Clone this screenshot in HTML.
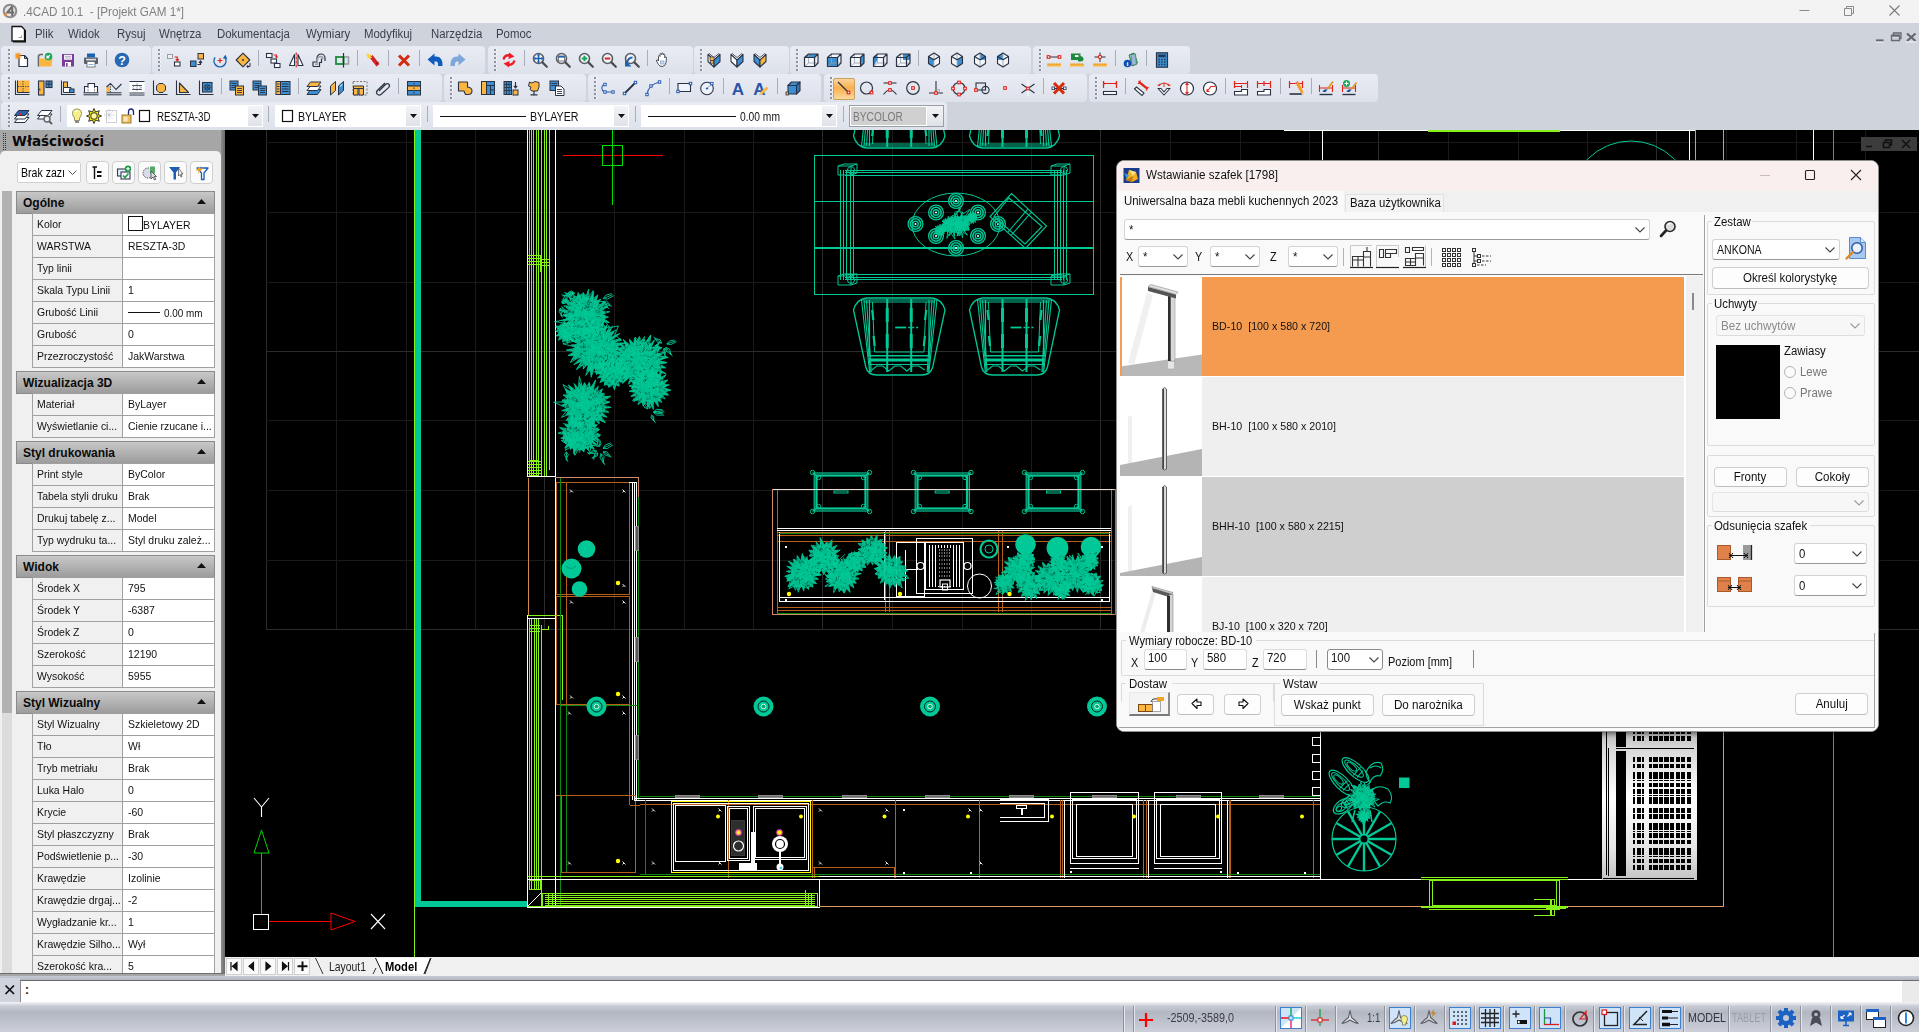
<!DOCTYPE html>
<html lang="pl"><head><meta charset="utf-8"><title>.4CAD 10.1 - [Projekt GAM 1*]</title>
<style>
*{box-sizing:border-box}
html,body{margin:0;padding:0}
body{width:1919px;height:1032px;position:relative;overflow:hidden;background:#cfd3dc;font-family:"Liberation Sans","DejaVu Sans",sans-serif;font-size:12px;color:#000}
.abs{position:absolute}
#title{position:absolute;left:0;top:0;width:1919px;height:23px;background:#f3f3f3}
#title .t{position:absolute;left:23px;top:4px;font-size:13.5px;color:#808080;white-space:pre;transform-origin:0 50%;transform:scaleX(.865)}
#menu{position:absolute;left:0;top:23px;width:1919px;height:23px;background:#cfd3dc}
#menu span{position:absolute;top:4px;font-size:12px;color:#3a3f4a;white-space:pre;transform-origin:0 50%;transform:scaleX(.95)}
.tb{position:absolute;height:28px;background:linear-gradient(#e9ecf3,#dde1ea);border-radius:4px}
.grip{position:absolute;top:3px;width:3px;height:22px;background-image:linear-gradient(90deg,#8d929e 0 2px,#f4f6fa 2px 3px);-webkit-mask-image:repeating-linear-gradient(#000 0 2px,transparent 2px 4px);mask-image:repeating-linear-gradient(#000 0 2px,transparent 2px 4px)}
.sep{position:absolute;top:6px;width:1px;height:16px;background:#a8adb8}
svg{position:absolute;overflow:visible}
.ic{position:absolute;width:24px;height:24px}
</style></head><body>
<div id="title">
<svg style="left:2px;top:3px" width="16" height="16" viewBox="0 0 16 16"><circle cx="8" cy="8" r="6.3" fill="#e4e4e4" stroke="#8c8c8c" stroke-width="2"/><path d="M10.5 3.2 L5.2 9.6 H12.2 M10.2 3.4 V13" fill="none" stroke="#6e6e6e" stroke-width="2"/><circle cx="3.6" cy="11.6" r="1.4" fill="#f08a1c"/></svg>
<div class="t">.4CAD 10.1  - [Projekt GAM 1*]</div>
<svg style="left:1789px;top:0" width="129" height="22" viewBox="0 0 129 22"><path d="M10.5 10.5H20.5" stroke="#8a8a8a" stroke-width="1" fill="none"/><path d="M55.5 8.5h7v7h-7z M57.5 8.5v-2h7v7h-2" stroke="#8a8a8a" stroke-width="1" fill="none"/><path d="M100.5 5.5l10 10M110.5 5.5l-10 10" stroke="#7a7a7a" stroke-width="1.1" fill="none"/></svg>
</div>
<div id="menu">
<svg style="left:11px;top:2px" width="16" height="18" viewBox="0 0 16 18"><path d="M1 1.5H10.5L13.5 4.5V16H1Z" fill="#fff" stroke="#111" stroke-width="1.3"/><path d="M2 16.8H14.3V5" fill="none" stroke="#111" stroke-width="1.4"/><path d="M7.5 12.5H10.5V10.5" fill="none" stroke="#999" stroke-width="1"/></svg>
<span style="left:35px">Plik</span><span style="left:68px">Widok</span><span style="left:117px">Rysuj</span><span style="left:159px">Wnętrza</span><span style="left:217px">Dokumentacja</span><span style="left:306px">Wymiary</span><span style="left:364px">Modyfikuj</span><span style="left:431px">Narzędzia</span><span style="left:496px">Pomoc</span>
<svg style="left:1870px;top:7px" width="49" height="14" viewBox="0 0 49 14"><path d="M6 10.500h7.500" stroke="#63666d" stroke-width="2.200"/><path d="M6 12h7.500" stroke="#f4f5f8" stroke-width="1"/><path d="M21.500 5.500h8v5h-8z M23.500 5v-2h7.500v5.500h-1.500" stroke="#666a72" stroke-width="1.300" fill="none"/><path d="M21.500 5.500h8" stroke="#63666d" stroke-width="2"/><path d="M37 3.500l8.500 7.500M45.500 3.500l-8.500 7.500" stroke="#63666d" stroke-width="2.200" fill="none"/><path d="M36 12h10.500" stroke="#f4f5f8" stroke-width="1"/></svg>
</div>
<div class="tb" style="left:1px;top:46px;width:150px"><i class="grip" style="left:7px"></i></div>
<div class="tb" style="left:152px;top:46px;width:333px"><i class="grip" style="left:6px"></i></div>
<div class="tb" style="left:488px;top:46px;width:205px"><i class="grip" style="left:6px"></i></div>
<div class="tb" style="left:694px;top:46px;width:95px"><i class="grip" style="left:6px"></i></div>
<div class="tb" style="left:790px;top:46px;width:241px"><i class="grip" style="left:6px"></i></div>
<div class="tb" style="left:1033px;top:46px;width:157px"><i class="grip" style="left:6px"></i></div>
<div class="tb" style="left:1px;top:74px;width:441px"><i class="grip" style="left:7px"></i></div>
<div class="tb" style="left:444px;top:74px;width:142px"><i class="grip" style="left:6px"></i></div>
<div class="tb" style="left:588px;top:74px;width:233px"><i class="grip" style="left:6px"></i></div>
<div class="tb" style="left:824px;top:74px;width:263px"><i class="grip" style="left:6px"></i></div>
<div class="tb" style="left:1089px;top:74px;width:289px"><i class="grip" style="left:6px"></i></div>
<div class="tb" style="left:1px;top:102px;width:946px"><i class="grip" style="left:7px"></i></div>
<div class="abs" style="left:833px;top:78px;width:22px;height:22px;background:linear-gradient(#fbd49a,#f9b04e 45%,#fcd9a0);border:1px solid #c8a060;border-radius:2px"></div>
<svg style="left:14px;top:52px" width="16" height="16" viewBox="0 0 16 16"><path d="M5 3.5H10.5L13.5 6.5V14.5H5Z" fill="#fff" stroke="#2a3345" stroke-width="1.2" stroke-linejoin="round"/><path d="M10.5 3.5V6.5H13.5" fill="none" stroke="#2a3345" stroke-width="1"/><path d="M4 0.5V7.5M0.5 4H7.5M1.5 1.5L6.5 6.5M6.5 1.5L1.5 6.5" stroke="#f7941d" stroke-width="1.2"/></svg>
<svg style="left:37px;top:52px" width="16" height="16" viewBox="0 0 16 16"><path d="M1.5 14.5V4.5Q1.5 2.5 4 2.5H6" fill="none" stroke="#666" stroke-width="1.6"/><path d="M2 14.5L3 6.5H15.5L14.5 14.5Z" fill="#fbb642"/><circle cx="11.5" cy="4.5" r="3.8" fill="#17a65a"/><path d="M13 3L10.3 5.7M10 3.6V6H12.4" stroke="#fff" stroke-width="1.2" fill="none"/></svg>
<svg style="left:60px;top:52px" width="16" height="16" viewBox="0 0 16 16"><path d="M2 2H14V14.5H2Z" fill="#7a3e98"/><rect x="4" y="2.8" width="8" height="5" fill="#f3eef6"/><path d="M5 4.5H11M5 6H11" stroke="#b9a3c6" stroke-width=".8"/><rect x="5" y="10" width="6" height="4.5" fill="#fff"/><rect x="6" y="11" width="1.6" height="3.5" fill="#7a3e98"/></svg>
<svg style="left:83px;top:52px" width="16" height="16" viewBox="0 0 16 16"><rect x="4" y="1.5" width="8" height="4" fill="#1c62b4"/><rect x="1" y="5.5" width="14" height="6.5" rx="1" fill="#5b6068"/><rect x="4" y="9.5" width="8" height="5.5" fill="#fff" stroke="#5b6068" stroke-width=".8"/><path d="M5.5 12.5H10.5" stroke="#7db2e6" stroke-width="1"/><rect x="3" y="6.8" width="10" height="1.6" fill="#dfe3ea"/></svg>
<i class="sep" style="left:106px;top:50px"></i>
<svg style="left:114px;top:52px" width="16" height="16" viewBox="0 0 16 16"><circle cx="8" cy="8" r="7.3" fill="#2869b3"/><text x="8" y="12.6" font-size="12.5" font-weight="bold" text-anchor="middle" fill="#fff" font-family="Liberation Sans,sans-serif">?</text></svg>
<svg style="left:166px;top:52px" width="16" height="16" viewBox="0 0 16 16"><rect x="1.5" y="2.5" width="5" height="4" fill="#eef0f3" stroke="#9a9ea6" stroke-width="1"/><rect x="8.5" y="10" width="5.5" height="4" fill="#fff" stroke="#2a3345" stroke-width="1.1"/><path d="M8.5 5H11.3V8.5M9.8 7.2L11.3 8.8L12.8 7.2" fill="none" stroke="#e3211b" stroke-width="1.2"/></svg>
<svg style="left:189px;top:52px" width="16" height="16" viewBox="0 0 16 16"><rect x="1.5" y="9" width="5.5" height="5.5" fill="#3b8fd2" stroke="#2a3345" stroke-width="1"/><rect x="9" y="1.5" width="5.5" height="5.5" fill="#fbb642" stroke="#2a3345" stroke-width="1"/><path d="M8.5 12.5H11.5V9.5M10 10.8L11.5 9L13 10.8" fill="none" stroke="#2a3345" stroke-width="1.2"/></svg>
<svg style="left:212px;top:52px" width="16" height="16" viewBox="0 0 16 16"><path d="M3 5.5A6 6 0 1 0 13 5.5" fill="none" stroke="#1c62b4" stroke-width="1.5"/><path d="M10.8 6.5L13.3 2.8L15.3 6.8Z" fill="#1c62b4"/><path d="M8 6V11M5.5 8.5H10.5" stroke="#e3211b" stroke-width="1.2"/></svg>
<svg style="left:235px;top:52px" width="16" height="16" viewBox="0 0 16 16"><path d="M8 1.2L14.8 8L8 14.8L1.2 8Z" fill="#fbb642" stroke="#2a3345" stroke-width="1.1" stroke-linejoin="round"/><circle cx="8" cy="8" r="1" fill="#2a3345"/><path d="M15 11V14.5H12M13.3 13L11.8 14.5L13.3 16" fill="none" stroke="#2a3345" stroke-width="1"/></svg>
<i class="sep" style="left:258px;top:50px"></i>
<svg style="left:265px;top:52px" width="16" height="16" viewBox="0 0 16 16"><rect x="1.5" y="1.5" width="5.5" height="4" fill="#fff" stroke="#2a3345" stroke-width="1.1"/><rect x="6" y="7" width="5.5" height="4" fill="#fff" stroke="#2a3345" stroke-width="1.1"/><rect x="9.5" y="11.5" width="5.5" height="4" fill="#fff" stroke="#2a3345" stroke-width="1.1"/><path d="M8.5 3H11.5V5.5M10.3 4.5L11.5 5.8L12.7 4.5" fill="none" stroke="#e3211b" stroke-width="1.1"/></svg>
<svg style="left:288px;top:52px" width="16" height="16" viewBox="0 0 16 16"><path d="M6.5 2.5V13.5H1.5Z" fill="#fff" stroke="#2a3345" stroke-width="1.1" stroke-linejoin="round"/><path d="M10 2.5V13.5H15Z" fill="#fff" stroke="#2a3345" stroke-width="1.1" stroke-linejoin="round"/><path d="M8.2 0.5V15.5" stroke="#e3211b" stroke-width="1.1" stroke-dasharray="3 1"/></svg>
<svg style="left:311px;top:52px" width="16" height="16" viewBox="0 0 16 16"><path d="M2 14.5V10H6V6A4 4 0 0 1 14 6V9" fill="none" stroke="#2a3345" stroke-width="1.2"/><path d="M2 14.5H8.5V10.5H10.5V6.5" fill="none" stroke="#2a3345" stroke-width="1.2"/><path d="M4 12.3H6.3V8.3Q6.3 4.5 10 4.5Q12 4.5 12 7" fill="none" stroke="#9aa0aa" stroke-width="1.4"/></svg>
<svg style="left:334px;top:52px" width="16" height="16" viewBox="0 0 16 16"><rect x="9.5" y="5" width="5" height="7" fill="none" stroke="#9a9ea6" stroke-width="1.6"/><rect x="2" y="5" width="7.5" height="7" fill="none" stroke="#1e8a3c" stroke-width="1.8"/><path d="M9.5 1V15.5" stroke="#2a3345" stroke-width="1.2"/></svg>
<i class="sep" style="left:357px;top:50px"></i>
<svg style="left:365px;top:52px" width="16" height="16" viewBox="0 0 16 16"><path d="M4.5 5.5L7.5 3L14.5 12L11.5 14.5Z" fill="#d42027"/><path d="M11 12L13.5 10" stroke="#7a0d12" stroke-width="1"/><path d="M3 1L4.2 3L6.5 2.2L5.8 4.5L7.5 5.5L4.5 6.5L2 6L2.8 4L1 3Z" fill="#fbd23a"/></svg>
<i class="sep" style="left:388px;top:50px"></i>
<svg style="left:396px;top:52px" width="16" height="16" viewBox="0 0 16 16"><path d="M3 3.5L13 13.5M13 3.5L3 13.5" stroke="#d52b0d" stroke-width="3"/></svg>
<i class="sep" style="left:419px;top:50px"></i>
<svg style="left:427px;top:52px" width="16" height="16" viewBox="0 0 16 16"><path d="M15.500 14Q16 4.500 9 4.500H7.500V1.500L0.500 7.500L7.500 13.500V9.500H9Q11.500 9.500 11 14Z" fill="#0f5cbd"/></svg>
<svg style="left:450px;top:52px" width="16" height="16" viewBox="0 0 16 16"><path d="M0.500 14Q0 4.500 7 4.500H8.500V1.500L15.500 7.500L8.500 13.500V9.500H7Q4.500 9.500 5 14Z" fill="#7ea8dc"/></svg>
<svg style="left:501px;top:52px" width="16" height="16" viewBox="0 0 16 16"><path d="M2.5 7.5Q4 2.5 9 3.5" fill="none" stroke="#ee1c25" stroke-width="2.4"/><path d="M8 0.5L13.5 4.5L7.5 7Z" fill="#ee1c25"/><path d="M13.5 8.5Q12 13.5 7 12.5" fill="none" stroke="#ee1c25" stroke-width="2.4"/><path d="M8 15.5L2.5 11.5L8.5 9Z" fill="#ee1c25"/></svg>
<i class="sep" style="left:524px;top:50px"></i>
<svg style="left:532px;top:52px" width="16" height="16" viewBox="0 0 16 16"><circle cx="6.5" cy="6.5" r="5" fill="#f2f3f5" stroke="#5a5d63" stroke-width="1.6"/><path d="M10.4 10.4L14.8 14.8" stroke="#4a4d53" stroke-width="2.2" stroke-linecap="round"/><path d="M6.5 2.5V10.5M2.5 6.5H10.5" stroke="#1c62b4" stroke-width="1.6"/><path d="M6.5 1.5L8 3.5H5ZM6.5 11.5L8 9.5H5ZM1.5 6.5L3.5 5V8ZM11.5 6.5L9.5 5V8Z" fill="#1c62b4"/></svg>
<svg style="left:555px;top:52px" width="16" height="16" viewBox="0 0 16 16"><circle cx="6.5" cy="6.5" r="5" fill="#f2f3f5" stroke="#5a5d63" stroke-width="1.6"/><path d="M10.4 10.4L14.8 14.8" stroke="#4a4d53" stroke-width="2.2" stroke-linecap="round"/><rect x="3.5" y="4" width="6" height="5" fill="#fff" stroke="#5a5d63" stroke-width=".8"/><rect x="3.5" y="4" width="6" height="1.6" fill="#1c62b4"/></svg>
<svg style="left:578px;top:52px" width="16" height="16" viewBox="0 0 16 16"><circle cx="6.5" cy="6.5" r="5" fill="#f2f3f5" stroke="#5a5d63" stroke-width="1.6"/><path d="M10.4 10.4L14.8 14.8" stroke="#4a4d53" stroke-width="2.2" stroke-linecap="round"/><path d="M6.5 3.8V9.2M3.8 6.5H9.2" stroke="#17a65a" stroke-width="2"/></svg>
<svg style="left:601px;top:52px" width="16" height="16" viewBox="0 0 16 16"><circle cx="6.5" cy="6.5" r="5" fill="#f2f3f5" stroke="#5a5d63" stroke-width="1.6"/><path d="M10.4 10.4L14.8 14.8" stroke="#4a4d53" stroke-width="2.2" stroke-linecap="round"/><path d="M3.8 6.5H9.2" stroke="#e3211b" stroke-width="2"/></svg>
<svg style="left:624px;top:52px" width="16" height="16" viewBox="0 0 16 16"><circle cx="6.5" cy="6.5" r="5" fill="#f2f3f5" stroke="#5a5d63" stroke-width="1.6"/><path d="M10.4 10.4L14.8 14.8" stroke="#4a4d53" stroke-width="2.2" stroke-linecap="round"/><path d="M1 14.5V8L7.5 14.5Z" fill="#1c62b4"/><path d="M3 11Q4 5.5 8.5 5.5" fill="none" stroke="#1c62b4" stroke-width="1.8"/></svg>
<i class="sep" style="left:647px;top:50px"></i>
<svg style="left:654px;top:52px" width="16" height="16" viewBox="0 0 16 16"><path d="M4.5 9V4.5Q4.5 3.5 5.3 3.5Q6 3.5 6 4.5V2.5Q6 1.5 6.8 1.5Q7.6 1.5 7.6 2.5V2Q7.6 1 8.4 1Q9.2 1 9.2 2V3Q9.2 2 10 2Q10.8 2 10.8 3V6Q11 5 11.8 5Q12.6 5 12.5 6.2L12 10.5Q11.5 14.5 8 14.5Q5.5 14.5 4.5 12.5L2.5 9Q2.2 8 3 7.8Q3.8 7.8 4.5 9Z" fill="#fff" stroke="#3a3f4a" stroke-width=".9"/><rect x="6.5" y="9" width="3.5" height="3" fill="#cfe0f5" stroke="#6a8fc0" stroke-width=".6"/></svg>
<svg style="left:706px;top:52px" width="16" height="16" viewBox="0 0 16 16"><path d="M2 2.5L8 8L14 2.5L13 1.5L8 5.5L3 1.5Z" fill="#fff" stroke="#2a3345" stroke-width=".8"/><path d="M2 2.5L8 8V15L2 9.5Z" fill="#fff" stroke="#2a3345" stroke-width="1.1" stroke-linejoin="round"/><path d="M14 2.5L8 8V15L14 9.5Z" fill="#3b8fd2" stroke="#2a3345" stroke-width="1.1" stroke-linejoin="round"/><rect x="4" y="5" width="4" height="3.5" fill="#fbb642" stroke="#2a3345" stroke-width=".7"/><rect x="4.5" y="8.7" width="3.2" height="2.5" fill="#fbb642" stroke="#2a3345" stroke-width=".7"/></svg>
<svg style="left:729px;top:52px" width="16" height="16" viewBox="0 0 16 16"><path d="M2 2.5L8 8L14 2.5L13 1.5L8 5.5L3 1.5Z" fill="#fff" stroke="#2a3345" stroke-width=".8"/><path d="M2 2.5L8 8V15L2 9.5Z" fill="#fff" stroke="#2a3345" stroke-width="1.1" stroke-linejoin="round"/><path d="M14 2.5L8 8V15L14 9.5Z" fill="#3b8fd2" stroke="#2a3345" stroke-width="1.1" stroke-linejoin="round"/></svg>
<svg style="left:752px;top:52px" width="16" height="16" viewBox="0 0 16 16"><path d="M2 2.5L8 8L14 2.5L13 1.5L8 5.5L3 1.5Z" fill="#fff" stroke="#2a3345" stroke-width=".8"/><path d="M2 2.5L8 8V15L2 9.5Z" fill="#3b8fd2" stroke="#2a3345" stroke-width="1.1" stroke-linejoin="round"/><path d="M14 2.5L8 8V15L14 9.5Z" fill="#fbb642" stroke="#2a3345" stroke-width="1.1" stroke-linejoin="round"/></svg>
<svg style="left:803px;top:52px" width="16" height="16" viewBox="0 0 16 16"><path d="M1.5 5.5H11.5V14.5H1.5Z M1.5 5.5L5.5 2H15L11.5 5.5 M15 2V11L11.5 14.5" fill="#f4f6fa" stroke="none"/><path d="M1.5 5.5L5.5 2H15L11.5 5.5Z" fill="#3b8fd2"/><path d="M5.5 2V11H15M5.5 11L1.5 14.5" fill="none" stroke="#9aa0aa" stroke-width=".8"/><path d="M1.5 5.5H11.5V14.5H1.5Z M1.5 5.5L5.5 2H15L11.5 5.5 M15 2V11L11.5 14.5" fill="none" stroke="#2a3345" stroke-width="1.2" stroke-linejoin="round"/></svg>
<svg style="left:826px;top:52px" width="16" height="16" viewBox="0 0 16 16"><path d="M1.5 5.5H11.5V14.5H1.5Z M1.5 5.5L5.5 2H15L11.5 5.5 M15 2V11L11.5 14.5" fill="#f4f6fa" stroke="none"/><path d="M1.5 5.5H11.5V14.5H1.5Z" fill="#3b8fd2"/><path d="M5.5 2V11H15M5.5 11L1.5 14.5" fill="none" stroke="#9aa0aa" stroke-width=".8"/><path d="M1.5 5.5H11.5V14.5H1.5Z M1.5 5.5L5.5 2H15L11.5 5.5 M15 2V11L11.5 14.5" fill="none" stroke="#2a3345" stroke-width="1.2" stroke-linejoin="round"/></svg>
<svg style="left:849px;top:52px" width="16" height="16" viewBox="0 0 16 16"><path d="M1.5 5.5H11.5V14.5H1.5Z M1.5 5.5L5.5 2H15L11.5 5.5 M15 2V11L11.5 14.5" fill="#f4f6fa" stroke="none"/><path d="M11.5 5.5L15 2V11L11.5 14.5Z" fill="#3b8fd2"/><path d="M5.5 2V11H15M5.5 11L1.5 14.5" fill="none" stroke="#9aa0aa" stroke-width=".8"/><path d="M1.5 5.5H11.5V14.5H1.5Z M1.5 5.5L5.5 2H15L11.5 5.5 M15 2V11L11.5 14.5" fill="none" stroke="#2a3345" stroke-width="1.2" stroke-linejoin="round"/></svg>
<svg style="left:872px;top:52px" width="16" height="16" viewBox="0 0 16 16"><path d="M1.5 5.5H11.5V14.5H1.5Z M1.5 5.5L5.5 2H15L11.5 5.5 M15 2V11L11.5 14.5" fill="#f4f6fa" stroke="none"/><path d="M1.5 5.5L5.5 2V8 L1.5 14.5Z" fill="#3b8fd2"/><path d="M5.5 2V11H15M5.5 11L1.5 14.5" fill="none" stroke="#9aa0aa" stroke-width=".8"/><path d="M1.5 5.5H11.5V14.5H1.5Z M1.5 5.5L5.5 2H15L11.5 5.5 M15 2V11L11.5 14.5" fill="none" stroke="#2a3345" stroke-width="1.2" stroke-linejoin="round"/></svg>
<svg style="left:895px;top:52px" width="16" height="16" viewBox="0 0 16 16"><path d="M1.5 5.5H11.5V14.5H1.5Z M1.5 5.5L5.5 2H15L11.5 5.5 M15 2V11L11.5 14.5" fill="#f4f6fa" stroke="none"/><path d="M8 2H15V8H8Z" fill="#3b8fd2"/><path d="M5.5 2V11H15M5.5 11L1.5 14.5" fill="none" stroke="#9aa0aa" stroke-width=".8"/><path d="M1.5 5.5H11.5V14.5H1.5Z M1.5 5.5L5.5 2H15L11.5 5.5 M15 2V11L11.5 14.5" fill="none" stroke="#2a3345" stroke-width="1.2" stroke-linejoin="round"/></svg>
<i class="sep" style="left:918px;top:50px"></i>
<svg style="left:926px;top:52px" width="16" height="16" viewBox="0 0 16 16"><path d="M8 1L13.5 4.5V11.5L8 15L2.5 11.5V4.5Z" fill="#f4f6fa"/><path d="M2.5 4.5L8 7.8V15L2.5 11.5Z" fill="#3b8fd2"/><path d="M8 1V15" stroke="#aab0ba" stroke-width="1"/><path d="M8 1L13.5 4.5V11.5L8 15L2.5 11.5V4.5Z M2.5 4.5L8 7.8L13.5 4.5" fill="none" stroke="#2a3345" stroke-width="1.1" stroke-linejoin="round"/></svg>
<svg style="left:949px;top:52px" width="16" height="16" viewBox="0 0 16 16"><path d="M8 1L13.5 4.5V11.5L8 15L2.5 11.5V4.5Z" fill="#f4f6fa"/><path d="M13.5 4.5L8 7.8V15L13.5 11.5Z" fill="#3b8fd2"/><path d="M8 1V15" stroke="#aab0ba" stroke-width="1"/><path d="M8 1L13.5 4.5V11.5L8 15L2.5 11.5V4.5Z M2.5 4.5L8 7.8L13.5 4.5" fill="none" stroke="#2a3345" stroke-width="1.1" stroke-linejoin="round"/></svg>
<svg style="left:972px;top:52px" width="16" height="16" viewBox="0 0 16 16"><path d="M8 1L13.5 4.5V11.5L8 15L2.5 11.5V4.5Z" fill="#f4f6fa"/><path d="M8 1L13.5 4.5V8L8 7.8Z" fill="#3b8fd2"/><path d="M8 1V15" stroke="#aab0ba" stroke-width="1"/><path d="M8 1L13.5 4.5V11.5L8 15L2.5 11.5V4.5Z M2.5 4.5L8 7.8L13.5 4.5" fill="none" stroke="#2a3345" stroke-width="1.1" stroke-linejoin="round"/></svg>
<svg style="left:995px;top:52px" width="16" height="16" viewBox="0 0 16 16"><path d="M8 1L13.5 4.5V11.5L8 15L2.5 11.5V4.5Z" fill="#f4f6fa"/><path d="M8 1L2.5 4.5V8L8 7.8Z" fill="#3b8fd2"/><path d="M8 1V15" stroke="#aab0ba" stroke-width="1"/><path d="M8 1L13.5 4.5V11.5L8 15L2.5 11.5V4.5Z M2.5 4.5L8 7.8L13.5 4.5" fill="none" stroke="#2a3345" stroke-width="1.1" stroke-linejoin="round"/></svg>
<svg style="left:1046px;top:52px" width="16" height="16" viewBox="0 0 16 16"><path d="M2 5H14" stroke="#2a3345" stroke-width="1"/><rect x="1.2" y="3.7" width="2.6" height="2.6" fill="#fff" stroke="#e3211b" stroke-width="1.1"/><rect x="12.2" y="3.7" width="2.6" height="2.6" fill="#fff" stroke="#e3211b" stroke-width="1.1"/><rect x="1" y="11.5" width="14" height="3" fill="#fbb642"/><path d="M3 11.5v1.5M5.5 11.5v1.5M8 11.5v1.5M10.5 11.5v1.5M13 11.5v1.5" stroke="#c98a1a" stroke-width=".7"/></svg>
<svg style="left:1069px;top:52px" width="16" height="16" viewBox="0 0 16 16"><path d="M2 1.5H11.5V4Q14.5 4.5 14.5 7Q14.5 9.5 11.5 9.5H9V8H2Z" fill="#1e8a3c"/><rect x="6" y="3" width="3.5" height="2" fill="#fff"/><rect x="1" y="11.5" width="14" height="3" fill="#fbb642"/><path d="M3 11.5v1.5M5.5 11.5v1.5M8 11.5v1.5M10.5 11.5v1.5M13 11.5v1.5" stroke="#c98a1a" stroke-width=".7"/></svg>
<svg style="left:1092px;top:52px" width="16" height="16" viewBox="0 0 16 16"><path d="M8 0.5V10M2.5 5H13.5" stroke="#2a3345" stroke-width="1"/><circle cx="8" cy="5" r="1.6" fill="#fff" stroke="#e3211b" stroke-width="1.1"/><rect x="1" y="11.5" width="14" height="3" fill="#fbb642"/><path d="M3 11.5v1.5M5.5 11.5v1.5M8 11.5v1.5M10.5 11.5v1.5M13 11.5v1.5" stroke="#c98a1a" stroke-width=".7"/></svg>
<i class="sep" style="left:1115px;top:50px"></i>
<svg style="left:1123px;top:52px" width="16" height="16" viewBox="0 0 16 16"><path d="M6 3L11 1L14.5 11L9.5 14Z" fill="#bfe3d0" stroke="#1e8a3c" stroke-width="1"/><path d="M8 2.5L12.5 2L13.5 12.5L8.5 13.5Z" fill="#9ab8d8" stroke="#3a7a5a" stroke-width=".8"/><circle cx="4.5" cy="11.5" r="3.8" fill="#0f4fb0"/><text x="4.5" y="14" font-size="7" font-weight="bold" text-anchor="middle" fill="#fff" font-family="Liberation Serif,serif">i</text></svg>
<i class="sep" style="left:1146px;top:50px"></i>
<svg style="left:1154px;top:52px" width="16" height="16" viewBox="0 0 16 16"><rect x="2.5" y="0.8" width="11" height="14.4" fill="#3b8fd2" stroke="#2a3345" stroke-width="1.2"/><rect x="4.3" y="2.6" width="7.4" height="2.6" fill="#2a3345"/><path d="M4.5 7.5h1.4M7.3 7.5h1.4M10.1 7.5h1.4M4.5 10h1.4M7.3 10h1.4M10.1 10h1.4M4.5 12.5h1.4M7.3 12.5h1.4M10.1 12.5h1.4" stroke="#2a3345" stroke-width="1.4"/></svg>
<svg style="left:14px;top:80px" width="16" height="16" viewBox="0 0 16 16"><rect x="3" y="0.5" width="12.5" height="12" fill="#fbb642"/><path d="M1.5 0.5V14.5H15.5" fill="none" stroke="#2a3345" stroke-width="1.1"/><path d="M3.5 0.5V12.5H15.5" fill="none" stroke="#2a3345" stroke-width="1"/><path d="M9 1V12M4 6.5H15" stroke="#2a3345" stroke-width=".9" stroke-dasharray="1.2 1.2"/></svg>
<svg style="left:37px;top:80px" width="16" height="16" viewBox="0 0 16 16"><rect x="1.5" y="1" width="5.5" height="14" fill="#fbb642" stroke="#2a3345" stroke-width="1.1"/><path d="M2.8 8.5v2" stroke="#2a3345" stroke-width="1"/><rect x="9" y="1" width="6" height="6.5" fill="#3b8fd2" stroke="#2a3345" stroke-width="1.1"/><path d="M12 1V7.5M9 4.2H15" stroke="#2a3345" stroke-width="1"/></svg>
<svg style="left:60px;top:80px" width="16" height="16" viewBox="0 0 16 16"><path d="M1.5 0.5V14.5H15.5" fill="none" stroke="#2a3345" stroke-width="1.1"/><rect x="3.5" y="2" width="4" height="5.5" fill="#fbb642" stroke="#2a3345" stroke-width="1"/><path d="M3.5 7.5H11V12.5H3.5Z" fill="#fff" stroke="#2a3345" stroke-width="1"/><rect x="9.5" y="9" width="4.5" height="3.5" fill="#3b8fd2" stroke="#2a3345" stroke-width="1"/></svg>
<svg style="left:83px;top:80px" width="16" height="16" viewBox="0 0 16 16"><path d="M1.5 12.5V6.5H5V3.5H11.5V6.5H14.5V12.5" fill="#fff" stroke="#2a3345" stroke-width="1.1"/><path d="M5 7V12.5M11.5 7V12.5" stroke="#2a3345" stroke-width=".9" stroke-dasharray="1.2 1.2"/><path d="M0.5 12.8H15.5M0.5 14.8H15.5" stroke="#2a3345" stroke-width="1"/></svg>
<svg style="left:106px;top:80px" width="16" height="16" viewBox="0 0 16 16"><rect x="0.5" y="6.5" width="3.5" height="6" fill="#fbb642"/><path d="M0.5 7L4.5 3.5L10 9.5L15.5 4" fill="none" stroke="#2a3345" stroke-width="1.1"/><path d="M4.5 4V12.5" stroke="#2a3345" stroke-width=".9" stroke-dasharray="1.2 1.2"/><path d="M0.5 12.8H15.5M0.5 14.8H15.5" stroke="#2a3345" stroke-width="1"/></svg>
<svg style="left:129px;top:80px" width="16" height="16" viewBox="0 0 16 16"><rect x="0.5" y="1" width="15" height="14" fill="#fff"/><path d="M0.5 1.5H15.5M0.5 13H15.5M0.5 15H15.5" stroke="#2a3345" stroke-width="1"/><ellipse cx="8" cy="7.5" rx="4" ry="2" fill="none" stroke="#2a3345" stroke-width=".8" stroke-dasharray="1 1"/><path d="M3 5.5H13M3 9.5H13" stroke="#2a3345" stroke-width=".8"/><path d="M8 3.5V11.5" stroke="#2a3345" stroke-width=".8" stroke-dasharray="1 1"/></svg>
<svg style="left:152px;top:80px" width="16" height="16" viewBox="0 0 16 16"><path d="M1.5 0.5V14.5H15.5" fill="none" stroke="#2a3345" stroke-width="1.1"/><path d="M7 3.5H11L13.5 6V10L11 12.5H7L4.5 10V6Z" fill="#fbb642" stroke="#2a3345" stroke-width="1"/></svg>
<svg style="left:175px;top:80px" width="16" height="16" viewBox="0 0 16 16"><path d="M1.5 0.5V14.5H15.5" fill="none" stroke="#2a3345" stroke-width="1.1"/><path d="M4.5 3V12.5H13.5Z" fill="#fbb642" stroke="#2a3345" stroke-width="1.1" stroke-linejoin="round"/></svg>
<svg style="left:198px;top:80px" width="16" height="16" viewBox="0 0 16 16"><path d="M1.5 0.5V14.5H15.5" fill="none" stroke="#2a3345" stroke-width="1.1"/><rect x="4.5" y="2.5" width="9.5" height="9.5" fill="#3b8fd2" stroke="#2a3345" stroke-width="1.1"/><path d="M7.5 5.5h.1M11 5.5h.1M7.5 9h.1M11 9h.1" stroke="#2a3345" stroke-width="2" stroke-linecap="round"/><path d="M9.25 3.5V11M5.5 7.25H13" stroke="#2a3345" stroke-width=".8"/></svg>
<i class="sep" style="left:221px;top:78px"></i>
<svg style="left:229px;top:80px" width="16" height="16" viewBox="0 0 16 16"><rect x="1" y="1" width="8" height="9" fill="#3b8fd2" stroke="#2a3345" stroke-width="1"/><path d="M2.5 3.5h5M2.5 5.5h5M2.5 7.5h5" stroke="#2a3345" stroke-width=".9"/><rect x="6.5" y="6" width="8" height="9" fill="#fbb642" stroke="#2a3345" stroke-width="1"/><path d="M8.0 8.5h5M8.0 10.5h5M8.0 12.5h5" stroke="#2a3345" stroke-width=".9"/></svg>
<svg style="left:252px;top:80px" width="16" height="16" viewBox="0 0 16 16"><rect x="1" y="1" width="8" height="9" fill="#3b8fd2" stroke="#2a3345" stroke-width="1"/><path d="M2.5 3.5h5M2.5 5.5h5M2.5 7.5h5" stroke="#2a3345" stroke-width=".9"/><rect x="6.5" y="6" width="8" height="9" fill="#3b8fd2" stroke="#2a3345" stroke-width="1"/><path d="M8.0 8.5h5M8.0 10.5h5M8.0 12.5h5" stroke="#2a3345" stroke-width=".9"/></svg>
<svg style="left:275px;top:80px" width="16" height="16" viewBox="0 0 16 16"><rect x="1" y="1.5" width="4.5" height="13" fill="#fbb642" stroke="#2a3345" stroke-width="1"/><rect x="5.5" y="1.5" width="9.5" height="13" fill="#3b8fd2" stroke="#2a3345" stroke-width="1"/><path d="M2 4h2.5M2 6.5h2.5M2 9h2.5M2 11.5h2.5M7 4h6.5M7 6.5h6.5M7 9h6.5M7 11.5h6.5" stroke="#2a3345" stroke-width="1"/></svg>
<i class="sep" style="left:298px;top:78px"></i>
<svg style="left:306px;top:80px" width="16" height="16" viewBox="0 0 16 16"><path d="M4.5 9.5H15L11.5 14.5H1Z" fill="#3b8fd2" stroke="#2a3345" stroke-width="1" stroke-linejoin="round"/><path d="M4.5 6H15L11.5 10.5H1Z" fill="#fff" stroke="#2a3345" stroke-width="1" stroke-linejoin="round"/><path d="M4.5 2H15L11.5 6.5H1Z" fill="#fbb642" stroke="#2a3345" stroke-width="1" stroke-linejoin="round"/></svg>
<svg style="left:329px;top:80px" width="16" height="16" viewBox="0 0 16 16"><path d="M1.5 6L6.5 1.5V10.5L1.5 15Z" fill="#fbb642" stroke="#2a3345" stroke-width="1" stroke-linejoin="round"/><path d="M9.5 6L14.5 1.5V10.5L9.5 15Z" fill="#3b8fd2" stroke="#2a3345" stroke-width="1" stroke-linejoin="round"/><path d="M11 6.5L13.5 4.2" stroke="#fff" stroke-width="1"/></svg>
<svg style="left:352px;top:80px" width="16" height="16" viewBox="0 0 16 16"><rect x="1" y="1.5" width="14" height="13.5" fill="none" stroke="#777" stroke-width="1" stroke-dasharray="2 1.5"/><path d="M1.5 6H11.5V8.5H1.5ZM1.5 8.5H6V15H1.5ZM7 8.5H11.5V15H7Z" fill="#fbb642" stroke="#2a3345" stroke-width="1"/></svg>
<svg style="left:375px;top:80px" width="16" height="16" viewBox="0 0 16 16"><path d="M4 11L10.5 4.5Q12.5 2.8 14 4.3Q15.3 5.8 13.5 7.6L6.5 14Q4 16 2.2 14.2Q0.5 12.2 2.8 10L10 3" fill="none" stroke="#2a3345" stroke-width="1.2"/></svg>
<i class="sep" style="left:398px;top:78px"></i>
<svg style="left:406px;top:80px" width="16" height="16" viewBox="0 0 16 16"><rect x="1.5" y="1.5" width="13" height="4.5" fill="#3b8fd2" stroke="#2a3345" stroke-width="1"/><rect x="1.5" y="6" width="13" height="4.5" fill="#fbb642" stroke="#2a3345" stroke-width="1"/><rect x="1.5" y="10.5" width="13" height="4.5" fill="#3b8fd2" stroke="#2a3345" stroke-width="1"/><path d="M7.5 3.8h1M7.5 8.3h1M7.5 12.8h1" stroke="#2a3345" stroke-width="1.4"/></svg>
<svg style="left:457px;top:80px" width="16" height="16" viewBox="0 0 16 16"><path d="M1.5 2H10.5V7Q15 7.5 15 11Q15 14.5 11 14.5H8.5L7 11H1.5Z" fill="#fbb642" stroke="#2a3345" stroke-width="1.1" stroke-linejoin="round"/></svg>
<svg style="left:480px;top:80px" width="16" height="16" viewBox="0 0 16 16"><rect x="1.5" y="1.5" width="5" height="13" fill="#fbb642" stroke="#2a3345" stroke-width="1"/><rect x="6.5" y="1.5" width="8" height="13" fill="#3b8fd2" stroke="#2a3345" stroke-width="1"/><path d="M6.5 5.5H14.5M10.5 5.5V14.5M10.5 10H14.5" stroke="#2a3345" stroke-width="1"/></svg>
<svg style="left:503px;top:80px" width="16" height="16" viewBox="0 0 16 16"><rect x="1" y="1.5" width="7.5" height="13" fill="#3b8fd2" stroke="#2a3345" stroke-width="1"/><path d="M3.5 1.5V14.5M6 1.5V14.5M1 4.5H8.5M1 7.5H8.5M1 10.5H8.5" stroke="#2a3345" stroke-width=".9"/><rect x="10" y="10" width="5" height="5" fill="#fbb642" stroke="#2a3345" stroke-width="1"/><path d="M12.5 2V7.5M10.8 5.8L12.5 7.8L14.2 5.8" fill="none" stroke="#2a3345" stroke-width="1.1"/></svg>
<svg style="left:526px;top:80px" width="16" height="16" viewBox="0 0 16 16"><path d="M3.5 2L6 3L9 1.5L13 2.5V7L11.5 11H6L4 9.5L5 7L2.5 6Z" fill="#fbb642" stroke="#2a3345" stroke-width="1" stroke-linejoin="round"/><path d="M8 11V14.5M4.5 14.8H11.5" stroke="#2a3345" stroke-width="1.2"/></svg>
<svg style="left:549px;top:80px" width="16" height="16" viewBox="0 0 16 16"><rect x="1" y="1" width="8.5" height="9.5" fill="#3b8fd2" stroke="#2a3345" stroke-width="1"/><path d="M2.5 3.5h5.5M2.5 5.5h5.5" stroke="#2a3345" stroke-width=".9"/><path d="M6.5 6H12L15 9V15.5H6.5Z" fill="#fff" stroke="#2a3345" stroke-width="1"/><path d="M8 9.5h5M8 11.5h5M8 13.5h5" stroke="#2a3345" stroke-width=".9"/></svg>
<svg style="left:599px;top:80px" width="16" height="16" viewBox="0 0 16 16"><path d="M6 4.5Q1.5 5.5 3.5 10.5L6 12H14" fill="none" stroke="#2a5db0" stroke-width="1.1"/><rect x="4.8" y="3.3" width="2.4" height="2.4" fill="#fff" stroke="#2a5db0" stroke-width="1"/><rect x="4.8" y="10.8" width="2.4" height="2.4" fill="#fff" stroke="#2a5db0" stroke-width="1"/><rect x="12.8" y="10.8" width="2.4" height="2.4" fill="#fff" stroke="#2a5db0" stroke-width="1"/></svg>
<svg style="left:622px;top:80px" width="16" height="16" viewBox="0 0 16 16"><path d="M2.5 13.5L13.5 2.5" stroke="#2a3345" stroke-width="1.8"/><rect x="1.3" y="12.3" width="2.4" height="2.4" fill="#fff" stroke="#2a5db0" stroke-width="1"/><rect x="12.3" y="1.3" width="2.4" height="2.4" fill="#fff" stroke="#2a5db0" stroke-width="1"/></svg>
<svg style="left:645px;top:80px" width="16" height="16" viewBox="0 0 16 16"><path d="M2 14.5Q3 5 14.5 2" fill="none" stroke="#2a5db0" stroke-width="1.1"/><rect x="0.8" y="13.3" width="2.4" height="2.4" fill="#fff" stroke="#2a5db0" stroke-width="1"/><rect x="4.8" y="4.8" width="2.4" height="2.4" fill="#fff" stroke="#2a5db0" stroke-width="1"/><rect x="13.3" y="0.8" width="2.4" height="2.4" fill="#fff" stroke="#2a5db0" stroke-width="1"/></svg>
<i class="sep" style="left:669px;top:78px"></i>
<svg style="left:676px;top:80px" width="16" height="16" viewBox="0 0 16 16"><path d="M2 3.5H14.5V11.5H2Z" fill="#eef2fa" stroke="#2a3345" stroke-width="1.1"/><rect x="13.3" y="2.3" width="2.4" height="2.4" fill="#fff" stroke="#2a5db0" stroke-width="1"/><rect x="0.8" y="10.3" width="2.4" height="2.4" fill="#fff" stroke="#2a5db0" stroke-width="1"/></svg>
<svg style="left:699px;top:80px" width="16" height="16" viewBox="0 0 16 16"><circle cx="8" cy="8.5" r="6.3" fill="#eef2fa" stroke="#2a3345" stroke-width="1.1"/><path d="M8 8.5L12.5 4" stroke="#2a5db0" stroke-width=".9" stroke-dasharray="1.5 1"/><path d="M8 7.3V9.7M6.8 8.5H9.2" stroke="#2a5db0" stroke-width="1"/><rect x="11.600000000000001" y="2.4000000000000004" width="2.4" height="2.4" fill="#fff" stroke="#2a5db0" stroke-width="1"/></svg>
<i class="sep" style="left:723px;top:78px"></i>
<svg style="left:730px;top:80px" width="16" height="16" viewBox="0 0 16 16"><text x="8" y="14.5" font-size="17" font-weight="bold" text-anchor="middle" fill="#2b55a8" font-family="Liberation Sans,sans-serif">A</text></svg>
<svg style="left:753px;top:80px" width="16" height="16" viewBox="0 0 16 16"><text x="6.5" y="14.5" font-size="17" font-weight="bold" text-anchor="middle" fill="#2b55a8" font-family="Liberation Sans,sans-serif">A</text><path d="M6 15.5L7 12.5L13.5 6.5L15.5 8.5L9 14.5Z" fill="#fbb642"/><path d="M6 15.5L7 12.5L9 14.5Z" fill="#e8c9a0"/></svg>
<i class="sep" style="left:777px;top:78px"></i>
<svg style="left:785px;top:80px" width="16" height="16" viewBox="0 0 16 16"><path d="M3 5.5H11.5V14H3Z" fill="#3b8fd2" stroke="#2a3345" stroke-width="1.1"/><path d="M3 5.5L6.5 2H15L11.5 5.5Z" fill="#3b8fd2" stroke="#2a3345" stroke-width="1.1" stroke-linejoin="round"/><path d="M11.5 5.5L15 2V10.5L11.5 14Z" fill="#2f79b8" stroke="#2a3345" stroke-width="1.1" stroke-linejoin="round"/><rect x="1" y="12" width="2.5" height="3" fill="#fbb642" stroke="#2a3345" stroke-width=".8"/></svg>
<svg style="left:836px;top:80px" width="16" height="16" viewBox="0 0 16 16"><path d="M2 2L12.5 12.5" stroke="#2a3345" stroke-width="1.3"/><rect x="11.2" y="11.2" width="2.6" height="2.6" fill="#fff" stroke="#e3211b" stroke-width="1.1"/></svg>
<svg style="left:859px;top:80px" width="16" height="16" viewBox="0 0 16 16"><circle cx="7.5" cy="8" r="6" fill="none" stroke="#2a3345" stroke-width="1.2"/><rect x="11.2" y="11.2" width="2.6" height="2.6" fill="#fff" stroke="#e3211b" stroke-width="1.1"/></svg>
<svg style="left:882px;top:80px" width="16" height="16" viewBox="0 0 16 16"><path d="M1.5 3H14.5" stroke="#2a3345" stroke-width="1.1"/><path d="M1.5 14.5Q8 5.5 14.5 14.5" fill="none" stroke="#2a3345" stroke-width="1.1"/><rect x="6.7" y="1.7" width="2.6" height="2.6" fill="#fff" stroke="#e3211b" stroke-width="1.1"/><rect x="6.7" y="8.7" width="2.6" height="2.6" fill="#fff" stroke="#e3211b" stroke-width="1.1"/></svg>
<svg style="left:905px;top:80px" width="16" height="16" viewBox="0 0 16 16"><circle cx="8" cy="8" r="6.3" fill="none" stroke="#2a3345" stroke-width="1.2"/><rect x="6.7" y="6.7" width="2.6" height="2.6" fill="#fff" stroke="#e3211b" stroke-width="1.1"/></svg>
<svg style="left:928px;top:80px" width="16" height="16" viewBox="0 0 16 16"><path d="M8 1V13M1 13H15" stroke="#2a3345" stroke-width="1.1"/><path d="M8 9.5H11.5V13" fill="none" stroke="#999" stroke-width=".8"/><rect x="6.7" y="11.7" width="2.6" height="2.6" fill="#fff" stroke="#e3211b" stroke-width="1.1"/></svg>
<svg style="left:951px;top:80px" width="16" height="16" viewBox="0 0 16 16"><circle cx="8" cy="8.5" r="6" fill="none" stroke="#2a3345" stroke-width="1.2"/><rect x="6.7" y="1.2" width="2.6" height="2.6" fill="#fff" stroke="#e3211b" stroke-width="1.1"/><rect x="6.7" y="13.2" width="2.6" height="2.6" fill="#fff" stroke="#e3211b" stroke-width="1.1"/><rect x="0.7" y="7.2" width="2.6" height="2.6" fill="#fff" stroke="#e3211b" stroke-width="1.1"/><rect x="12.7" y="7.2" width="2.6" height="2.6" fill="#fff" stroke="#e3211b" stroke-width="1.1"/></svg>
<svg style="left:974px;top:80px" width="16" height="16" viewBox="0 0 16 16"><rect x="2" y="3" width="9.5" height="7" fill="none" stroke="#2a3345" stroke-width="1.1"/><circle cx="11.5" cy="10" r="3.6" fill="none" stroke="#2a3345" stroke-width="1.1"/><rect x="0.7" y="8.7" width="2.6" height="2.6" fill="#fff" stroke="#e3211b" stroke-width="1.1"/></svg>
<svg style="left:997px;top:80px" width="16" height="16" viewBox="0 0 16 16"><rect x="6.7" y="6.7" width="2.6" height="2.6" fill="#fff" stroke="#e3211b" stroke-width="1.1"/></svg>
<svg style="left:1020px;top:80px" width="16" height="16" viewBox="0 0 16 16"><path d="M1.5 4L14.5 13M1.5 13L14.5 4" stroke="#2a3345" stroke-width="1.1"/><path d="M8 0.5V16" stroke="#fff" stroke-width="1"/><rect x="6.7" y="7.2" width="2.6" height="2.6" fill="#fff" stroke="#e3211b" stroke-width="1.1"/></svg>
<i class="sep" style="left:1043px;top:78px"></i>
<svg style="left:1051px;top:80px" width="16" height="16" viewBox="0 0 16 16"><path d="M1 8.5H15" stroke="#2a3345" stroke-width="1"/><rect x="1" y="7" width="2.6" height="2.6" fill="#fff" stroke="#2a3345" stroke-width=".8"/><rect x="12.5" y="7" width="2.6" height="2.6" fill="#fff" stroke="#2a3345" stroke-width=".8"/><path d="M3 3L13 13.5M13 3L3 13.5" stroke="#d52b0d" stroke-width="3"/></svg>
<svg style="left:1102px;top:80px" width="16" height="16" viewBox="0 0 16 16"><path d="M1.5 1V8M14.5 1V8M1.5 3.5H14.5" stroke="#e3211b" stroke-width="1.2" fill="none"/><path d="M2.5 2.6L1.5 3.5L2.5 4.4M13.5 2.6L14.5 3.5L13.5 4.4" stroke="#e3211b" fill="none" stroke-width=".8"/><rect x="1.5" y="11.5" width="13" height="3" fill="#fff" stroke="#2a3345" stroke-width="1.1"/></svg>
<i class="sep" style="left:1125px;top:78px"></i>
<svg style="left:1133px;top:80px" width="16" height="16" viewBox="0 0 16 16"><path d="M5.5 1L14.5 8M7.5 0.5L5 4M15.5 7L13 10.5M6 2.8L14 9" stroke="#e3211b" stroke-width="1.1" fill="none"/><path d="M1.5 9L3.5 7L11 13L9 15.5Z" fill="#fff" stroke="#2a3345" stroke-width="1.1"/></svg>
<svg style="left:1156px;top:80px" width="16" height="16" viewBox="0 0 16 16"><path d="M3 5.5Q8 0.5 13 5.5" fill="none" stroke="#e3211b" stroke-width="1.1"/><path d="M1.5 5L3 5.8L3.5 3.8M14.5 5L13 5.8L12.5 3.8" fill="none" stroke="#e3211b" stroke-width="1"/><path d="M8 3V7" stroke="#e3211b" stroke-width=".9"/><path d="M2 8.5L8 15L14 8.5H11L8 12L5 8.5Z" fill="#fff" stroke="#2a3345" stroke-width="1.1" stroke-linejoin="round"/></svg>
<svg style="left:1179px;top:80px" width="16" height="16" viewBox="0 0 16 16"><circle cx="8" cy="8.5" r="6.5" fill="#fff" stroke="#2a3345" stroke-width="1.2"/><path d="M8 3V14M6.5 4.8L8 3L9.5 4.8M6.5 12.2L8 14L9.5 12.2" fill="none" stroke="#e3211b" stroke-width="1.1"/></svg>
<svg style="left:1202px;top:80px" width="16" height="16" viewBox="0 0 16 16"><circle cx="8" cy="8.5" r="6.5" fill="#fff" stroke="#2a3345" stroke-width="1.2"/><path d="M13 6.5H9L5 11.5M5 9V11.5H7.5" fill="none" stroke="#e3211b" stroke-width="1.1"/></svg>
<i class="sep" style="left:1225px;top:78px"></i>
<svg style="left:1233px;top:80px" width="16" height="16" viewBox="0 0 16 16"><path d="M1.5 1V8M14.5 1V8M1.5 3.5H14.5" stroke="#e3211b" stroke-width="1.2" fill="none"/><path d="M1.5 6.5H8.5M8.5 5V8" stroke="#e3211b" stroke-width="1.1"/><path d="M1.5 15V11.5H8.5V9.5H14.5V15Z" fill="#fff" stroke="#2a3345" stroke-width="1.1"/></svg>
<svg style="left:1256px;top:80px" width="16" height="16" viewBox="0 0 16 16"><path d="M1.5 1V8M14.5 1V8M1.5 3.5H14.5M8 1V6" stroke="#e3211b" stroke-width="1.2" fill="none"/><path d="M1.5 15V11.5H8V9.5H14.5V15Z" fill="#fff" stroke="#2a3345" stroke-width="1.1"/></svg>
<i class="sep" style="left:1280px;top:78px"></i>
<svg style="left:1288px;top:80px" width="16" height="16" viewBox="0 0 16 16"><path d="M1.5 1V8M14.5 1V8M1.5 3.5H14.5" stroke="#e3211b" stroke-width="1.2" fill="none"/><path d="M1.5 14H14" stroke="#2a3345" stroke-width="1.6"/><path d="M8 4L10.5 2L15.5 12L13.5 14Z" fill="#f59a23"/><path d="M13.5 14L15.5 12L15.8 15.5Z" fill="#e8c9a0"/><path d="M8 4L10.5 2L9.5 1L7 3Z" fill="#e8747a"/></svg>
<i class="sep" style="left:1311px;top:78px"></i>
<svg style="left:1318px;top:80px" width="16" height="16" viewBox="0 0 16 16"><path d="M1.5 5V12M14.5 5V12M1.5 8H14.5" stroke="#e3211b" stroke-width="1.1" fill="none"/><path d="M1.5 14.5H14.5" stroke="#2a3345" stroke-width="1.4"/><path d="M4.5 12Q5.5 8.5 9 9.5Q9 12.5 4.5 12Z" fill="#1c4fa8"/><path d="M9 9.5L15 1.5" stroke="#d99a1c" stroke-width="1.6"/></svg>
<svg style="left:1341px;top:80px" width="16" height="16" viewBox="0 0 16 16"><path d="M1.5 5V12M14.5 5V12M1.5 8H14.5" stroke="#e3211b" stroke-width="1.1" fill="none"/><path d="M1.5 14.5H14.5" stroke="#2a3345" stroke-width="1.4"/><path d="M5.5 12Q6.5 8.5 10 9.5Q10 12.5 5.5 12Z" fill="#1c4fa8"/><path d="M10 9.5L15.5 2.5" stroke="#d99a1c" stroke-width="1.6"/><circle cx="5.5" cy="3.5" r="3.5" fill="#17a65a"/><path d="M5.5 1.5V5.5M3.5 3.5H7.5" stroke="#fff" stroke-width="1.2"/></svg>
<svg style="left:14px;top:108px" width="16" height="16" viewBox="0 0 16 16"><path d="M4.5 9.5H15L11 14.5H0.5Z" fill="#fff" stroke="#2a3345" stroke-width="1" stroke-linejoin="round"/><path d="M4.5 6H15L11 11H0.5Z" fill="#fff" stroke="#2a3345" stroke-width="1" stroke-linejoin="round"/><path d="M4.5 2.5H15L11 7.5H0.5Z" fill="#2b62b0" stroke="#2a3345" stroke-width="1" stroke-linejoin="round"/><rect x="5" y="5" width="2.5" height="2.2" fill="#e3211b"/></svg>
<svg style="left:37px;top:108px" width="16" height="16" viewBox="0 0 16 16"><path d="M4.5 6H15L11 11H0.5Z" fill="#fff" stroke="#2a3345" stroke-width="1" stroke-linejoin="round"/><path d="M4.5 2.5H15L11 7.5H0.5Z" fill="#fff" stroke="#2a3345" stroke-width="1" stroke-linejoin="round"/><circle cx="10" cy="11" r="3" fill="#eee" stroke="#666" stroke-width="1.4"/><path d="M12.3 13.3L15 16" stroke="#555" stroke-width="1.8"/></svg>
<i class="sep" style="left:60px;top:106px"></i>
<div class="abs" style="left:67px;top:105px;width:196px;height:22px;background:#fff"><svg style="left:0;top:3px" width="90" height="16" viewBox="0 0 90 16"><g transform="translate(2,0)"><path d="M8 1Q12.5 1 12.5 5.5Q12.5 8 10.5 10V12.5H5.5V10Q3.5 8 3.5 5.5Q3.5 1 8 1Z" fill="#f5ee8a" stroke="#8a8a5a" stroke-width=".9"/><path d="M6 4Q7 2.5 9 3" stroke="#fff" stroke-width="1.2" fill="none"/><rect x="6" y="12.5" width="4" height="2.5" fill="#8a8a8a"/></g><g transform="translate(19,0)"><path d="M8 0.5L9.5 4L13.3 2.7L12 6.5L15.5 8L12 9.5L13.3 13.3L9.5 12L8 15.5L6.5 12L2.7 13.3L4 9.5L0.5 8L4 6.5L2.7 2.7L6.5 4Z" fill="#fff200" stroke="#222" stroke-width=".9" stroke-linejoin="round"/><circle cx="8" cy="8" r="3.3" fill="#fff79a" stroke="#222" stroke-width=".9"/></g><g transform="translate(36,0)"><rect x="3.5" y="2.5" width="10" height="12" fill="none" stroke="#c9ccd2" stroke-width=".9"/><path d="M6 1.5V12.5M1 7H11M2.5 3.5L9.5 10.5M9.5 3.5L2.5 10.5" stroke="#b4b8c0" stroke-width=".9" stroke-dasharray="1 .8"/></g><g transform="translate(53,0)"><path d="M8.5 7V4Q8.5 1 11 1Q13.5 1 13.5 4V7" fill="none" stroke="#1a237e" stroke-width="1.3"/><rect x="2" y="7" width="9" height="8" fill="#e8c06a" stroke="#a17a22" stroke-width="1"/><rect x="3.5" y="8.5" width="4" height="5" fill="#f8e7b8"/></g><rect x="72.5" y="2.5" width="10" height="11" fill="#fff" stroke="#111" stroke-width="1.2"/></svg><span class="abs" style="left:90px;top:5px;font-size:12px;color:#111;white-space:pre;transform-origin:left center;transform:scaleX(.815)">RESZTA-3D</span><div class="abs" style="right:1px;top:1px;width:14px;height:20px;background:linear-gradient(#f2f3f6,#dfe2e8)"></div><svg style="right:4px;top:9px" width="7" height="4" viewBox="0 0 7 4"><path d="M0 0H7L3.5 4Z" fill="#111"/></svg></div>
<i class="sep" style="left:268px;top:106px"></i>
<div class="abs" style="left:275px;top:105px;width:146px;height:22px;background:#fff"><svg style="left:6px;top:4px" width="14" height="14" viewBox="0 0 14 14"><rect x="1.5" y="1.5" width="10" height="11" fill="#fff" stroke="#111" stroke-width="1.2"/></svg><span class="abs" style="left:23px;top:5px;font-size:12px;color:#111;white-space:pre;transform-origin:left center;transform:scaleX(.89)">BYLAYER</span><div class="abs" style="right:1px;top:1px;width:14px;height:20px;background:linear-gradient(#f2f3f6,#dfe2e8)"></div><svg style="right:4px;top:9px" width="7" height="4" viewBox="0 0 7 4"><path d="M0 0H7L3.5 4Z" fill="#111"/></svg></div>
<i class="sep" style="left:427px;top:106px"></i>
<div class="abs" style="left:433px;top:105px;width:196px;height:22px;background:#fff"><i class="abs" style="left:7px;top:11px;width:86px;height:1px;background:#111"></i><span class="abs" style="left:97px;top:5px;font-size:12px;color:#111;white-space:pre;transform-origin:left center;transform:scaleX(.89)">BYLAYER</span><div class="abs" style="right:1px;top:1px;width:14px;height:20px;background:linear-gradient(#f2f3f6,#dfe2e8)"></div><svg style="right:4px;top:9px" width="7" height="4" viewBox="0 0 7 4"><path d="M0 0H7L3.5 4Z" fill="#111"/></svg></div>
<i class="sep" style="left:635px;top:106px"></i>
<div class="abs" style="left:641px;top:105px;width:196px;height:22px;background:#fff"><i class="abs" style="left:7px;top:11px;width:88px;height:1px;background:#111"></i><span class="abs" style="left:99px;top:5px;font-size:12px;color:#111;white-space:pre;transform-origin:left center;transform:scaleX(.857)">0.00 mm</span><div class="abs" style="right:1px;top:1px;width:14px;height:20px;background:linear-gradient(#f2f3f6,#dfe2e8)"></div><svg style="right:4px;top:9px" width="7" height="4" viewBox="0 0 7 4"><path d="M0 0H7L3.5 4Z" fill="#111"/></svg></div>
<i class="sep" style="left:843px;top:106px"></i>
<div class="abs" style="left:849px;top:105px;width:95px;height:22px;background:#fff;border:1px solid #9a9ea8"><div class="abs" style="left:1px;top:1px;width:75px;height:18px;background:#d0d0d0"></div><span class="abs" style="left:3px;top:4px;font-size:12px;color:#111;white-space:pre;transform-origin:left center;color:#7a7a7a;transform:scaleX(.85)">BYCOLOR</span><div class="abs" style="right:0;top:0;width:16px;height:20px;background:linear-gradient(#f2f3f6,#dfe2e8)"></div><svg style="right:4px;top:8px" width="7" height="4" viewBox="0 0 7 4"><path d="M0 0H7L3.5 4Z" fill="#111"/></svg></div>
<div class="abs" style="left:0;top:130px;width:225px;height:848px;background:#a6a6a6"></div>
<div class="abs" style="left:221px;top:130px;width:4px;height:846px;background:linear-gradient(90deg,#8e8e8e,#6a6a6a)"></div>
<svg style="left:3px;top:133px" width="4" height="17" viewBox="0 0 4 17"><path d="M0.5 0V17M2.5 0V17" stroke="#333" stroke-width="1" stroke-dasharray="1 1"/></svg>
<div class="abs" style="left:12px;top:133px;font:bold 13.500px 'DejaVu Sans','Liberation Sans',sans-serif;color:#0a0a0a;letter-spacing:0">Właściwości</div>
<div class="abs" style="left:0;top:151px;width:221px;height:823px;background:#f0f0f0;border-radius:5px 5px 0 0"></div>
<div class="abs" style="left:17px;top:162px;width:64px;height:21px;background:#fff;border:1px solid #d0d0d0;border-radius:2px"><span class="abs" style="left:3px;top:3px;font-size:12px;white-space:pre;transform-origin:0 50%;transform:scaleX(.88)">Brak zazı</span><svg style="left:50px;top:7px" width="9" height="6" viewBox="0 0 9 6"><path d="M0.5 0.5L4.5 4.5L8.5 0.5" fill="none" stroke="#555" stroke-width="1"/></svg></div>
<div class="abs" style="left:86px;top:161px;width:23px;height:23px;background:#fbfbfb;border:1px solid #cfcfcf;border-radius:4px"><svg style="left:3px;top:3px" width="16" height="16" viewBox="0 0 16 16"><path d="M4.5 2V14M2.5 2H7M7 7H11M7 11H11" stroke="#111" stroke-width="1.4" fill="none"/><path d="M7 7H11.5M7 11H11.5" stroke="#111" stroke-width="1.8"/></svg></div>
<div class="abs" style="left:112px;top:161px;width:23px;height:23px;background:#fbfbfb;border:1px solid #cfcfcf;border-radius:4px"><svg style="left:3px;top:3px" width="16" height="16" viewBox="0 0 16 16"><rect x="1.5" y="4" width="9" height="7" fill="#e8ecf5" stroke="#333c55" stroke-width="1.1"/><rect x="5" y="7" width="9" height="7" fill="#f4f6fb" stroke="#333c55" stroke-width="1.1"/><circle cx="12" cy="3.8" r="3.2" fill="#1e9a4a"/><path d="M12 2V5.6M10.2 3.8H13.8" stroke="#fff" stroke-width="1.1"/><path d="M7 10.5L9 12.5L12.5 8.5" fill="none" stroke="#1e9a4a" stroke-width="1.6"/></svg></div>
<div class="abs" style="left:138px;top:161px;width:23px;height:23px;background:#fbfbfb;border:1px solid #cfcfcf;border-radius:4px"><svg style="left:3px;top:3px" width="16" height="16" viewBox="0 0 16 16"><circle cx="6" cy="8" r="5" fill="#d8dce6" stroke="#555" stroke-width="1" stroke-dasharray="1.5 1"/><rect x="8" y="1.5" width="5" height="7" fill="#5aa86a"/><path d="M9 6V14L11 12L12.5 15L13.8 14.3L12.3 11.5H14.5Z" fill="#d8dce6" stroke="#444" stroke-width=".8"/></svg></div>
<div class="abs" style="left:164px;top:161px;width:23px;height:23px;background:#fbfbfb;border:1px solid #cfcfcf;border-radius:4px"><svg style="left:3px;top:3px" width="16" height="16" viewBox="0 0 16 16"><path d="M1 2H12L8 7.5V14.5H5.5V7.5Z" fill="#1c5cb8"/><path d="M10.5 3V11L12 9.5L13 12L14 11.5L13 9H15Z" fill="#eee" stroke="#444" stroke-width=".7"/></svg></div>
<div class="abs" style="left:190px;top:161px;width:23px;height:23px;background:#fbfbfb;border:1px solid #cfcfcf;border-radius:4px"><svg style="left:3px;top:3px" width="16" height="16" viewBox="0 0 16 16"><path d="M3 3H14L10 8V14.5H7.5V8Z" fill="#fff" stroke="#1c5cb8" stroke-width="1.3" stroke-linejoin="round"/><path d="M7 0.5L1.5 5.5H5L3.5 9L9 3.5H5.5Z" fill="#f5a21c"/></svg></div>
<div class="abs" style="left:2px;top:191px;width:10px;height:782px;background:#dcdcdc"></div>
<div class="abs" style="left:2px;top:191px;width:10px;height:522px;background:#b2b2b2"></div>
<div class="abs" style="left:0;top:151px;width:221px;height:822px;overflow:hidden">
<div class="abs" style="left:16px;top:40px;width:199px;height:23px;background:linear-gradient(#c8c8c8,#b4b4b4 45%,#9c9c9c);border:1px solid #8a8a8a"><span class="abs" style="left:6px;top:4px;font:bold 12px 'Liberation Sans',sans-serif;color:#0a0a0a;white-space:pre">Ogólne</span><svg style="left:180px;top:7px" width="9" height="5" viewBox="0 0 9 5"><path d="M0 5H9L4.5 0Z" fill="#111"/></svg></div>
<div class="abs" style="left:32px;top:62px;width:183px;height:23px;border:1px solid #a0a0a0;background:#fff">
<div class="abs" style="left:0;top:0;width:90px;height:21px;background:#f0f0f0;border-right:1px solid #a0a0a0;overflow:hidden"><span style="position:absolute;left:4px;top:4px;font-size:11.5px;white-space:pre;display:inline-block;transform-origin:0 50%;transform:scaleX(.91);color:#111">Kolor</span></div>
<i class="abs" style="left:95px;top:2px;width:15px;height:15px;border:1px solid #111;background:#fff"></i><span style="position:absolute;left:110px;top:5px;font-size:11.5px;white-space:pre;display:inline-block;transform-origin:0 50%;transform:scaleX(.91);color:#111">BYLAYER</span>
</div>
<div class="abs" style="left:32px;top:84px;width:183px;height:23px;border:1px solid #a0a0a0;background:#fff">
<div class="abs" style="left:0;top:0;width:90px;height:21px;background:#f0f0f0;border-right:1px solid #a0a0a0;overflow:hidden"><span style="position:absolute;left:4px;top:4px;font-size:11.5px;white-space:pre;display:inline-block;transform-origin:0 50%;transform:scaleX(.91);color:#111">WARSTWA</span></div>
<span style="position:absolute;left:95px;top:4px;font-size:11.5px;white-space:pre;display:inline-block;transform-origin:0 50%;transform:scaleX(.91);color:#111">RESZTA-3D</span>
</div>
<div class="abs" style="left:32px;top:106px;width:183px;height:23px;border:1px solid #a0a0a0;background:#fff">
<div class="abs" style="left:0;top:0;width:90px;height:21px;background:#f0f0f0;border-right:1px solid #a0a0a0;overflow:hidden"><span style="position:absolute;left:4px;top:4px;font-size:11.5px;white-space:pre;display:inline-block;transform-origin:0 50%;transform:scaleX(.91);color:#111">Typ linii</span></div>
</div>
<div class="abs" style="left:32px;top:128px;width:183px;height:23px;border:1px solid #a0a0a0;background:#fff">
<div class="abs" style="left:0;top:0;width:90px;height:21px;background:#f0f0f0;border-right:1px solid #a0a0a0;overflow:hidden"><span style="position:absolute;left:4px;top:4px;font-size:11.5px;white-space:pre;display:inline-block;transform-origin:0 50%;transform:scaleX(.91);color:#111">Skala Typu Linii</span></div>
<span style="position:absolute;left:95px;top:4px;font-size:11.5px;white-space:pre;display:inline-block;transform-origin:0 50%;transform:scaleX(.91);color:#111">1</span>
</div>
<div class="abs" style="left:32px;top:150px;width:183px;height:23px;border:1px solid #a0a0a0;background:#fff">
<div class="abs" style="left:0;top:0;width:90px;height:21px;background:#f0f0f0;border-right:1px solid #a0a0a0;overflow:hidden"><span style="position:absolute;left:4px;top:4px;font-size:11.5px;white-space:pre;display:inline-block;transform-origin:0 50%;transform:scaleX(.91);color:#111">Grubość Linii</span></div>
<i class="abs" style="left:95px;top:10px;width:32px;height:1px;background:#111"></i><span style="position:absolute;left:131px;top:5px;font-size:11.5px;white-space:pre;display:inline-block;transform-origin:0 50%;transform:scaleX(.91);color:#111;transform:scaleX(.86)">0.00 mm</span>
</div>
<div class="abs" style="left:32px;top:172px;width:183px;height:23px;border:1px solid #a0a0a0;background:#fff">
<div class="abs" style="left:0;top:0;width:90px;height:21px;background:#f0f0f0;border-right:1px solid #a0a0a0;overflow:hidden"><span style="position:absolute;left:4px;top:4px;font-size:11.5px;white-space:pre;display:inline-block;transform-origin:0 50%;transform:scaleX(.91);color:#111">Grubość</span></div>
<span style="position:absolute;left:95px;top:4px;font-size:11.5px;white-space:pre;display:inline-block;transform-origin:0 50%;transform:scaleX(.91);color:#111">0</span>
</div>
<div class="abs" style="left:32px;top:194px;width:183px;height:23px;border:1px solid #a0a0a0;background:#fff">
<div class="abs" style="left:0;top:0;width:90px;height:21px;background:#f0f0f0;border-right:1px solid #a0a0a0;overflow:hidden"><span style="position:absolute;left:4px;top:4px;font-size:11.5px;white-space:pre;display:inline-block;transform-origin:0 50%;transform:scaleX(.91);color:#111">Przezroczystość</span></div>
<span style="position:absolute;left:95px;top:4px;font-size:11.5px;white-space:pre;display:inline-block;transform-origin:0 50%;transform:scaleX(.91);color:#111">JakWarstwa</span>
</div>
<div class="abs" style="left:16px;top:220px;width:199px;height:23px;background:linear-gradient(#c8c8c8,#b4b4b4 45%,#9c9c9c);border:1px solid #8a8a8a"><span class="abs" style="left:6px;top:4px;font:bold 12px 'Liberation Sans',sans-serif;color:#0a0a0a;white-space:pre">Wizualizacja 3D</span><svg style="left:180px;top:7px" width="9" height="5" viewBox="0 0 9 5"><path d="M0 5H9L4.5 0Z" fill="#111"/></svg></div>
<div class="abs" style="left:32px;top:242px;width:183px;height:23px;border:1px solid #a0a0a0;background:#fff">
<div class="abs" style="left:0;top:0;width:90px;height:21px;background:#f0f0f0;border-right:1px solid #a0a0a0;overflow:hidden"><span style="position:absolute;left:4px;top:4px;font-size:11.5px;white-space:pre;display:inline-block;transform-origin:0 50%;transform:scaleX(.91);color:#111">Materiał</span></div>
<span style="position:absolute;left:95px;top:4px;font-size:11.5px;white-space:pre;display:inline-block;transform-origin:0 50%;transform:scaleX(.91);color:#111">ByLayer</span>
</div>
<div class="abs" style="left:32px;top:264px;width:183px;height:23px;border:1px solid #a0a0a0;background:#fff">
<div class="abs" style="left:0;top:0;width:90px;height:21px;background:#f0f0f0;border-right:1px solid #a0a0a0;overflow:hidden"><span style="position:absolute;left:4px;top:4px;font-size:11.5px;white-space:pre;display:inline-block;transform-origin:0 50%;transform:scaleX(.91);color:#111">Wyświetlanie ci...</span></div>
<span style="position:absolute;left:95px;top:4px;font-size:11.5px;white-space:pre;display:inline-block;transform-origin:0 50%;transform:scaleX(.91);color:#111">Cienie rzucane i...</span>
</div>
<div class="abs" style="left:16px;top:290px;width:199px;height:23px;background:linear-gradient(#c8c8c8,#b4b4b4 45%,#9c9c9c);border:1px solid #8a8a8a"><span class="abs" style="left:6px;top:4px;font:bold 12px 'Liberation Sans',sans-serif;color:#0a0a0a;white-space:pre">Styl drukowania</span><svg style="left:180px;top:7px" width="9" height="5" viewBox="0 0 9 5"><path d="M0 5H9L4.5 0Z" fill="#111"/></svg></div>
<div class="abs" style="left:32px;top:312px;width:183px;height:23px;border:1px solid #a0a0a0;background:#fff">
<div class="abs" style="left:0;top:0;width:90px;height:21px;background:#f0f0f0;border-right:1px solid #a0a0a0;overflow:hidden"><span style="position:absolute;left:4px;top:4px;font-size:11.5px;white-space:pre;display:inline-block;transform-origin:0 50%;transform:scaleX(.91);color:#111">Print style</span></div>
<span style="position:absolute;left:95px;top:4px;font-size:11.5px;white-space:pre;display:inline-block;transform-origin:0 50%;transform:scaleX(.91);color:#111">ByColor</span>
</div>
<div class="abs" style="left:32px;top:334px;width:183px;height:23px;border:1px solid #a0a0a0;background:#fff">
<div class="abs" style="left:0;top:0;width:90px;height:21px;background:#f0f0f0;border-right:1px solid #a0a0a0;overflow:hidden"><span style="position:absolute;left:4px;top:4px;font-size:11.5px;white-space:pre;display:inline-block;transform-origin:0 50%;transform:scaleX(.91);color:#111">Tabela styli druku</span></div>
<span style="position:absolute;left:95px;top:4px;font-size:11.5px;white-space:pre;display:inline-block;transform-origin:0 50%;transform:scaleX(.91);color:#111">Brak</span>
</div>
<div class="abs" style="left:32px;top:356px;width:183px;height:23px;border:1px solid #a0a0a0;background:#fff">
<div class="abs" style="left:0;top:0;width:90px;height:21px;background:#f0f0f0;border-right:1px solid #a0a0a0;overflow:hidden"><span style="position:absolute;left:4px;top:4px;font-size:11.5px;white-space:pre;display:inline-block;transform-origin:0 50%;transform:scaleX(.91);color:#111">Drukuj tabelę z...</span></div>
<span style="position:absolute;left:95px;top:4px;font-size:11.5px;white-space:pre;display:inline-block;transform-origin:0 50%;transform:scaleX(.91);color:#111">Model</span>
</div>
<div class="abs" style="left:32px;top:378px;width:183px;height:23px;border:1px solid #a0a0a0;background:#fff">
<div class="abs" style="left:0;top:0;width:90px;height:21px;background:#f0f0f0;border-right:1px solid #a0a0a0;overflow:hidden"><span style="position:absolute;left:4px;top:4px;font-size:11.5px;white-space:pre;display:inline-block;transform-origin:0 50%;transform:scaleX(.91);color:#111">Typ wydruku ta...</span></div>
<span style="position:absolute;left:95px;top:4px;font-size:11.5px;white-space:pre;display:inline-block;transform-origin:0 50%;transform:scaleX(.91);color:#111">Styl druku zależ...</span>
</div>
<div class="abs" style="left:16px;top:404px;width:199px;height:23px;background:linear-gradient(#c8c8c8,#b4b4b4 45%,#9c9c9c);border:1px solid #8a8a8a"><span class="abs" style="left:6px;top:4px;font:bold 12px 'Liberation Sans',sans-serif;color:#0a0a0a;white-space:pre">Widok</span><svg style="left:180px;top:7px" width="9" height="5" viewBox="0 0 9 5"><path d="M0 5H9L4.5 0Z" fill="#111"/></svg></div>
<div class="abs" style="left:32px;top:426px;width:183px;height:23px;border:1px solid #a0a0a0;background:#fff">
<div class="abs" style="left:0;top:0;width:90px;height:21px;background:#f0f0f0;border-right:1px solid #a0a0a0;overflow:hidden"><span style="position:absolute;left:4px;top:4px;font-size:11.5px;white-space:pre;display:inline-block;transform-origin:0 50%;transform:scaleX(.91);color:#111">Środek X</span></div>
<span style="position:absolute;left:95px;top:4px;font-size:11.5px;white-space:pre;display:inline-block;transform-origin:0 50%;transform:scaleX(.91);color:#111">795</span>
</div>
<div class="abs" style="left:32px;top:448px;width:183px;height:23px;border:1px solid #a0a0a0;background:#fff">
<div class="abs" style="left:0;top:0;width:90px;height:21px;background:#f0f0f0;border-right:1px solid #a0a0a0;overflow:hidden"><span style="position:absolute;left:4px;top:4px;font-size:11.5px;white-space:pre;display:inline-block;transform-origin:0 50%;transform:scaleX(.91);color:#111">Środek Y</span></div>
<span style="position:absolute;left:95px;top:4px;font-size:11.5px;white-space:pre;display:inline-block;transform-origin:0 50%;transform:scaleX(.91);color:#111">-6387</span>
</div>
<div class="abs" style="left:32px;top:470px;width:183px;height:23px;border:1px solid #a0a0a0;background:#fff">
<div class="abs" style="left:0;top:0;width:90px;height:21px;background:#f0f0f0;border-right:1px solid #a0a0a0;overflow:hidden"><span style="position:absolute;left:4px;top:4px;font-size:11.5px;white-space:pre;display:inline-block;transform-origin:0 50%;transform:scaleX(.91);color:#111">Środek Z</span></div>
<span style="position:absolute;left:95px;top:4px;font-size:11.5px;white-space:pre;display:inline-block;transform-origin:0 50%;transform:scaleX(.91);color:#111">0</span>
</div>
<div class="abs" style="left:32px;top:492px;width:183px;height:23px;border:1px solid #a0a0a0;background:#fff">
<div class="abs" style="left:0;top:0;width:90px;height:21px;background:#f0f0f0;border-right:1px solid #a0a0a0;overflow:hidden"><span style="position:absolute;left:4px;top:4px;font-size:11.5px;white-space:pre;display:inline-block;transform-origin:0 50%;transform:scaleX(.91);color:#111">Szerokość</span></div>
<span style="position:absolute;left:95px;top:4px;font-size:11.5px;white-space:pre;display:inline-block;transform-origin:0 50%;transform:scaleX(.91);color:#111">12190</span>
</div>
<div class="abs" style="left:32px;top:514px;width:183px;height:23px;border:1px solid #a0a0a0;background:#fff">
<div class="abs" style="left:0;top:0;width:90px;height:21px;background:#f0f0f0;border-right:1px solid #a0a0a0;overflow:hidden"><span style="position:absolute;left:4px;top:4px;font-size:11.5px;white-space:pre;display:inline-block;transform-origin:0 50%;transform:scaleX(.91);color:#111">Wysokość</span></div>
<span style="position:absolute;left:95px;top:4px;font-size:11.5px;white-space:pre;display:inline-block;transform-origin:0 50%;transform:scaleX(.91);color:#111">5955</span>
</div>
<div class="abs" style="left:16px;top:540px;width:199px;height:23px;background:linear-gradient(#c8c8c8,#b4b4b4 45%,#9c9c9c);border:1px solid #8a8a8a"><span class="abs" style="left:6px;top:4px;font:bold 12px 'Liberation Sans',sans-serif;color:#0a0a0a;white-space:pre">Styl Wizualny</span><svg style="left:180px;top:7px" width="9" height="5" viewBox="0 0 9 5"><path d="M0 5H9L4.5 0Z" fill="#111"/></svg></div>
<div class="abs" style="left:32px;top:562px;width:183px;height:23px;border:1px solid #a0a0a0;background:#fff">
<div class="abs" style="left:0;top:0;width:90px;height:21px;background:#f0f0f0;border-right:1px solid #a0a0a0;overflow:hidden"><span style="position:absolute;left:4px;top:4px;font-size:11.5px;white-space:pre;display:inline-block;transform-origin:0 50%;transform:scaleX(.91);color:#111">Styl Wizualny</span></div>
<span style="position:absolute;left:95px;top:4px;font-size:11.5px;white-space:pre;display:inline-block;transform-origin:0 50%;transform:scaleX(.91);color:#111">Szkieletowy 2D</span>
</div>
<div class="abs" style="left:32px;top:584px;width:183px;height:23px;border:1px solid #a0a0a0;background:#fff">
<div class="abs" style="left:0;top:0;width:90px;height:21px;background:#f0f0f0;border-right:1px solid #a0a0a0;overflow:hidden"><span style="position:absolute;left:4px;top:4px;font-size:11.5px;white-space:pre;display:inline-block;transform-origin:0 50%;transform:scaleX(.91);color:#111">Tło</span></div>
<span style="position:absolute;left:95px;top:4px;font-size:11.5px;white-space:pre;display:inline-block;transform-origin:0 50%;transform:scaleX(.91);color:#111">Wł</span>
</div>
<div class="abs" style="left:32px;top:606px;width:183px;height:23px;border:1px solid #a0a0a0;background:#fff">
<div class="abs" style="left:0;top:0;width:90px;height:21px;background:#f0f0f0;border-right:1px solid #a0a0a0;overflow:hidden"><span style="position:absolute;left:4px;top:4px;font-size:11.5px;white-space:pre;display:inline-block;transform-origin:0 50%;transform:scaleX(.91);color:#111">Tryb metriału</span></div>
<span style="position:absolute;left:95px;top:4px;font-size:11.5px;white-space:pre;display:inline-block;transform-origin:0 50%;transform:scaleX(.91);color:#111">Brak</span>
</div>
<div class="abs" style="left:32px;top:628px;width:183px;height:23px;border:1px solid #a0a0a0;background:#fff">
<div class="abs" style="left:0;top:0;width:90px;height:21px;background:#f0f0f0;border-right:1px solid #a0a0a0;overflow:hidden"><span style="position:absolute;left:4px;top:4px;font-size:11.5px;white-space:pre;display:inline-block;transform-origin:0 50%;transform:scaleX(.91);color:#111">Luka Halo</span></div>
<span style="position:absolute;left:95px;top:4px;font-size:11.5px;white-space:pre;display:inline-block;transform-origin:0 50%;transform:scaleX(.91);color:#111">0</span>
</div>
<div class="abs" style="left:32px;top:650px;width:183px;height:23px;border:1px solid #a0a0a0;background:#fff">
<div class="abs" style="left:0;top:0;width:90px;height:21px;background:#f0f0f0;border-right:1px solid #a0a0a0;overflow:hidden"><span style="position:absolute;left:4px;top:4px;font-size:11.5px;white-space:pre;display:inline-block;transform-origin:0 50%;transform:scaleX(.91);color:#111">Krycie</span></div>
<span style="position:absolute;left:95px;top:4px;font-size:11.5px;white-space:pre;display:inline-block;transform-origin:0 50%;transform:scaleX(.91);color:#111">-60</span>
</div>
<div class="abs" style="left:32px;top:672px;width:183px;height:23px;border:1px solid #a0a0a0;background:#fff">
<div class="abs" style="left:0;top:0;width:90px;height:21px;background:#f0f0f0;border-right:1px solid #a0a0a0;overflow:hidden"><span style="position:absolute;left:4px;top:4px;font-size:11.5px;white-space:pre;display:inline-block;transform-origin:0 50%;transform:scaleX(.91);color:#111">Styl płaszczyzny</span></div>
<span style="position:absolute;left:95px;top:4px;font-size:11.5px;white-space:pre;display:inline-block;transform-origin:0 50%;transform:scaleX(.91);color:#111">Brak</span>
</div>
<div class="abs" style="left:32px;top:694px;width:183px;height:23px;border:1px solid #a0a0a0;background:#fff">
<div class="abs" style="left:0;top:0;width:90px;height:21px;background:#f0f0f0;border-right:1px solid #a0a0a0;overflow:hidden"><span style="position:absolute;left:4px;top:4px;font-size:11.5px;white-space:pre;display:inline-block;transform-origin:0 50%;transform:scaleX(.91);color:#111">Podświetlenie p...</span></div>
<span style="position:absolute;left:95px;top:4px;font-size:11.5px;white-space:pre;display:inline-block;transform-origin:0 50%;transform:scaleX(.91);color:#111">-30</span>
</div>
<div class="abs" style="left:32px;top:716px;width:183px;height:23px;border:1px solid #a0a0a0;background:#fff">
<div class="abs" style="left:0;top:0;width:90px;height:21px;background:#f0f0f0;border-right:1px solid #a0a0a0;overflow:hidden"><span style="position:absolute;left:4px;top:4px;font-size:11.5px;white-space:pre;display:inline-block;transform-origin:0 50%;transform:scaleX(.91);color:#111">Krawędzie</span></div>
<span style="position:absolute;left:95px;top:4px;font-size:11.5px;white-space:pre;display:inline-block;transform-origin:0 50%;transform:scaleX(.91);color:#111">Izolinie</span>
</div>
<div class="abs" style="left:32px;top:738px;width:183px;height:23px;border:1px solid #a0a0a0;background:#fff">
<div class="abs" style="left:0;top:0;width:90px;height:21px;background:#f0f0f0;border-right:1px solid #a0a0a0;overflow:hidden"><span style="position:absolute;left:4px;top:4px;font-size:11.5px;white-space:pre;display:inline-block;transform-origin:0 50%;transform:scaleX(.91);color:#111">Krawędzie drgaj...</span></div>
<span style="position:absolute;left:95px;top:4px;font-size:11.5px;white-space:pre;display:inline-block;transform-origin:0 50%;transform:scaleX(.91);color:#111">-2</span>
</div>
<div class="abs" style="left:32px;top:760px;width:183px;height:23px;border:1px solid #a0a0a0;background:#fff">
<div class="abs" style="left:0;top:0;width:90px;height:21px;background:#f0f0f0;border-right:1px solid #a0a0a0;overflow:hidden"><span style="position:absolute;left:4px;top:4px;font-size:11.5px;white-space:pre;display:inline-block;transform-origin:0 50%;transform:scaleX(.91);color:#111">Wygładzanie kr...</span></div>
<span style="position:absolute;left:95px;top:4px;font-size:11.5px;white-space:pre;display:inline-block;transform-origin:0 50%;transform:scaleX(.91);color:#111">1</span>
</div>
<div class="abs" style="left:32px;top:782px;width:183px;height:23px;border:1px solid #a0a0a0;background:#fff">
<div class="abs" style="left:0;top:0;width:90px;height:21px;background:#f0f0f0;border-right:1px solid #a0a0a0;overflow:hidden"><span style="position:absolute;left:4px;top:4px;font-size:11.5px;white-space:pre;display:inline-block;transform-origin:0 50%;transform:scaleX(.91);color:#111">Krawędzie Silho...</span></div>
<span style="position:absolute;left:95px;top:4px;font-size:11.5px;white-space:pre;display:inline-block;transform-origin:0 50%;transform:scaleX(.91);color:#111">Wył</span>
</div>
<div class="abs" style="left:32px;top:804px;width:183px;height:23px;border:1px solid #a0a0a0;background:#fff">
<div class="abs" style="left:0;top:0;width:90px;height:21px;background:#f0f0f0;border-right:1px solid #a0a0a0;overflow:hidden"><span style="position:absolute;left:4px;top:4px;font-size:11.5px;white-space:pre;display:inline-block;transform-origin:0 50%;transform:scaleX(.91);color:#111">Szerokość kra...</span></div>
<span style="position:absolute;left:95px;top:4px;font-size:11.5px;white-space:pre;display:inline-block;transform-origin:0 50%;transform:scaleX(.91);color:#111">5</span>
</div>
</div>
<svg style="left:0;top:0" width="1919" height="1032" viewBox="0 0 1919 1032"><defs><clipPath id="cv"><rect x="225" y="130" width="1694" height="827"/></clipPath></defs>
<rect x="225" y="130" width="1694" height="827" fill="#000"/>
<g clip-path="url(#cv)" fill="none">
<g shape-rendering="crispEdges">
<path d="M266.5 130V629" stroke="#2c2c2c" stroke-width="1"/>
<path d="M336.5 130V629" stroke="#1a1a1a" stroke-width="1"/>
<path d="M406.5 130V629" stroke="#1a1a1a" stroke-width="1"/>
<path d="M475.5 130V629" stroke="#1a1a1a" stroke-width="1"/>
<path d="M544.5 130V629" stroke="#2c2c2c" stroke-width="1"/>
<path d="M614.5 130V629" stroke="#1a1a1a" stroke-width="1"/>
<path d="M684.5 130V629" stroke="#1a1a1a" stroke-width="1"/>
<path d="M753.5 130V629" stroke="#1a1a1a" stroke-width="1"/>
<path d="M822.5 130V629" stroke="#2c2c2c" stroke-width="1"/>
<path d="M892.5 130V629" stroke="#1a1a1a" stroke-width="1"/>
<path d="M962.5 130V629" stroke="#1a1a1a" stroke-width="1"/>
<path d="M1031.5 130V629" stroke="#1a1a1a" stroke-width="1"/>
<path d="M1100.5 130V629" stroke="#2c2c2c" stroke-width="1"/>
<path d="M1170.5 130V629" stroke="#1a1a1a" stroke-width="1"/>
<path d="M1240.5 130V629" stroke="#1a1a1a" stroke-width="1"/>
<path d="M1309.5 130V629" stroke="#1a1a1a" stroke-width="1"/>
<path d="M1378.5 130V629" stroke="#2c2c2c" stroke-width="1"/>
<path d="M1448.5 130V629" stroke="#1a1a1a" stroke-width="1"/>
<path d="M1518.5 130V629" stroke="#1a1a1a" stroke-width="1"/>
<path d="M1587.5 130V629" stroke="#1a1a1a" stroke-width="1"/>
<path d="M1656.5 130V629" stroke="#2c2c2c" stroke-width="1"/>
<path d="M1726.5 130V629" stroke="#1a1a1a" stroke-width="1"/>
<path d="M1796.5 130V629" stroke="#1a1a1a" stroke-width="1"/>
<path d="M1865.5 130V629" stroke="#1a1a1a" stroke-width="1"/>
<path d="M1934.5 130V629" stroke="#2c2c2c" stroke-width="1"/>
<path d="M266 142.5H1919" stroke="#1a1a1a" stroke-width="1"/>
<path d="M266 212.5H1919" stroke="#1a1a1a" stroke-width="1"/>
<path d="M266 282.5H1919" stroke="#1a1a1a" stroke-width="1"/>
<path d="M266 351.5H1919" stroke="#2c2c2c" stroke-width="1"/>
<path d="M266 420.5H1919" stroke="#1a1a1a" stroke-width="1"/>
<path d="M266 490.5H1919" stroke="#1a1a1a" stroke-width="1"/>
<path d="M266 560.5H1919" stroke="#1a1a1a" stroke-width="1"/>
<path d="M266 629.5H1919" stroke="#2c2c2c" stroke-width="1"/>
</g>
<g shape-rendering="crispEdges">
<rect x="415" y="125" width="6" height="782" fill="#00c896" stroke="none" stroke-width="0"/>
<rect x="415" y="901" width="113" height="6" fill="#00c896" stroke="none" stroke-width="0"/>
<path d="M414.5 130V960" stroke="#86f21a" stroke-width="1"/>
<path d="M527.5 130V477" stroke="#ffffff" stroke-width="1"/>
<path d="M527.5 615V907" stroke="#ffffff" stroke-width="1"/>
<path d="M555.5 130V907" stroke="#ffffff" stroke-width="1"/>
<path d="M529.5 130V476" stroke="#86f21a" stroke-width="1"/>
<path d="M531.5 130V476" stroke="#86f21a" stroke-width="1"/>
<path d="M533.5 130V476" stroke="#86f21a" stroke-width="1"/>
<path d="M536.5 130V476" stroke="#86f21a" stroke-width="1"/>
<path d="M538.5 130V476" stroke="#86f21a" stroke-width="1"/>
<path d="M541.5 130V476" stroke="#86f21a" stroke-width="1"/>
<path d="M544.5 130V476" stroke="#86f21a" stroke-width="1"/>
<path d="M546.5 130V476" stroke="#86f21a" stroke-width="1"/>
<path d="M549.5 130V470" stroke="#86f21a" stroke-width="1"/>
<path d="M528 255.5H541" stroke="#86f21a" stroke-width="1"/>
<path d="M528 258.5H541" stroke="#86f21a" stroke-width="1"/>
<path d="M528 261.5H541" stroke="#86f21a" stroke-width="1"/>
<path d="M528 264.5H541" stroke="#86f21a" stroke-width="1"/>
<path d="M541 259.5H550" stroke="#86f21a" stroke-width="1"/>
<path d="M541 262.5H550" stroke="#86f21a" stroke-width="1"/>
<path d="M541 265.5H550" stroke="#86f21a" stroke-width="1"/>
<path d="M540.5 255V272" stroke="#86f21a" stroke-width="1"/>
<path d="M528 461.5H541" stroke="#86f21a" stroke-width="1"/>
<path d="M528 464.5H541" stroke="#86f21a" stroke-width="1"/>
<path d="M528 467.5H541" stroke="#86f21a" stroke-width="1"/>
<path d="M528 470.5H541" stroke="#86f21a" stroke-width="1"/>
<path d="M528 473.5H541" stroke="#86f21a" stroke-width="1"/>
<path d="M527 476.5H556" stroke="#ffffff" stroke-width="1"/>
<rect x="529.5" y="460.5" width="9" height="15" fill="none" stroke="#86f21a" stroke-width="1"/>
<path d="M528.5 478V615" stroke="#d08a50" stroke-width="1"/>
<path d="M527.5 615.5H562.5V618" fill="none" stroke="#86f21a" stroke-width="1" />
<path d="M527 618.5H556" stroke="#ffffff" stroke-width="1"/>
<path d="M529.5 619V890" stroke="#86f21a" stroke-width="1"/>
<path d="M531.5 619V890" stroke="#86f21a" stroke-width="1"/>
<path d="M534.5 619V890" stroke="#86f21a" stroke-width="1"/>
<path d="M536.5 619V890" stroke="#86f21a" stroke-width="1"/>
<path d="M538.5 619V890" stroke="#86f21a" stroke-width="1"/>
<path d="M541.5 625V907" stroke="#86f21a" stroke-width="1"/>
<path d="M562.5 615V700" stroke="#86f21a" stroke-width="1"/>
<path d="M530 625H540M530 628H540M530 631H540M541 629H548V626" fill="none" stroke="#86f21a" stroke-width="1" />
</g><g shape-rendering="crispEdges">
<path d="M563 155.5H663" stroke="#ff0000" stroke-width="1"/>
<path d="M612.5 130V205" stroke="#00e000" stroke-width="1"/>
<rect x="602.5" y="145.5" width="20" height="20" fill="none" stroke="#00e000" stroke-width="1"/>
</g>
<path d="M574.8 335.5L575.1 330.4L570.9 332.5L572.4 327.5L566.3 329.9L572.2 323.1L562.9 325.9L570.9 320.2L561.5 320.8L569.9 317L562.4 315.6L567.9 313.6L559.3 310L570.2 310.4L563.7 305.8L569.1 306L563.3 299.3L571.7 303L569 297L573.3 298.6L574 295.5L577.3 297.1L578.1 292.5L582.1 299.6L583.2 292.4L585.5 298.5L588.6 289.1L588.9 299.7L593.7 291.6L593.2 298.6L597.9 294.9L596.2 301.1L600.9 299.2L596.8 305.5L604.5 302.6L601.6 306.8L607.8 306.7L601.1 311L609.8 311.7L602.3 314.6L608.5 317L603.8 318.7L609.4 322.6L599.8 321.4L606.7 327.3L599.3 325.4L604.6 332.7L597.5 329L598.7 334.2L594.9 332.6L593.9 335.9L590 331.4L589.8 340.4L586.2 330.6L584.3 339.5L582.9 329.9L578.8 339.6L578.4 332.8Z" fill="#00c896" fill-opacity=".93" stroke="#00c896" stroke-width=".8"/>
<path d="M566 305.6l-1.1 2.7M570.6 305.3l-3.1 0.9M599.9 309.6l-0.8 -1.4M579.5 297.5l3.1 -0.1M581.9 329l-0.8 -1.3M575.4 317.4l1.2 1.1M586 306.2l0 2.3M590.1 309.7l-2.5 0.8M600.2 301.3l1.4 -1.6M573 322l2.6 -2.3M590.9 323.2l0.2 2M567.6 316.7l-0.1 1.5M572.7 321.9l-3.1 -1.4M579 299.7l-2.1 -1.9M605.2 322.1l0.6 -3.2M589.3 301.2l-1.4 1M580.5 310l1.7 0.8M592.1 326.5l1.4 0.5M589.7 321.6l-1 1.2M597.6 302.3l1.2 1.6M577 326.4l2.3 2.2M600.7 314.3l-1.7 0.2M595.9 323.1l-0.3 3.1M587.7 319.3l2.4 -0.8M595.2 328.4l2.5 0.4M605.8 312.2l-0.7 -1.9M578.4 322.3l0.4 -2.5M587.4 301.9l0.5 3.1M605.8 313l1.1 -2.9M584.3 303.8l-2.2 -0.2M590.2 316l-0.4 2M577.2 294.3l-3.2 1.1M607 313.3l-1.3 1.5M586.5 325.5l0.8 2.6M601.8 302.8l-2.8 0.4M587.3 307.8l-1.8 -2.8M589 295.7l-1.8 0.3M588.3 302l1.1 -3.3M573.4 323.9l2.8 -1M589.2 322.7l1.9 2.7M588.2 306.3l1.6 -3.1M577.4 303.5l-1.7 -0.5M607.2 317l-1.5 -2.1M598.9 308.9l2.2 -2.3M587.9 326.5l-0.5 1.9M574.8 308.8l-1.5 0.9M596.6 307.6l-2.6 0.7M597.3 306.5l2.2 -1.2M568.8 311.7l2.4 0.3M586.7 318.7l0.6 -1.8M565.9 318.2l-2 -0.7M568.1 313l0.4 -1.7M574.1 310.7l-0.5 3M567.9 314.2l0.2 -3.3M568.3 321.2l-2.5 -0.1M579.6 300.5l-2.4 -0.5M602.7 308.2l2.4 -2.4M584 332.1l3 -1.1M590.6 321.6l-1.5 0.6M585.4 322.1l-1.5 -2.7M592.6 309.2l-0.6 -2.8M598.2 331.6l1.9 -0.4M598.9 310.7l-3.5 0.3M589.8 306.5l-2.3 1.1M579.4 324l-1.2 2.7M601.9 317.1l-1.4 0.6M576.2 330.7l-1.6 -0.1M605 313.1l1.7 -0.3M584.4 320.8l0.4 -2M595.3 325.9l2.7 -1.7M584.5 324.4l2.3 -1.3M582.6 307.7l2.7 1M578.7 318.2l2.6 -1M587.4 307.9l1 -1.3M595.1 303.2l-1.4 2.2M595.9 309.6l1.8 1.9M585.6 323.3l0.8 1.4M588.9 327.4l-1 2.8M581 330.7l1 2M596.7 316.3l3 0.3M575.1 311.7l-3.3 0.5M601.1 327.7l-2.3 1M592.3 302.5l-2.9 -0.1M598.5 313.5l1.4 -2.5M575.4 303.9l-0.9 1.3M589.8 320.1l-0.1 -2M588.9 321.4l1.8 -2.7M579.1 304.1l0.1 2.1M575.7 317.4l-1.9 0.7M606.6 309.7l-1.9 -0.6M597.7 312.2l-0.9 1.2M573.4 325.7l-1.9 -0M580.9 314.9l-0.1 1.7M580.2 318.5l2.1 0.3M586.9 332.4l-3 -0.5M574.4 298.9l1.7 -1.6M574.7 334.9l1.7 2.4M581.3 310.3l1.7 -2.8M571.4 301l0.7 -1.6M568.9 312.6l1.6 -2.7M593.1 299.5l2.2 -1.8M581 304.4l1.7 0.3M579.8 321.3l1.3 -2.2M572.5 302l-1 -2.2" stroke="#001a10" stroke-width=".8" fill="none" opacity=".6"/>
<path d="M555.8 321.6L567.5 318.9L561.7 306.5L572.6 317.2L577.3 306.7L578.4 316L591.2 313.7L583.8 322L588.3 329.3L578.4 328.2L577.6 341.1L571.5 330.3L564.6 332.7L569.3 323.8L554.1 321.5M589.3 320.1L584.3 320.7L583.8 327.6L579.9 320.3L574.5 325.2L577.3 318.4L568 317.4L576.6 315L571.9 307.2L579.7 314L582.4 304.5L584 311.5L588.7 311.9L584.6 316.3L589 320M599.1 303L595.1 308L601.9 316.9L590.2 312.5L588.3 324.9L585 311.4L578.2 314.8L580.8 308.6L573 304.7L583.3 304.3L579.8 294.5L586.4 300.3L593.1 290.7L591.9 302L604.5 301.3M581.2 333.3L582.2 327.1L577.6 323.1L585.9 321.8L584.2 315.5L589.3 320L593.6 313L594.6 319.4L601 320.2L594.8 324.7L600.6 330.7L594.9 331.9L591.9 339.3L587.6 331.3L578.9 335.7M584.9 309.4L588.1 314.4L593.1 313.1L589.4 318.9L595.2 321.1L589.7 322.3L591.4 328.5L586.9 326.8L582.9 329.3L582.8 323.4L575.5 323.8L582.6 319.7L578.3 315.2L583.9 316.5L584.9 309.2M562.8 329.5L573.5 323.7L563.2 314.3L576 320.2L576.9 306.9L582.2 314.5L594.5 309.1L585.7 322L598.4 327L584.4 328.2L586.7 337.9L579.3 332.7L572.8 339.7L572.1 330.6L556.6 331.6" fill="none" stroke="#00c896" stroke-width="0.9" />
<path d="M601.5 373.5L598.1 365.9L596.6 374.8L594.6 367.1L591.1 377.3L590.4 368.9L585.8 375.5L588.7 363L583.1 369.2L583.6 364.6L576.2 369.8L581.7 361L573.8 364.7L581.9 356.6L572 359.7L575.3 355.7L567.9 355.5L574.7 351.6L566.2 350.1L578 347.6L571 345L579 344.3L569.9 339.7L577.1 339.9L569.9 333.8L578.7 336.3L574.3 330.1L581.1 333.1L578.8 327.1L584.9 331.6L584.1 326.2L587.6 328.5L588.1 323.4L591.3 326.5L592.7 320.1L595.6 329.7L597.8 322.8L599 330.2L603.2 320.9L603.2 328.6L607 325.3L604.8 333.5L612.4 326L609.4 333.2L615.7 330L610.3 337.3L619.8 333.5L610.9 340.8L620.6 338.8L614.6 343L625.4 343L616.3 346.5L625.4 348.7L615.2 350.3L621.3 353.5L613.1 353.5L623.4 359.7L614.2 357.9L617.8 362.7L608.8 358.6L615.3 367.3L609.1 363.8L611.1 370.2L604.7 363.8L607.1 373.9L602.7 369Z" fill="#00c896" fill-opacity=".93" stroke="#00c896" stroke-width=".8"/>
<path d="M596.9 354.2l-1.2 2M591.1 337.2l0.9 -2.8M584 347.6l2.1 -0.4M601.4 336.6l0.5 3M589.2 371.5l-1.9 0.1M598.8 364.3l-1.7 -2.9M605.7 360.8l0.8 3.4M600.4 353.5l2.1 0.8M615 333.9l-0.4 -3.5M609.5 341.8l1.3 3.1M595.9 341.9l-1.2 -1.9M585.6 358.6l0.7 1.3M593.2 363l1.7 -0.5M607.7 345.3l-2 2.5M603.3 332.9l2.3 0.7M579.2 365.3l0.8 2.1M600.8 344.4l-2.6 1.7M596.7 341.5l1.6 0.4M607.6 341.6l-0.1 -3.3M588.8 359.5l2.6 -0.7M594.4 369.3l-0.8 1.9M617.9 348.5l2.4 -1.4M601.4 346l0.2 2.4M619.6 341.4l-1.5 1.3M579.8 355.6l1.7 -0.8M603 327.5l1.3 -2.7M584.4 338.8l-0.9 2M597.6 340l1 2.8M596.1 355.6l2.5 0.6M584.6 370.1l2.6 -2.3M595.2 356.3l2.1 1.4M591.7 331.5l0.2 2.3M580.9 333.8l-0 -3.2M591.1 339.8l1.1 -1.8M581.7 341.6l-0.1 -1.9M596.2 361l1.9 2.7M583 341l-2.8 2.1M583.4 347.4l1 -2.6M605 347.5l-3.1 0.5M608.9 327.8l2 0.5M604.5 355.9l2.6 -0.5M610.2 341.3l1.6 -1.8M594.6 370.2l1.6 -0.6M579.6 336.7l0.5 2.2M603.5 357.3l-0.1 2.7M589.1 338.3l2.1 0.2M591 337.7l-0.7 1.8M601.3 330l1.6 0.7M581.1 359.5l-1.1 -1.3M606.9 366l-1.7 1.1M587.3 370.9l-1 2.4M585.7 360.9l2.3 -2.6M588.3 356.9l-0.3 -1.9M619.9 348.9l-2.8 1.4M576.4 361.1l-1.8 0.4M614.8 349.8l-2.1 -2.6M612.9 358.6l-1.7 1.8M604.4 359l-3.3 -0.4M609.8 359.3l1.2 -3.2M599.2 357.2l3.2 -1.2M588.9 348.8l2 -1M612.4 336.7l0.8 -1.6M598.8 335.9l-2.6 1.8M601.4 338l0.5 2.3M580.2 346.2l1.4 1.4M592.3 324.5l2.5 0.7M596.3 341.6l0.9 -1.5M580.7 337l-1.5 -1.5M579 357.3l-2.5 1.3M580 353.6l2.7 0.4M583.3 348.8l0.3 -3M585.1 350.9l-1.7 0.3M607.6 360.1l2 1.3M589.5 347.6l-1.1 -1.3M593.7 325.9l-1.6 -0.1M580.2 347.6l1.7 -0.5M611.6 328.4l-0.4 -3.1M604.6 371.3l-3.4 0.2M605.4 342.5l0.8 -3.3M610 354.1l0.1 -1.8M606.9 339.7l0.7 -1.6M571.9 347.7l0.5 2M581.4 347.5l1.8 0.4M608.9 368.6l-1.4 -3M606.9 367.5l1.9 1.7M585.9 336.3l1.8 -1.9M575.3 336.6l2.8 2.1M585 336.3l0.6 -1.9M615.2 346.8l-1.9 2.3M585.5 352l-0.1 -1.6M601.6 336.1l-2.2 -2.7M578.3 337.4l-0.6 1.4M606.2 350.2l-1.8 -1.6M572.3 346.1l1.3 1.4M592.8 343.4l2.2 0M608.1 357.5l0.4 2.6M585.9 341.7l-1.7 -1.7M612.1 366.2l0.1 1.8M612.7 359.4l2.1 -2.2M585.1 355.7l2.8 0.2M581.9 342.2l-1.5 -1.9M615.9 339.7l0 3.3M613.8 353.1l-1.6 1.1M616.8 356l2.6 0.2M605.6 344.3l0.8 2.6M575.8 347.1l0.7 -1.7M590.8 361.2l3.1 1M600.4 327.1l3.2 0.1M595.5 330.6l-0.1 -2.4M597.4 357l0.2 1.6M584.8 366.8l-1.1 -3M592.8 334.9l-2.2 -0.8M600.4 330.1l-0.3 2.8M608 345.3l1.1 -1M595.2 360.7l-0.1 -3.4M595.6 333.2l1.6 -1.5M597.6 371.9l-2 -2.1M583.4 326.6l-3.1 0.6M588.5 326l-2.7 1.1M583 341.9l0.6 2.7M617.2 359.3l1 1.2M615 363l-1 1.5M602.5 349.2l-1 -2.6M588.9 327.5l2.5 1.1M581.1 365.2l1.4 -3M617.4 357.4l2.9 -1.7M605.4 355.5l1.2 1M609.1 329.4l-2.1 -2.4" stroke="#001a10" stroke-width=".8" fill="none" opacity=".6"/>
<path d="M611 350.7L601.2 345.8L600.1 354.8L598.3 345.2L590.9 350.2L593.6 344.2L587.9 340.6L593.3 338.2L592.2 329.6L599.1 337.9L604 331.3L603.7 338.7L610.7 339.2L605.7 343.6L608.4 348.9M612.7 351.1L605.7 344.7L595.8 360.2L601.5 340.9L586 343L596.3 335.9L588.9 325.8L601.1 329.9L604.4 319.6L609.4 327.8L618.4 325.9L614.9 334.8L621.6 340.3L611.5 342L616.3 357.6M590.4 369L593.6 359.1L586.3 355.5L593.8 352L591.1 343.2L599.3 348.2L604.9 337.6L606.1 348.9L615.4 348.3L608.6 355.3L619.5 364L607.4 363.1L605 371.8L599.9 360.8L588.1 372M586.1 359.9L595.1 353.9L588.7 347.7L596.4 348.8L598.3 342.8L601.6 349.2L610.6 342.7L603.3 352.9L612 355L604.5 356.6L606.7 363.5L600.8 358.3L595.5 369.9L596.4 358.3L585.1 360.3M592.5 321.7L590.8 339.4L607.3 336.1L591.2 345.3L604 355L588.9 349.5L590 369.5L582.8 355.4L570.3 362.4L578.8 347.9L562.9 343.8L577.4 340.4L570.7 323.8L584.3 336.1L592.5 321.6M609.7 326.2L604.5 337.7L614.5 344L601.4 346L602.9 356.1L594.6 348.3L587.4 358.3L586 348.6L574.6 347.2L587.8 340.2L578.4 330.6L589.6 333.6L592.3 320.4L597.3 332.2L608.9 326.9" fill="none" stroke="#00c896" stroke-width="0.9" />
<path d="M644.5 336.6L645.1 343.9L650.6 335.2L647.4 347.6L654.6 339.7L650.6 348.9L659.6 342.2L656.6 348.4L662.1 347.4L654.6 354.3L664.8 352L658.3 356.7L667.1 357.1L658.9 360.5L667.1 362.6L660.6 364.6L665.8 367.9L657.4 367.9L666.1 373.9L654.8 370.7L662.1 378.1L653.6 374.2L658.7 382.5L649.9 375.4L654.7 386.9L647.6 378.3L647.9 384.8L644 379.1L643.3 387.6L640.5 378L638.1 387.9L636.8 380.1L632.5 388.4L633.4 378.7L628.4 384.3L630.5 376.4L622.6 383.5L624.9 377.2L619.5 378.8L625.6 371.5L615.3 375L623.1 368.8L616.1 368.9L623.6 365L612.3 364.2L619.4 361.5L613.1 358.7L621.8 357.8L614.7 353.4L624.3 354.8L615.1 347.5L625.5 351.4L619.8 343.9L626.1 346.7L623.3 339.4L630.5 345.9L629.4 339L633.8 343.9L634.4 338.2L637.3 341.4L639.3 336.4L641.5 341.2Z" fill="#00c896" fill-opacity=".93" stroke="#00c896" stroke-width=".8"/>
<path d="M638.3 377.1l-0.1 2.4M641.7 365.9l-0.4 -2M640.4 375.8l-2.3 0.3M627.1 346.9l-2.2 2.6M644.3 356.4l1.6 -2.9M642.1 352.4l1.4 -2.4M644.8 362.5l2.7 -0.8M640 370.7l1.2 1.5M642.4 347.5l1.9 2.7M642.7 351.7l2.1 -1.7M643.9 342.4l2.4 -1.9M646 352.3l-0.9 -2.4M639.2 345.7l1.9 -1.8M638.9 374.2l1.6 1.9M655.7 368.1l1.5 2M622 362.2l1 -1.1M649.1 347.8l-2.6 -1.1M648.2 349.2l-3 1.7M657.4 370.9l-1 -1.2M624.4 349.2l2 -0.9M657.5 360l-3.3 0.3M660.2 366.4l-1.5 -1.5M649.7 350.5l-2.5 0.4M641.5 350.4l-2.2 0.9M619.1 354.6l-0.8 3M625.6 371.9l-0.3 2.5M659.5 358.9l0.6 -2.1M634.4 374.5l-2.4 -1.4M641.3 355.8l-0.6 -3.2M633.5 360.1l-0.5 1.4M648.6 383.7l-2.2 -1.8M645.6 339.5l-2.1 -1.8M625.8 347.4l-2.4 -1.6M644.7 381.4l-2.9 0.8M648.8 368.5l3 0.7M657 351.8l-2.1 2.3M644.2 344.1l-0.1 2.1M627.6 368.7l-2.5 1.2M646.3 359.2l-1.4 -0.6M656.1 376.9l-3 -1.5M635.3 363.6l-2 1.7M662.2 352.8l-2.3 0.4M655.7 373.7l0.4 1.8M644.4 362.4l-0.7 -1.6M648 360.3l1.2 -1.3M660.6 364.3l0.1 3M642.6 368.2l0.4 -2.9M652.8 345.6l2.4 1.4M635.8 345.8l1.8 -0.8M660.1 357.4l1.5 0.1M627.1 344.1l1.9 1M638.6 351.5l1.6 -1.9M654 367.5l-2.1 -1.1M635.6 353.1l0.7 -2.1M628.1 346.7l-2 1.1M645.3 339l0.6 -2.6M638.1 368.9l2.9 -0.5M646.7 349.3l-2.7 -2.1M649.3 345.4l-0.8 2.2M651.6 352.1l-1.1 -2.5M657.4 348.7l-0.3 1.5M638.7 378l-2.7 -1.6M644.9 357.8l1.6 -2.7M652.5 348.3l-0.5 3.2M647.1 343.1l1.9 -1.1M655.7 371.3l0.6 -1.8M640 338.6l0.3 2.7M632.6 346.9l0.5 1.9M640.2 340.3l-1.6 0.4M647.4 341.9l0.3 2.6M658.2 348.2l-2.4 -0.3M630.5 356.1l0.7 1.7M635.5 347.7l-2.1 -0.9M630 360.9l3.4 1M633.8 368.3l-2.1 -2.3M650.5 377.7l-1.4 2.1M646 362.8l3.2 -0.2M621.6 363.6l-0.2 3.1M618.9 372.6l0.3 -3.1M652.4 359.1l1.8 0.4M643.4 369.3l2.5 0.8M651.5 349.9l3.1 -1.1M657.4 369.4l-1.4 1M652.4 358.8l-2.6 -1.1M659.2 356.6l-1.9 1.5M652.8 382.1l1.9 -0.1M652.4 365.1l-2 2.6M658.4 349.4l2.9 0.9M635.1 343l1.6 -0.1M653 378.7l2.6 -1.1M634.3 380l0.1 -1.7M634.3 373.4l1.8 1.7M646.1 372.8l1.8 2.2M660.6 363.6l0.5 1.5M650.7 356.8l3 -1.3M647.5 355.7l-1.6 0.6M660.1 352.3l-1.7 -1.7M628.2 380.7l-2.7 0.4M647.5 371.4l2.7 1M630.6 358.7l1.4 -1.5M631.3 367.4l-0.4 3.2M634.6 371.2l-2.1 0.1M647.4 356.8l1.6 -0.2M655.8 349.8l0.6 2.4M637.1 374.5l0.7 2.1M664.2 360.6l1.5 -0.8M634.4 384.3l2.8 1M633.5 385.1l3.1 0.3M634.7 370.3l3.2 0M629.1 360.2l-3.1 1.3M643.7 380.2l1.2 1.4M642.6 341.6l0.5 1.6M656.3 372l-2 0.1M645.2 380.4l-0.8 -3M630 356.3l2.7 1.2M622.6 373.3l2.9 1.1M628.6 381.2l1.6 -1.9M663.1 364.2l-3.2 0.5M638.9 373l1.1 -1.9M647.8 375l-1.2 -0.8" stroke="#001a10" stroke-width=".8" fill="none" opacity=".6"/>
<path d="M653.6 373.1L644.2 370.3L639.2 375.7L636.5 367.3L625.2 370.8L635.3 361.4L621.5 354.6L635.4 355.8L634.6 345.1L641 355.1L650.7 343.4L644.3 358.1L653.8 358.8L646.6 362.6L649.8 369.5M643.8 368.5L635.1 370.1L637.7 379.2L630.5 371.3L625.2 380.7L627.9 369L617.5 371.3L625 366.4L620.7 361.1L627.7 363.3L628.4 353.2L632 361.2L639.7 357.2L635.4 365L645.1 368.6M659.2 346L657 355.4L668.2 357.3L655.6 360.9L661 369.4L653.4 366.4L648.9 376.8L645.5 367.8L635.6 368.8L646.7 359.7L633.1 353L645.3 353.7L645.9 345.1L651.6 352.4L659.2 345.9M642.8 362.1L638.4 366.3L639.5 377.2L630.1 369.1L622.6 378.4L624.1 365.3L612.8 365.8L623.3 359.5L617.1 352.3L624.9 353L627.7 343.2L631.3 355.1L640.7 349.3L637.5 357.7L644.1 362.3M660.3 347.8L649.4 353.6L657.9 362.7L645.7 356.4L644.4 366.9L641.4 358L632 362.9L639.2 353.9L626.3 349.6L635.6 346.9L635.1 337L643.3 345.5L650.9 335.1L649.1 347.8L661.1 347.6M641.7 370.9L637.8 362.6L632.2 365.3L633.7 359.6L627.2 356.8L633.9 354.4L632 347.3L637.9 350L643.3 342.4L641.4 354.8L654 351L643.6 357.5L650.7 363.5L642.8 362.3L641.2 368.4" fill="none" stroke="#00c896" stroke-width="0.9" />
<path d="M653.4 409.6L650.4 403.3L648 406.5L646.8 401.2L643 406.1L642.8 401.2L638 404.6L639.1 399.5L633.4 401.4L637.7 395.5L630.8 396.5L635.3 392.4L629.2 391.3L635.8 388.4L629 385.8L635.2 384.4L629.8 380.2L638.9 382L632.6 375.4L641.2 379.7L636.7 371.6L642.3 375.5L641.9 369.7L645.4 372.3L646.8 367.9L649.6 374.1L652.2 367L653.7 372.5L657.3 368.9L656.6 375.9L661.7 372L659.7 377.8L666.2 374.8L661.4 381L667.9 380L663.9 383.9L669.3 384.9L663.5 387.6L671 390.2L665.4 391.7L668.7 395.2L662.3 394.7L665.2 399L659.7 397.3L661.7 402.5L657.6 400.5L658.3 406.6L653.5 400Z" fill="#00c896" fill-opacity=".93" stroke="#00c896" stroke-width=".8"/>
<path d="M659.5 382.8l1.8 -2.6M658.5 385.8l-3 1.5M655 388.3l-2.3 -1M664.3 380.2l-3.4 -0.8M636.7 386.5l-0.9 -2.1M641 399.2l-2 2.7M644 375.9l1.8 1.3M638.7 396.1l-2.9 -1.5M662.7 385.1l-2.6 1M661.1 387.7l-3.1 -0.6M655.1 397.4l3.1 -0.4M643.2 387.5l2.3 -1.8M657.9 371.5l1.8 -1.5M655.7 396.5l-2.5 -0.2M653.2 395.7l-1.9 -2M638.9 402.6l-1 -1.2M636.1 396.7l-1 2.7M660.5 388.3l1.5 -2.2M645.8 380.5l-2.6 0M648.5 402.8l-3.4 -0.7M639.3 382.6l1.3 1.3M650.4 381.3l1.5 1.1M633.4 385.6l-2.4 -2M653.4 389.4l0.3 -2.1M647.6 377l1 1.8M664.2 398.3l-1.9 -1.1M638.9 391.6l3.1 1.1M634.3 379l-2.5 1M650 392.9l2.9 -1.4M643.1 404.1l0.8 -1.9M635.6 377.2l-3.4 0.1M650.5 399.7l-0.4 -1.9M643.7 404.1l-3.1 0.3M650.3 396.2l-1.2 1.5M660.1 386.2l-1.6 -0.7M638.6 385.5l-1.3 0.9M662 399.7l-1.2 1.6M653.7 397.5l0.1 1.6M644.3 378.5l1.6 2.4M658.3 393.5l0.9 -1.5M634.2 393.9l0.6 -1.7M640.5 400.6l-2.4 2.4M654.7 405.3l-2 -0.1M643.1 390.1l-0.5 -1.9M661.5 379.6l-1.3 1.5M643.1 382.4l1.2 -1.3M636.3 386.9l-0.4 3M638.7 398l-1.9 -0.9M645.3 391.9l1.4 2.9M643.5 401.6l2 1.7M641.5 398.1l-0.5 1.6M646.6 396.5l2.1 2.1M647.6 399.7l2.6 -1.7M662.7 376.5l1.4 1.5M665 390.8l-1.1 -1.9M637.2 395.9l-0.6 -1.9M656.4 378.8l-1.3 -1.3M663.2 399.7l-0.3 -2.9M654.6 389.2l1 1.6M646.2 399l2.1 0.5M644.6 381.7l1.4 -2.2M648 378.5l-2.6 1.1M648.2 390.6l1.5 -2.6M648.9 392.8l1.7 -2.2M659.1 390.8l2.4 2M654.4 405.1l-0 -1.7M646 376.9l-0 -3.2M648.8 394.1l2.2 -0.8M663.9 381.5l-0.2 -3.2" stroke="#001a10" stroke-width=".8" fill="none" opacity=".6"/>
<path d="M649.6 378.9L653 382.5L656.4 380.9L655.5 385.2L662.2 386.1L656.4 388.6L658.8 393.7L654.2 392.4L651.3 396.2L651.1 389.1L645.3 391.5L649.4 387.4L644.7 384.3L650.4 385L649.3 377.9M631 388.2L640.9 382.7L632.5 375.5L643 379.9L643.7 371.7L647.3 376.7L654.9 373.2L649 381.7L658 384.5L650 386.2L652.8 395.2L645.5 386.4L641.3 394.2L642.8 385.4L634.5 387M652.6 399L646.2 396L643.9 401.9L643.1 394L632.5 400.5L639.4 392.7L631.6 388.4L638.8 387L640.4 382.8L644.5 386.9L649.1 382.7L647.6 389.4L658.3 389.1L650.1 393.3L655.2 401.2M658.1 389.6L654.4 389.4L651 392.6L650.8 386.1L642.1 388.9L647.8 383.5L642.1 378.5L648.8 378.5L650.5 374L653.6 379.6L658.6 375.7L656.5 381.5L662.7 383.1L657.4 385.4L658.2 389.6" fill="none" stroke="#00c896" stroke-width="0.9" />
<path d="M563 394.8L569.3 395.3L565.4 389.8L571.5 391.6L568.4 384.9L576 390.6L574.2 383.5L580 390.5L579.3 382.4L582.8 387.3L584.4 382.5L586.7 386.4L589.4 382.3L590.4 388.3L595.6 379.9L593 391.3L598.3 386.3L597 391.7L602.5 388.9L600.8 393.4L604.8 393.3L603.5 396.6L610.8 396.2L604.6 400.6L610 402L602.4 404.8L611.2 407.4L603.3 408.5L609 412.4L601.2 411.8L607 417.2L600.9 415.9L605.3 422.7L599 419.8L599.2 423.8L593.9 419.4L595.3 427.4L591 422.2L590.2 428.5L587.1 420.9L585.1 427.5L583.6 421.4L579.8 428.6L578.8 423.8L573.9 428.6L575.3 421.3L568.9 425.7L571.7 419L566.2 420.5L569.7 415.2L565.8 414.7L568.6 411.2L561.6 410.8L569.7 407L561.1 405.4L566.1 403.1L562 400.1L568.5 399.4Z" fill="#00c896" fill-opacity=".93" stroke="#00c896" stroke-width=".8"/>
<path d="M581.9 417.9l1.2 -1M593 422.4l-1.6 0.5M578.5 393.1l-2 -1.1M569.1 401.8l-1.4 1M595 424.3l-1.6 -0.5M593.7 396l2.1 1.4M585.8 421l-1.8 -0.7M578.5 401.3l-2.7 -0.2M598.9 412.1l2.1 1.1M597.1 392.2l-0.7 -2.9M602.9 419.8l-0.3 -1.7M593 392.3l1.6 3M567.6 397.3l2 2.3M596.7 409.1l-1.1 1.1M576.9 398.9l-0.9 2.8M566.9 414.6l-2.3 -2.2M566 396.7l1.3 -1.3M585.6 391.4l0.2 -2.9M590 397.3l-2.1 2.1M604.3 398.8l2.6 0.7M599.7 414.9l0.6 -1.6M602.7 396.5l-0.1 1.9M566.4 411.8l-1.5 -0.8M594.3 406.1l0.6 -1.8M574.1 400.8l-0.9 -2.1M599.1 421.7l-2.8 -0.7M593.9 384.4l2.2 0.2M595.5 418.2l2.2 -2.2M596 407.3l1.2 -2.6M573.6 414.9l1.7 2.7M569.4 418.1l-1.3 -1.1M580.7 414.7l2.1 -1.7M595.6 407.7l-1.6 1.9M573.3 398.3l-0.9 1.2M574.2 398.6l2.4 0.3M592.1 404.5l1.7 2.3M584.3 417.1l-2 0M570.9 398l3.4 -0.9M602.7 408.6l0.4 -3.2M588.8 387.1l-1.5 -1.7M582 424.8l2.4 -2.4M580.6 393.3l0.2 -3M567.9 404l-1.5 2.1M580.5 408.7l-1.1 1.8M601.9 403.8l-1.3 1.5M587.3 418.6l1 1.1M596.7 393.8l-2.5 0.9M582.8 414.4l1.9 0.9M579 423.1l-3.2 -1.1M574.3 423.3l-1.4 -0.8M593.5 420.7l2.2 -0.2M588.3 390.1l1.1 -1.2M564.6 407.1l-0.3 2M595.7 406.4l-0.3 2.9M588.9 419.3l0.8 2.6M598 391.2l1 2.8M603.2 400.9l2.7 1.5M595.6 395.4l1.2 1.4M565.4 400.1l-2.1 -2.6M589.1 417.9l-0 -2.8M570.5 415.5l-0.8 1.4M580.8 408.1l-1.5 -1.5M568.4 405.6l-0.1 2.4M607.7 406.9l-3.2 -1.4M602.8 411.2l-0.3 -2.1M594 410.3l1.9 2.4M603.3 415.9l-2.3 1.2M571.5 396l-1.5 -2.3M576.5 422.1l-0.1 2.9M587.7 385.1l-1.1 2.8M601.3 402.8l-0.4 2.5M594.3 401.8l2.4 0.1M574.8 388.5l-2.3 2.6M588.7 424.6l1.3 0.8M590.4 410l-2.6 -0M595.1 424.9l-1.2 1.3M594.6 422.5l1.6 -0.9M605.7 408.6l0.2 3.5M567.8 405.1l-1.7 2.6M573.2 408.3l1.4 -1M585.3 398.2l-1.4 -1.8M590.4 400l-2.1 -0.9M605.2 394.3l-1.4 -1.4M585.9 417l-1.8 0.8M591.7 423.9l-1.3 -1.6M597 404.6l-1.6 -0.8M599.8 389l-0.3 3M591.5 393.8l-1.2 2.2M593.5 398.8l-1.1 -2.5M569.4 410.1l1.4 -1.3M596.3 395.7l0.6 -3.2M594.7 424.2l2.1 -0.1M594.3 406.3l1.5 -0.2M594 400l-0.1 -1.7M595.2 421.4l1.8 1.2M602.8 395.6l2.6 -2.3M597.2 407.3l0.8 -2.8M601.8 408.8l0.3 2.3M589.9 408l2.1 -0.1M592.2 399l-1.8 0.1M576.8 409.4l-0.7 -1.6M584.8 388.8l1.7 1.4M564.3 405.5l-1.1 1.6M606.8 400.7l-0.2 -2" stroke="#001a10" stroke-width=".8" fill="none" opacity=".6"/>
<path d="M589.3 402.6L581.9 402.5L582.6 409.2L578.4 402.6L572.9 410.1L574.5 402.5L566.6 401.7L571.1 397.5L569.3 391.5L577 395.9L579 388.8L581.5 394.1L587.1 393.4L582.2 398.9L591.8 403.2M574 427.6L571.6 413.2L561.4 417.4L568.3 408.7L553.6 402.1L568 401.9L566.1 388.4L574.8 400.1L583.6 390.1L581.3 402.4L589 404.6L585.6 410.3L589.3 419.9L579 417.3L574.1 424.3M585.8 397.6L590.3 404.3L598.3 398.6L593.8 408.2L603.3 410.4L593.4 412.7L596.9 420.3L590.9 418.3L585.8 425.8L585.3 415.4L578.1 416.1L584 410.7L576.1 404.6L585.1 405.9L585.2 395M561.2 402.2L568.6 395.2L563 384.6L577.9 393.4L579.4 376.5L583.3 390.1L591.7 387.6L584.8 396.2L596.6 400.8L587.7 403.3L588.1 413.2L580.1 402.3L570.8 417.8L573.3 403.1L562.5 401.9M588.1 400.9L592.9 406.5L597.8 400.9L596.2 408.4L601.9 409L596.7 411.9L600.2 416.9L594.6 414.7L592.8 421.6L591.2 414.4L582.1 419.5L589.4 411.7L579.4 407.8L590 408.7L587.1 398.8M579.1 405.7L583.8 401.6L579.7 396.7L585.4 397.1L587.3 392L590.1 397.9L597.7 392.6L592.7 400.5L600.7 403.1L592.6 404.3L594.3 410.4L589.2 405.4L585.6 411.8L585.5 405.5L576.6 406.6" fill="none" stroke="#00c896" stroke-width="0.9" />
<path d="M580.8 415.9L582.5 419.5L585.9 415L585.9 421.2L591.4 416L588.9 423.3L594.7 420.5L593.1 424.8L597.5 424.8L593.4 429.1L599.6 429.6L595.7 432.6L600.7 434.9L595.1 436.6L598.7 439.9L591.1 439.2L597.5 445.1L591.2 443.3L594.3 449.5L588.9 446.7L588.6 450.4L584.5 446.3L584 451.9L581.4 449.6L579.2 452.4L577.9 446.3L573.7 454.1L573.9 447.2L570.2 449.4L570.3 445.6L564.7 448.1L568.4 442.2L563.8 442.5L565.8 439.2L560.8 438.3L565.4 435.3L558 433.1L564.5 431.3L559.5 427.6L568.4 428.6L563.6 423.6L569 424.8L567.8 420.7L570.5 420.5L571.1 417.1L575.4 421.6L575.8 415.2L578.8 420.8Z" fill="#00c896" fill-opacity=".93" stroke="#00c896" stroke-width=".8"/>
<path d="M588.8 423.2l-2.3 -0.2M589.9 437.3l2.1 -2.3M586 426.4l0.5 1.5M568.8 431.4l-2.4 0.6M570.1 428.3l0.6 -1.8M592.1 427.3l2 0.7M568.2 431.5l-2 -0.9M577.6 450.3l-0.8 2.8M584.6 420.5l-3.2 0.9M563.7 439.9l2.2 0.8M576.7 430.1l1.1 -1.2M573.2 429.3l2.3 -1.2M584.1 421.5l-1.3 -2.5M577.5 442.5l0.9 -1.5M587.7 429.6l1.4 1M583.8 416.5l-2.4 1.4M579.2 451.5l-0.7 -1.7M594.5 439.4l3.1 0.8M577.5 442.9l-1.9 -1.1M572.8 431.1l1.8 -1.1M584.2 427.5l1.1 -3.3M576.5 436.9l-2 1.9M582.3 447.6l2 1.3M578.3 421.8l-0.7 -1.6M583.3 427.8l3.1 -1.6M592.6 429l-0.6 2.1M580 420.8l1.5 -0.7M562.9 435.6l-2.1 -1.5M586.3 437.9l-0.4 3.3M585.2 426.4l1.4 -0.7M565.3 423.5l-1.9 2.8M577.2 429.7l-1.2 2.1M580.3 449.9l1.3 2.8M578.3 439.4l-1.6 -0.6M564.5 428.8l-2 -1.4M593.1 436.8l2.3 1.6M589.6 444.4l-1.4 1.8M575.9 427.2l1.6 3M571.7 448.8l1.7 -1.8M583.8 439.1l1.3 -1.2M566.4 434.3l1.8 1.6M587 445.7l-2.2 -0.1M583.9 445.3l0.5 1.7M581.1 451.2l-3.3 -0M597.8 435.7l-3.1 0.2M566.1 427.4l0.4 3M585.6 442.1l2.2 0.4M569.8 432.8l1.3 -1.1M571.8 429.6l-2.5 -1.7M578.7 428.7l0.1 2.7M584.8 433.5l-2.1 -2M584.4 423.8l0.9 -2.3M583.2 432.3l2.2 -0.9M574.8 437.4l0.1 3M576.7 427l-1 1.5M582.9 442.6l-1.7 3M596.4 433.7l-2.5 0.3M583.2 416.7l0 -2.8M584.6 447.9l1.7 -2.5M593.1 442.6l-1.1 1.5M594.9 430.8l-0 -1.8M588.4 418.3l2.5 -1.7M588.2 419.6l-2 -1.3M587.4 419.4l1.4 -1.5M593.2 430.7l1.6 -0.6M596.1 430.8l-0 3.2M581 442.6l-1.9 0.5M562.5 434.8l-1.2 -2.7M567.3 444.3l0.8 -2.8" stroke="#001a10" stroke-width=".8" fill="none" opacity=".6"/>
<path d="M599 446.6L591.5 445L589.8 452.2L586 446.9L582 446.6L584.7 441.4L578.8 439.2L583.2 437L581.7 429.9L587.8 435.7L591.5 430.5L591.8 436.5L599.9 435.9L591.6 440.5L597.2 445.5M587.7 422.4L587.6 429.3L598.6 428L587.6 433.4L597.5 441.9L586.1 436.7L585.3 448.9L581.2 439.9L574.5 441.9L577.1 435.1L570.3 431.1L578 429.1L575.7 419.5L583.4 428.7L587.4 423.1M577.7 432.5L576.6 439.9L585.6 438.7L580.5 443.3L583.3 448.7L578 449.4L574.9 455.3L572.6 445.6L565.3 450.4L567.6 444.3L561.1 440.5L569.5 439.4L567.8 431.9L573.3 435.4L578.2 431.2M582.4 434.5L580.7 440.8L587.4 441.5L582.8 444.6L584.7 449.8L578.2 445L576.8 450.4L574.3 448.3L571.2 447.2L573.2 443.6L570.7 440.8L574.6 440.3L574 434L577.7 439.5L581.5 435.9" fill="none" stroke="#00c896" stroke-width="0.9" />
<path d="M596.5 367.6L599.9 366.3L598.2 362.4L602.8 363.1L602 358.3L606.9 361.9L606.7 354.9L610.3 359.7L612.5 355L614.1 361.3L617.4 357.7L618 361.6L623.1 358.6L621.6 363.6L625.5 363.7L621.6 368.1L628 368.4L625 371.3L627.2 373.7L624.1 375.4L625.8 378.5L621.1 378.3L622.7 382.4L618.5 380.8L619.2 386.3L616 384.8L614.4 389.7L611.7 382.6L609 387.5L607.3 384.4L604.3 385.3L605 380.5L599.8 382.6L603.2 377.4L597.5 377.9L601 374.5L596 372.9L598.7 370.5Z" fill="#00c896" fill-opacity=".93" stroke="#00c896" stroke-width=".8"/>
<path d="M611.2 379.1l2 -1.3M618.3 361.7l0.4 -2.1M619.6 382.7l-2.6 0.5M605.7 360.5l-0.4 2.2M621.6 366.5l-0.7 2.7M611.2 385.3l3 0.8M603.6 368.3l1.9 -0.7M612.2 376.7l-2.9 -0.9M607.7 363.1l0.6 -1.6M607.7 383.4l2.7 -0.6M607.3 359.6l-2.7 2.1M611.6 363l-2.4 1.9M608 377.6l1.8 -1.9M599.7 370.4l1.4 -1M609.6 375.9l-2.1 1.3M619.4 362.1l-2 -1.1M604.7 368.3l1.7 -2.5M615.3 366.6l-1.4 -2.6M597.7 372l2.4 -1.8M617.3 361l1.3 -1.2M608.4 359.8l-1.6 -1.3M622.8 376.8l0.9 -1.8M613.7 379.3l2.4 1.6M625.4 369.9l-1.8 2.2M624.4 378.1l-0.7 1.3M607.8 367.6l-0.3 1.6M601.3 375.8l0.6 -1.5M614.6 367.1l0.4 2.7M607.2 379.5l-1.8 -0.8M614 365l1.7 -2.6M608.5 371.2l0.3 -1.5M602 371.7l2.5 1.1M610.1 360.5l-2 1.5M605.6 368l2.4 -2.6M616.9 358.1l-1.7 3M621.5 376.6l1.6 1.8M606.8 360.4l-2.1 0.6M615.6 381.1l-0.4 1.8M611 361.1l-1.8 0.7M610 365.2l-0.3 2.6M607.5 357.8l-0.1 -3.4M623.3 365.8l-0.3 -1.6M612.8 374.9l1.9 -2.2M606.5 366.1l-1.1 1.4M601.9 360.9l-0.5 1.5M616.2 380.2l2.5 -1.8" stroke="#001a10" stroke-width=".8" fill="none" opacity=".6"/>
<path d="M616.2 373L611.9 369.7L608.7 374.6L608.6 368.8L603.1 369.1L609.5 365.7L604.5 362L609.7 363.5L610.3 359.2L612 363.6L617 359.7L616.4 363.9L618.7 366.4L614.5 367.7L616.3 373.1M618.9 373.5L616.8 368.4L612.2 372.8L614 368L611.7 366.4L613.6 364.6L613.7 361.9L616.6 363.7L619.1 358.2L619.2 363.9L622.8 363.7L620.1 366.4L623.3 369.3L618.6 368L618.6 372.1M599.7 362.5L606.5 368L609.5 359.8L609 369L616.3 366.5L613.1 371.1L616 375L611 375.5L610.2 381.5L606.7 375.1L600.8 380.3L605.1 372.5L594.4 371.9L604.3 370L599.5 362.2M626.2 376.3L623 379L620.8 382.4L616.9 376.8L610.7 386.5L613.7 376.6L603.4 376.9L610.6 372.5L609 367.5L615.8 371.6L617.2 361.1L618.8 370.4L627.1 366.3L621.1 373.2L626.5 376.4" fill="none" stroke="#00c896" stroke-width="0.9" />
<path d="M556 331.2L557.9 329.5L555.8 326.1L559.5 326L560.5 323.9L562.8 324L564.4 321.1L566.6 323.5L569.2 321.6L570 325L573.6 323.8L573 327.2L575.3 328.3L572.7 331L577 332.8L573 334.1L575.3 337.3L570.9 336.5L572.5 341.5L568.4 338.2L567.7 343.5L565.4 340.5L562.8 342.3L562.6 338L558.4 340.2L560.1 336L556 335.9L559.2 333Z" fill="#00c896" fill-opacity=".93" stroke="#00c896" stroke-width=".8"/>
<path d="M573.4 330.9l-1 1.3M564.8 322.8l1 -1.4M562.2 336.2l0.1 -1.8M558.2 325.8l0.2 -1.5M569.3 333.7l-1 -2.5M559.2 331.1l-2.3 1.5M560.3 324.3l-0.3 -3.1M573.9 327.2l-0.3 -1.5M562.1 323.6l-3 1.4M570.2 340.8l-2.7 1M565.9 337.7l-1.2 1.8M571.6 335.8l2.8 -0.3M574 328.4l1.8 -3M566.1 326.5l0 2.3M571 332.7l2.5 -2.2M561.8 339.8l0.5 -3.2M568 324.9l2.5 1.9M562.9 339.4l-1.7 1.9M570.2 331.1l-2.7 -0.5M556.5 329.7l-2.8 1.8" stroke="#001a10" stroke-width=".8" fill="none" opacity=".6"/>
<path d="M569 341.2L567.5 339L565.2 340.3L565.2 338.2L563.7 336.9L565.9 335.9L564.5 332.6L567.3 334L568.9 332.4L568.8 335.7L572.9 334.4L569.4 336.8L573.5 339.4L569.5 338.7L569.2 342M571.4 335.9L567.9 335.1L568.3 338.8L566.7 335.7L562.8 339.8L564.7 335.2L560.3 334.3L565.6 333.4L563.4 329.9L566.3 331.6L568 328.3L568.4 332L573.3 330.6L569.5 333.9L571.3 335.8M572.2 320.8L570.9 327.6L576 326.8L573.3 329.6L576.9 333.8L571.5 332.6L570.2 336.1L568.7 331.1L562.3 336.3L566.2 330.3L560.9 328.3L567.5 328.1L565.9 323.8L568.9 325.5L572.6 319.8M565.7 329.8L565.9 332.7L568.5 332.5L566.6 334.3L568.8 336.4L566 336.1L565.6 338.8L564.3 335.7L561.5 338.1L562.7 335.2L559.4 334.2L562.5 333.3L561.1 329.8L564.1 331.8L565.6 330.3" fill="none" stroke="#00c896" stroke-width="0.9" />
<path d="M574.4 293.5L572.7 296.2L565.4 295.5M574.4 293.5L571.7 294.6L566.5 296.7M574.4 293.5L571.2 292.7L567.7 297.8M574.2 293L570.5 296.4L561.5 294.8M574.2 293L569.6 294.2L562.6 296M574.2 293L569.3 291.8L563.8 297.1M581.2 294.2L584.5 294.1L587.2 297.7M581.2 294.2L583.7 295.8L588.3 298.9M581.2 294.2L582.4 297.2L589.4 300M574.1 292.5L571.6 294.8L564.2 292.5M574.1 292.5L571.1 292.9L565.4 293.6M574.1 292.5L571.1 290.9L566.5 294.8M578.5 295.9L581.1 299.2L578.6 305M578.5 295.9L578.9 299.8L579.7 306.2M578.5 295.9L576.8 299.8L580.9 307.3" fill="none" stroke="#00c896" stroke-width="0.9" />
<path d="M602.7 302.4L605.5 302.7L607.2 306.5M602.7 302.4L604.5 304.2L608.2 307.6M602.7 302.4L603.2 305.2L609.3 308.6M597.7 302.8L597 306.7L590.4 309.2M597.7 302.8L595.3 305.6L591.4 310.2M597.7 302.8L593.9 304.1L592.5 311.3M603.3 298.6L605.9 295.2L611.7 293.6M603.3 298.6L607 297.1L612.7 294.6M603.3 298.6L607.5 299.1L613.8 295.7M603.2 301.6L606.5 301.1L609.8 304.2M603.2 301.6L605.9 302.9L610.8 305.2M603.2 301.6L604.9 304.4L611.9 306.3" fill="none" stroke="#00c896" stroke-width="0.9" />
<path d="M565.9 444.1L563.4 440.2L564.3 431.9M565.9 444.1L565.7 439.8L565.5 433M565.9 444.1L568 440L566.6 434.2M568.7 445.2L570.4 439.5L576.7 434.2M568.7 445.2L572.5 441.1L577.9 435.4M568.7 445.2L574.2 443.1L579 436.5M568.4 445L568.6 441.7L572.6 437.2M568.4 445L570.3 442.7L573.7 438.4M568.4 445L571.6 444.1L574.9 439.5M569.7 446.6L572.5 443.2L578.7 441.7M569.7 446.6L573.6 445.2L579.9 442.9M569.7 446.6L574.1 447.4L581 444M566.3 451.9L568.4 454.6L565.7 459.5M566.3 451.9L566.5 455L566.8 460.7M566.3 451.9L564.5 454.8L568 461.8M568.6 445.1L569 441.6L573.4 437.1M568.6 445.1L570.7 442.6L574.5 438.3M568.6 445.1L572 444.2L575.7 439.4" fill="none" stroke="#00c896" stroke-width="0.9" />
<path d="M603.1 451.8L606.5 451.6L609.5 455M603.1 451.8L605.8 453.4L610.6 456.1M603.1 451.8L604.7 454.8L611.7 457.2M603.2 448.3L605.3 445L610.7 442.8M603.2 448.3L606.5 446.6L611.8 443.9M603.2 448.3L607.2 448.6L612.9 445M599.6 446.4L597.6 444.3L597.6 437.8M599.6 446.4L599.3 443.9L598.7 438.9M599.6 446.4L601 443.9L599.7 439.9M596.6 451L594.2 453.7L587 452.6M596.6 451L593.4 452L588 453.6M596.6 451L593.1 450.1L589.1 454.7M601 453.5L604.2 456.7L602.9 462.8M601 453.5L602.2 457.6L604 463.8M601 453.5L600 457.9L605 464.9M597.7 452.8L597.4 455.8L591.6 457.7M597.7 452.8L595.9 454.8L592.6 458.8M597.7 452.8L594.8 453.5L593.7 459.8" fill="none" stroke="#00c896" stroke-width="0.9" />
<path d="M653.6 411.6L656.8 409.3L662.3 409.6M653.6 411.6L657.3 411.3L663.3 410.7M653.6 411.6L657.3 413.3L664.4 411.7M651.5 415.3L653.9 416.5L653.6 420.8M651.5 415.3L652.5 417.4L654.6 421.8M651.5 415.3L651 417.9L655.7 422.9M647.9 409L644.2 407.3L641.2 399.8M647.9 409L645.7 405.9L642.2 400.9M647.9 409L647.6 404.9L643.3 401.9M653.6 412.6L657.3 411.1L662.1 413M653.6 412.6L657.3 413.1L663.2 414M653.6 412.6L656.7 415.1L664.2 415.1M649.8 408.4L647.5 404.9L648.1 397.3M649.8 408.4L649.5 404.5L649.2 398.3M649.8 408.4L651.6 404.6L650.2 399.4" fill="none" stroke="#00c896" stroke-width="0.9" />
<path d="M664.3 348L666.3 350.7L664.2 355.3M664.3 348L664.6 351.2L665.1 356.2M664.3 348L662.9 351.1L666 357.1M661.6 343.2L657.9 342.6L653.7 336.8M661.6 343.2L658.8 341L654.6 337.7M661.6 343.2L660.1 339.7L655.4 338.6M665.8 347.4L669.6 349.1L670.9 354.1M665.8 347.4L668.3 350.5L671.7 355M665.8 347.4L666.6 351.4L672.6 355.9M666.8 344L669.5 341L674.7 340M666.8 344L670.4 342.7L675.6 340.9M666.8 344L670.8 344.6L676.5 341.7" fill="none" stroke="#00c896" stroke-width="0.9" />
<path d="M561.9 302.7L562.3 299.6L565.8 295.8M561.9 302.7L563.7 300.4L566.7 296.7M561.9 302.7L564.8 301.6L567.5 297.6M562.5 303.3L563.4 300.8L567.2 298.5M562.5 303.3L564.4 301.9L568 299.4M562.5 303.3L565.1 303.2L568.9 300.2M560.4 308L562.7 310.9L560.8 315.7M560.4 308L560.9 311.4L561.7 316.6M560.4 308L559.1 311.4L562.6 317.4M562.4 303.3L563.2 301L566.8 298.7M562.4 303.3L564.2 302L567.6 299.6M562.4 303.3L564.9 303.3L568.5 300.4" fill="none" stroke="#00c896" stroke-width="0.9" />
<g shape-rendering="crispEdges">
<rect x="814.5" y="155.5" width="279" height="139" fill="none" stroke="#00c896" stroke-width="1"/>
<path d="M815 201.5H1093" stroke="#00c896" stroke-width="1"/>
<path d="M815 248H1093" stroke="#00c896" stroke-width="2"/>
<path d="M845 170.5H1062" stroke="#00c896" stroke-width="1"/>
<path d="M845 172.5H1062" stroke="#00c896" stroke-width="1"/>
<path d="M845 175.5H1062" stroke="#00c896" stroke-width="1"/>
<path d="M845 274.5H1062" stroke="#00c896" stroke-width="1"/>
<path d="M845 277.5H1062" stroke="#00c896" stroke-width="1"/>
<path d="M845 279.5H1062" stroke="#00c896" stroke-width="1"/>
<path d="M840.5 170V280" stroke="#00c896" stroke-width="1"/>
<path d="M843.5 170V280" stroke="#00c896" stroke-width="1"/>
<path d="M846.5 170V280" stroke="#00c896" stroke-width="1"/>
<path d="M850.5 170V280" stroke="#00c896" stroke-width="1"/>
<path d="M853.5 170V280" stroke="#00c896" stroke-width="1"/>
<path d="M1054.5 170V280" stroke="#00c896" stroke-width="1"/>
<path d="M1057.5 170V280" stroke="#00c896" stroke-width="1"/>
<path d="M1060.5 170V280" stroke="#00c896" stroke-width="1"/>
<path d="M1063.5 170V280" stroke="#00c896" stroke-width="1"/>
<path d="M1066.5 170V280" stroke="#00c896" stroke-width="1"/>
</g>
<path d="M838 166L844 164H857V173L851 175H838Z M838 166H851V175M851 166L857 164" fill="none" stroke="#00c896" stroke-width="1" />
<circle cx="851" cy="170" r="3.5" fill="none" stroke="#00c896" stroke-width="1"/>
<path d="M1051 166L1057 164H1070V173L1064 175H1051Z M1051 166H1064V175M1064 166L1070 164" fill="none" stroke="#00c896" stroke-width="1" />
<circle cx="1064" cy="170" r="3.5" fill="none" stroke="#00c896" stroke-width="1"/>
<path d="M838 276L844 274H857V283L851 285H838Z M838 276H851V285M851 276L857 274" fill="none" stroke="#00c896" stroke-width="1" />
<circle cx="851" cy="280" r="3.5" fill="none" stroke="#00c896" stroke-width="1"/>
<path d="M1051 276L1057 274H1070V283L1064 285H1051Z M1051 276H1064V285M1064 276L1070 274" fill="none" stroke="#00c896" stroke-width="1" />
<circle cx="1064" cy="280" r="3.5" fill="none" stroke="#00c896" stroke-width="1"/>
<ellipse cx="956" cy="224.5" rx="44" ry="31.5" stroke="#00c896"/>
<circle cx="956" cy="201" r="7.4" fill="none" stroke="#00c896" stroke-width="1.3"/>
<circle cx="956" cy="201" r="5.2" fill="none" stroke="#00c896" stroke-width="1.6"/>
<circle cx="956" cy="201" r="2.8" fill="none" stroke="#00c896" stroke-width="1.4"/>
<circle cx="956" cy="201" r="1.1" fill="#e6fff6" stroke="#fff" stroke-width="0"/>
<circle cx="936" cy="212.5" r="7.4" fill="none" stroke="#00c896" stroke-width="1.3"/>
<circle cx="936" cy="212.5" r="5.2" fill="none" stroke="#00c896" stroke-width="1.6"/>
<circle cx="936" cy="212.5" r="2.8" fill="none" stroke="#00c896" stroke-width="1.4"/>
<circle cx="936" cy="212.5" r="1.1" fill="#e6fff6" stroke="#fff" stroke-width="0"/>
<circle cx="978" cy="212.5" r="7.4" fill="none" stroke="#00c896" stroke-width="1.3"/>
<circle cx="978" cy="212.5" r="5.2" fill="none" stroke="#00c896" stroke-width="1.6"/>
<circle cx="978" cy="212.5" r="2.8" fill="none" stroke="#00c896" stroke-width="1.4"/>
<circle cx="978" cy="212.5" r="1.1" fill="#e6fff6" stroke="#fff" stroke-width="0"/>
<circle cx="915.5" cy="224" r="7.4" fill="none" stroke="#00c896" stroke-width="1.3"/>
<circle cx="915.5" cy="224" r="5.2" fill="none" stroke="#00c896" stroke-width="1.6"/>
<circle cx="915.5" cy="224" r="2.8" fill="none" stroke="#00c896" stroke-width="1.4"/>
<circle cx="915.5" cy="224" r="1.1" fill="#e6fff6" stroke="#fff" stroke-width="0"/>
<circle cx="998" cy="224" r="7.4" fill="none" stroke="#00c896" stroke-width="1.3"/>
<circle cx="998" cy="224" r="5.2" fill="none" stroke="#00c896" stroke-width="1.6"/>
<circle cx="998" cy="224" r="2.8" fill="none" stroke="#00c896" stroke-width="1.4"/>
<circle cx="998" cy="224" r="1.1" fill="#e6fff6" stroke="#fff" stroke-width="0"/>
<circle cx="936" cy="236" r="7.4" fill="none" stroke="#00c896" stroke-width="1.3"/>
<circle cx="936" cy="236" r="5.2" fill="none" stroke="#00c896" stroke-width="1.6"/>
<circle cx="936" cy="236" r="2.8" fill="none" stroke="#00c896" stroke-width="1.4"/>
<circle cx="936" cy="236" r="1.1" fill="#e6fff6" stroke="#fff" stroke-width="0"/>
<circle cx="978" cy="236" r="7.4" fill="none" stroke="#00c896" stroke-width="1.3"/>
<circle cx="978" cy="236" r="5.2" fill="none" stroke="#00c896" stroke-width="1.6"/>
<circle cx="978" cy="236" r="2.8" fill="none" stroke="#00c896" stroke-width="1.4"/>
<circle cx="978" cy="236" r="1.1" fill="#e6fff6" stroke="#fff" stroke-width="0"/>
<circle cx="956" cy="248" r="7.4" fill="none" stroke="#00c896" stroke-width="1.3"/>
<circle cx="956" cy="248" r="5.2" fill="none" stroke="#00c896" stroke-width="1.6"/>
<circle cx="956" cy="248" r="2.8" fill="none" stroke="#00c896" stroke-width="1.4"/>
<circle cx="956" cy="248" r="1.1" fill="#e6fff6" stroke="#fff" stroke-width="0"/>
<path d="M951.5 232.3L949.9 230.7L948.2 232.4L947.6 229.7L944.5 231.6L945.2 228.7L941.9 228.7L944.4 226.2L941.5 224.9L945.2 223.8L942 221L945.9 221.6L945 218.5L947.5 219.7L948.2 216.3L950.1 219.2L952.1 216.3L952.7 219.6L954.9 219L955.1 221.1L957 221.8L956.6 223.6L958.1 225.1L955.2 226.3L958 229L954.3 228.5L954.9 231.4L952.3 230.1Z" fill="#00c896" fill-opacity=".93" stroke="#00c896" stroke-width=".8"/>
<path d="M949.2 223.5l-1.3 1.3M950.6 223.9l-1.6 -1.3M944.5 226.6l-0.4 -1.7M950.2 227.9l1.7 -0.4M953.6 229.2l-2.9 -1.6M953.6 226.3l1.3 2.3M945.3 226.4l2.2 -1.8M954.7 219.3l-0.4 3.4M948.2 226.2l1.5 -0.9M954.2 225.5l-0.8 3.3M953.4 221.4l-3.1 -0.6" stroke="#001a10" stroke-width=".8" fill="none" opacity=".6"/>
<path d="M955.7 229.2L953.3 228.5L952 232L950.7 229.2L948.8 228.7L950.7 226.5L947.3 224.7L951.1 225L950.6 222L952.5 224.6L954.9 221.7L954 225L958 225.2L954.6 226.8L956.5 229.9M949.9 216.3L952.3 219.2L954.9 215.8L954.1 219.8L957 220.1L954.8 221.8L956.1 224.2L953.8 224.3L952.3 225.6L951.3 223.4L948.1 224.6L950.2 221.7L948.1 220.3L951.2 220.3L950.6 217.7M951.6 226.6L948.9 226.6L948 228.7L946.6 226.5L944.5 227.4L945.8 224.9L942 224.1L946 223.6L943.7 219.6L946.7 221.4L948.5 219.3L948.8 222.4L952.6 222L948.9 224.3L951.1 226.3M951.8 222.4L950 226.5L952.3 227.3L950.5 228.5L951.3 231.1L948.4 228.6L947.3 232L946.9 229.1L944 229.7L946.1 227.6L942.1 224.9L947.4 226.6L946.4 221.3L948.6 224.9L951 223.4" fill="none" stroke="#00c896" stroke-width="0.9" />
<path d="M954.2 221.9L956.7 221L955.2 218.5L958.3 219.1L958.2 216.6L960.4 218.1L961.3 215.4L962.7 217.9L965 215.2L965.4 217.8L967.7 217.6L967.5 219.8L970.2 220.4L967.5 222.5L970.1 224.1L966.9 224.9L969.4 227.9L966.1 227.3L965.8 229.4L963.6 228L962.7 231.5L961.2 228.6L959 231L959 227.5L955.7 229L956.5 226.3L954.8 225.3L956 223.5Z" fill="#00c896" fill-opacity=".93" stroke="#00c896" stroke-width=".8"/>
<path d="M964.3 228.9l1 -2.9M962.3 225.6l-1.4 -2.3M964.3 225.7l-1.5 -0.8M959.4 220.1l-0.1 2.3M955.7 221.7l2.9 0.6M962.8 227.1l-1.8 -2.2M956.6 218.3l0.6 2M959.9 219.6l1.1 1.6M962.9 216.2l-0.7 -3.3M963.2 218.8l-1.2 2.7M967.6 225l1.4 0.8" stroke="#001a10" stroke-width=".8" fill="none" opacity=".6"/>
<path d="M966.6 215.9L963.7 219.8L968.5 221.1L964.3 221.7L965.8 226.3L962.4 223.4L960.3 225.2L960.9 221.5L956.1 222.3L959.8 220L957.4 217.3L960.9 218.4L961.4 213.3L963.2 217.4L966.6 216M969.5 229.6L966.3 228.4L965.4 230.6L963.7 229.8L961.8 229.2L963 226.9L960.5 225.3L964 225.3L962.6 220.9L965.3 224.6L967.5 221.7L966.7 225.2L969.5 225.3L967.4 226.8L968.9 229.1M954.4 218.8L958.1 219.1L956.9 215.7L958.9 218.2L960.3 216.7L960.2 218.6L962.2 218.9L960.5 220L962.8 222.6L960 221.7L959.1 224.6L958.3 221.2L956 222.2L956.8 220.2L955.7 219M961 223.3L960.5 225.8L963.3 225.5L961.5 226.9L963.3 229.1L960.2 227.6L959.9 230.8L959.2 227.6L956.9 229L957.3 227.2L955.7 225.9L958.8 225.9L957.7 223L959.5 223.9L961 223.3" fill="none" stroke="#00c896" stroke-width="0.9" />
<path d="M975.4 213.3L974.7 215.6L976.6 215.4L975.6 217L977.3 217.7L975.7 218.6L976.7 219.9L974.9 220.1L975.9 222.4L973.8 221.3L973.6 223.4L972.2 222.4L971 223.7L970.6 221.3L968.6 222.8L968.8 220.8L966.8 220.9L968 219.2L966.3 218.3L967.8 217.3L967.2 216L968.7 215.6L968.4 214L969.9 214.2L970.6 213.1L971.8 214.1L972.9 212.8L973.6 214Z" fill="#00c896" fill-opacity=".93" stroke="#00c896" stroke-width=".8"/>
<path d="M969.4 221.8l1.9 -2.7M975.1 221.7l-0.1 -2.9M971.2 216.9l1.8 -1.9M969.1 218.8l0.6 -3M973.7 216.2l-1.1 1.7" stroke="#001a10" stroke-width=".8" fill="none" opacity=".6"/>
<path d="M970.5 215.1L970.3 216.7L972.4 216.1L970.7 217.2L971.9 218.2L970.8 218.4L970.3 219.3L969.6 218.4L968.4 218.9L968.6 217.7L967.8 217L968.8 216.4L968.8 215.5L969.8 215.9L970.6 214.8M970.1 214.5L971.8 216.1L973.7 212.9L973.2 216.4L976.6 216.1L973 217.7L975.3 219.8L972.9 219.3L972.2 220.9L971.2 219.5L968.5 220.8L970.6 218L967.3 216.9L970.3 216.5L969.4 213.4M973.6 214L974.7 216.8L976.3 215.4L975.7 217L977.7 217.6L975.8 218.2L976.2 219.6L975.1 219.8L973.9 220.8L973.7 218.8L971.2 219.4L973 217.7L971.2 216.2L973.6 216.6L973.8 215M973.7 215L971.7 217.6L973.7 219.2L970.6 218.9L971.4 222.4L969.5 219.8L967.8 221.3L968.4 218.8L965.4 218.8L968.2 217.6L967.1 215.9L968.9 216.4L969.8 213.3L970.1 216.9L973 215.5" fill="none" stroke="#00c896" stroke-width="0.9" />
<path d="M942.5 235L941.1 234.3L940.1 235.1L939.2 233.9L937.6 235.2L937.4 233.3L935.6 233.6L936.3 231.9L934.9 231.3L935.7 230.1L934.2 228.8L936.9 228.6L935.3 226.4L937.6 227.1L937.7 225.5L939.2 226.7L939.9 224.2L940.8 226L942.1 225.4L942.3 226.9L944.3 226.4L944 228L945.1 228.7L944.2 229.9L945.1 231.1L943.2 231.5L944 233.1L942.4 232.9Z" fill="#00c896" fill-opacity=".93" stroke="#00c896" stroke-width=".8"/>
<path d="M937.9 228.1l1 1.6M942 231.2l-1 2.3M941.4 233.2l-3.2 1.3M935.1 230.4l-1.9 0.3M938.3 228.9l0.8 1.4" stroke="#001a10" stroke-width=".8" fill="none" opacity=".6"/>
<path d="M939.2 234.8L939.9 233L938 232.5L940 231.9L938.9 229.9L940.8 231.5L941.7 229L941.8 231.4L944.4 230.7L942.2 232.4L943.6 233.6L942 233.6L941.9 235.8L940.7 233.9L939.2 234.8M940.3 228.5L941.8 229.4L943.2 228.4L942.5 230.9L945.9 230.5L943.2 231.8L944.4 233.5L942.5 232.8L941.8 234.8L941 233.2L939 233.8L939.7 232L938.4 230.7L940.8 230.7L940.1 228.1M939.3 230.7L939.7 229.2L938.7 228.2L940.4 228L940.3 226.5L941.4 227.6L942.5 226.3L942.2 228.1L944 228.1L942.3 228.9L943.7 230.4L942.3 230.3L941.6 232.5L940.7 230.5L938.6 231.2M939.2 235.6L937.7 233.9L936.5 234.4L936.2 233.3L934.5 232.6L936.5 231.7L936 230.4L937.6 231.5L938.2 228.6L938.5 231.1L940.2 230.7L938.9 232L941.2 233.3L939.2 233.4L939.3 235.9" fill="none" stroke="#00c896" stroke-width="0.9" />
<path d="M956.2 231.6L954.1 227.1L952.3 226.9L953.9 223.5L949.5 224.3L952.9 222.5L948.9 219.9L953.6 221.1L952.3 216.9L954.8 218.9L956.7 216.4L957.4 219.3L959.9 219.1L958.5 221.7L963.6 223.2L958.8 224.2L958.7 226L956 224.3L956 230.2M943.9 227.3L945.6 225.8L942.4 220.4L947.7 223.4L949 219.2L951.7 220.8L956.8 217.9L952.8 225.7L957.9 225.7L953.9 228.2L959.9 232.6L954 232.1L955 239.2L950.1 231.7L946.9 238.4L947.8 230.6L944 231.8L944.9 229.1L942 227.1M961.6 211.3L963.4 213.7L970 209.2L965.1 216.8L974.3 217L964.6 219.5L967.3 222.5L962.8 220.7L965.2 230.8L961.1 223.4L958.2 226.3L957.6 222.9L955.1 222L956.5 219.4L953.6 217.1L958 216.6L955.8 211.6L959 211.6L961.9 205.2M955.5 215.8L956.9 220.5L963.5 215.8L957.6 223.6L966.1 223.5L958.2 225.6L960.4 228.3L958.5 229.5L958.3 235.4L954.9 227.9L951.8 232.8L952.4 227.7L949.6 227.7L952.4 225.2L943.6 222.3L952.2 223L949.6 217.6L953.8 220.6L955.6 214M959.1 235.4L954.5 230.8L954.1 235.8L953.4 231.1L948.8 235.9L951.3 231.1L948.9 230.4L951.2 229L946.8 225.4L951.4 226.5L951.3 222.3L954 226.4L956.6 221.9L955.2 228L961.1 225.2L957.8 228.7L961.4 230.6L955.8 230.4L959.2 235.4M959.2 223.4L961.7 227.5L963.1 224.9L963.3 227.3L966.1 226.4L964.2 228.7L969.2 230.1L963.7 230.3L967.4 235.1L963.1 232.2L962.4 237.7L961.3 231.2L956.9 236.1L959.8 230.7L956.6 230.6L960.6 229.2L957.8 227.3L960.2 227.6L959.2 223.4M969.2 223.8L965.7 226.4L969.2 229.3L963.8 228.3L964.6 231.8L962.2 229.8L959.7 235.8L961 227.4L955.8 231L959.4 227.1L956.4 226.2L957.6 224.7L955.5 220.9L959 221.4L960.5 218.3L962.1 224.1L964.2 222.2L964.7 223.9L967.6 224.4M963.4 213.2L959.4 217.1L962.7 218.3L959.5 219L960.6 221.5L958.4 221L957.7 227.3L956.2 220.5L951.2 226L954.1 219.7L951.9 219.2L951.4 217.4L952 215.6L954.6 215.6L954.5 212.8L956.6 214.7L959.4 208.2L960.3 212.8L963.5 213.1" fill="none" stroke="#00c896" stroke-width="0.9" />
<path d="M1011.5 193.5L1046.5 226L1025.5 248.5L990 216.5Z M1009 198L1042 226.5L1025 244L994 216.5Z M1028 209L1008 232 M1031.5 212L1011.5 235" fill="none" stroke="#00c896" stroke-width="1.1" />
<g><path d="M866.5 298H932Q942 299 945 310L932.7 367Q930.7 375 921.7 375H876.8Q867.8 375 865.8 367L853.5 310Q856.5 299 866.5 298Z" fill="none" stroke="#00c896" stroke-width="1.3"/><path d="M861.5 299.8L869.6 372M937 299.8L928.9 372" fill="none" stroke="#00c896" stroke-width="1.1"/><path d="M864 300.1L870.4 372M934.5 300.1L928.1 372" fill="none" stroke="#00c896" stroke-width="1.1"/><path d="M866.5 300.3L871.3 372M932 300.3L927.2 372" fill="none" stroke="#00c896" stroke-width="1.1"/><path d="M861.5 300H937M863.5 302H935" fill="none" stroke="#00c896" stroke-width="1.1"/><path d="M869.5 300V356H929V300" fill="none" stroke="#00c896" stroke-width="1.2"/><path d="M872.5 302L874.5 352H924L926 302" fill="none" stroke="#00c896" stroke-width="1"/><path d="M868.8 360H929.7" fill="none" stroke="#00c896" stroke-width="3"/><path d="M867.8 355.5H930.7M869.8 364.5H928.7" fill="none" stroke="#00c896" stroke-width="1"/><path d="M887.2 299V372" fill="none" stroke="#00c896" stroke-width="2"/><path d="M887.2 308v14M887.2 334v14" fill="none" stroke="#00c896" stroke-width="3"/><path d="M911.2 299V372" fill="none" stroke="#00c896" stroke-width="2"/><path d="M911.2 308v14M911.2 334v14" fill="none" stroke="#00c896" stroke-width="3"/><path d="M872.2 310l1.1 10M873.6 336l1.1 10" fill="none" stroke="#00c896" stroke-width="2.2"/><path d="M926.2 310l-1.1 10M924.9 336l-1.1 10" fill="none" stroke="#00c896" stroke-width="2.2"/><path d="M895.2 327.5h11" fill="none" stroke="#00c896" stroke-width="1.8"/><path d="M908.2 327.5h11" stroke="#00c896" stroke-width="1.4" stroke-dasharray="2 2"/><path d="M871.8 370l5 -4l6 0l6 5l6 -5l6 0l6 5l6 -5l6 0l6 4" fill="none" stroke="#00c896" stroke-width="1.1"/></g>
<g><path d="M982.5 298H1046.5Q1056.5 299 1059.5 310L1047.5 367Q1045.5 375 1036.5 375H992.5Q983.5 375 981.5 367L969.5 310Q972.5 299 982.5 298Z" fill="none" stroke="#00c896" stroke-width="1.3"/><path d="M977.5 299.8L985.3 372M1051.5 299.8L1043.7 372" fill="none" stroke="#00c896" stroke-width="1.1"/><path d="M980 300.1L986.2 372M1049 300.1L1042.8 372" fill="none" stroke="#00c896" stroke-width="1.1"/><path d="M982.5 300.3L987.1 372M1046.5 300.3L1041.9 372" fill="none" stroke="#00c896" stroke-width="1.1"/><path d="M977.5 300H1051.5M979.5 302H1049.5" fill="none" stroke="#00c896" stroke-width="1.1"/><path d="M985.5 300V356H1043.5V300" fill="none" stroke="#00c896" stroke-width="1.2"/><path d="M988.5 302L990.5 352H1038.5L1040.5 302" fill="none" stroke="#00c896" stroke-width="1"/><path d="M984.5 360H1044.5" fill="none" stroke="#00c896" stroke-width="3"/><path d="M983.5 355.5H1045.5M985.5 364.5H1043.5" fill="none" stroke="#00c896" stroke-width="1"/><path d="M1002.5 299V372" fill="none" stroke="#00c896" stroke-width="2"/><path d="M1002.5 308v14M1002.5 334v14" fill="none" stroke="#00c896" stroke-width="3"/><path d="M1026.5 299V372" fill="none" stroke="#00c896" stroke-width="2"/><path d="M1026.5 308v14M1026.5 334v14" fill="none" stroke="#00c896" stroke-width="3"/><path d="M987.5 310l1.1 10M988.9 336l1.1 10" fill="none" stroke="#00c896" stroke-width="2.2"/><path d="M1041.5 310l-1.1 10M1040.2 336l-1.1 10" fill="none" stroke="#00c896" stroke-width="2.2"/><path d="M1010.5 327.5h11" fill="none" stroke="#00c896" stroke-width="1.8"/><path d="M1023.5 327.5h11" stroke="#00c896" stroke-width="1.4" stroke-dasharray="2 2"/><path d="M987.5 370l5 -4l6 0l6 5l6 -5l6 0l6 5l6 -5l6 0l6 4" fill="none" stroke="#00c896" stroke-width="1.1"/></g>
<g transform="translate(0 219) scale(1 -1)"><path d="M866.5 71H932Q942 72 945 83L932.7 140Q930.7 148 921.7 148H876.8Q867.8 148 865.8 140L853.5 83Q856.5 72 866.5 71Z" fill="none" stroke="#00c896" stroke-width="1.3"/><path d="M861.5 72.8L869.6 145M937 72.8L928.9 145" fill="none" stroke="#00c896" stroke-width="1.1"/><path d="M864 73L870.4 145M934.5 73L928.1 145" fill="none" stroke="#00c896" stroke-width="1.1"/><path d="M866.5 73.3L871.3 145M932 73.3L927.2 145" fill="none" stroke="#00c896" stroke-width="1.1"/><path d="M861.5 73H937M863.5 75H935" fill="none" stroke="#00c896" stroke-width="1.1"/><path d="M869.5 73V129H929V73" fill="none" stroke="#00c896" stroke-width="1.2"/><path d="M872.5 75L874.5 125H924L926 75" fill="none" stroke="#00c896" stroke-width="1"/><path d="M868.8 133H929.7" fill="none" stroke="#00c896" stroke-width="3"/><path d="M867.8 128.5H930.7M869.8 137.5H928.7" fill="none" stroke="#00c896" stroke-width="1"/><path d="M887.2 72V145" fill="none" stroke="#00c896" stroke-width="2"/><path d="M887.2 81v14M887.2 107v14" fill="none" stroke="#00c896" stroke-width="3"/><path d="M911.2 72V145" fill="none" stroke="#00c896" stroke-width="2"/><path d="M911.2 81v14M911.2 107v14" fill="none" stroke="#00c896" stroke-width="3"/><path d="M872.2 83l1.1 10M873.6 109l1.1 10" fill="none" stroke="#00c896" stroke-width="2.2"/><path d="M926.2 83l-1.1 10M924.9 109l-1.1 10" fill="none" stroke="#00c896" stroke-width="2.2"/><path d="M895.2 100.5h11" fill="none" stroke="#00c896" stroke-width="1.8"/><path d="M908.2 100.5h11" stroke="#00c896" stroke-width="1.4" stroke-dasharray="2 2"/><path d="M871.8 143l5 -4l6 0l6 5l6 -5l6 0l6 5l6 -5l6 0l6 4" fill="none" stroke="#00c896" stroke-width="1.1"/></g>
<g transform="translate(0 219) scale(1 -1)"><path d="M982.5 71H1046.5Q1056.5 72 1059.5 83L1047.5 140Q1045.5 148 1036.5 148H992.5Q983.5 148 981.5 140L969.5 83Q972.5 72 982.5 71Z" fill="none" stroke="#00c896" stroke-width="1.3"/><path d="M977.5 72.8L985.3 145M1051.5 72.8L1043.7 145" fill="none" stroke="#00c896" stroke-width="1.1"/><path d="M980 73L986.2 145M1049 73L1042.8 145" fill="none" stroke="#00c896" stroke-width="1.1"/><path d="M982.5 73.3L987.1 145M1046.5 73.3L1041.9 145" fill="none" stroke="#00c896" stroke-width="1.1"/><path d="M977.5 73H1051.5M979.5 75H1049.5" fill="none" stroke="#00c896" stroke-width="1.1"/><path d="M985.5 73V129H1043.5V73" fill="none" stroke="#00c896" stroke-width="1.2"/><path d="M988.5 75L990.5 125H1038.5L1040.5 75" fill="none" stroke="#00c896" stroke-width="1"/><path d="M984.5 133H1044.5" fill="none" stroke="#00c896" stroke-width="3"/><path d="M983.5 128.5H1045.5M985.5 137.5H1043.5" fill="none" stroke="#00c896" stroke-width="1"/><path d="M1002.5 72V145" fill="none" stroke="#00c896" stroke-width="2"/><path d="M1002.5 81v14M1002.5 107v14" fill="none" stroke="#00c896" stroke-width="3"/><path d="M1026.5 72V145" fill="none" stroke="#00c896" stroke-width="2"/><path d="M1026.5 81v14M1026.5 107v14" fill="none" stroke="#00c896" stroke-width="3"/><path d="M987.5 83l1.1 10M988.9 109l1.1 10" fill="none" stroke="#00c896" stroke-width="2.2"/><path d="M1041.5 83l-1.1 10M1040.2 109l-1.1 10" fill="none" stroke="#00c896" stroke-width="2.2"/><path d="M1010.5 100.5h11" fill="none" stroke="#00c896" stroke-width="1.8"/><path d="M1023.5 100.5h11" stroke="#00c896" stroke-width="1.4" stroke-dasharray="2 2"/><path d="M987.5 143l5 -4l6 0l6 5l6 -5l6 0l6 5l6 -5l6 0l6 4" fill="none" stroke="#00c896" stroke-width="1.1"/></g>
<rect x="814.2" y="473" width="53.6" height="38" fill="none" stroke="#00c896" stroke-width="1.2"/>
<rect x="816.5" y="475.5" width="49" height="33" fill="none" stroke="#00c896" stroke-width="2.2"/>
<circle cx="812.5" cy="472.5" r="2.2" fill="none" stroke="#00c896" stroke-width="1"/>
<circle cx="818.5" cy="477.5" r="2.2" fill="none" stroke="#00c896" stroke-width="1"/>
<path d="M812.5 472.5L818.5 477.5" fill="none" stroke="#00c896" stroke-width="1.2" />
<circle cx="869.5" cy="472.5" r="2.2" fill="none" stroke="#00c896" stroke-width="1"/>
<circle cx="863.5" cy="477.5" r="2.2" fill="none" stroke="#00c896" stroke-width="1"/>
<path d="M869.5 472.5L863.5 477.5" fill="none" stroke="#00c896" stroke-width="1.2" />
<circle cx="812.5" cy="511.5" r="2.2" fill="none" stroke="#00c896" stroke-width="1"/>
<circle cx="818.5" cy="506.5" r="2.2" fill="none" stroke="#00c896" stroke-width="1"/>
<path d="M812.5 511.5L818.5 506.5" fill="none" stroke="#00c896" stroke-width="1.2" />
<circle cx="869.5" cy="511.5" r="2.2" fill="none" stroke="#00c896" stroke-width="1"/>
<circle cx="863.5" cy="506.5" r="2.2" fill="none" stroke="#00c896" stroke-width="1"/>
<path d="M869.5 511.5L863.5 506.5" fill="none" stroke="#00c896" stroke-width="1.2" />
<rect x="834" y="491" width="14" height="2" fill="none" stroke="#00c896" stroke-width="1"/>
<rect x="915.2" y="473" width="54.1" height="38" fill="none" stroke="#00c896" stroke-width="1.2"/>
<rect x="917.5" y="475.5" width="49.5" height="33" fill="none" stroke="#00c896" stroke-width="2.2"/>
<circle cx="913.5" cy="472.5" r="2.2" fill="none" stroke="#00c896" stroke-width="1"/>
<circle cx="919.5" cy="477.5" r="2.2" fill="none" stroke="#00c896" stroke-width="1"/>
<path d="M913.5 472.5L919.5 477.5" fill="none" stroke="#00c896" stroke-width="1.2" />
<circle cx="971" cy="472.5" r="2.2" fill="none" stroke="#00c896" stroke-width="1"/>
<circle cx="965" cy="477.5" r="2.2" fill="none" stroke="#00c896" stroke-width="1"/>
<path d="M971 472.5L965 477.5" fill="none" stroke="#00c896" stroke-width="1.2" />
<circle cx="913.5" cy="511.5" r="2.2" fill="none" stroke="#00c896" stroke-width="1"/>
<circle cx="919.5" cy="506.5" r="2.2" fill="none" stroke="#00c896" stroke-width="1"/>
<path d="M913.5 511.5L919.5 506.5" fill="none" stroke="#00c896" stroke-width="1.2" />
<circle cx="971" cy="511.5" r="2.2" fill="none" stroke="#00c896" stroke-width="1"/>
<circle cx="965" cy="506.5" r="2.2" fill="none" stroke="#00c896" stroke-width="1"/>
<path d="M971 511.5L965 506.5" fill="none" stroke="#00c896" stroke-width="1.2" />
<rect x="935.2" y="491" width="14" height="2" fill="none" stroke="#00c896" stroke-width="1"/>
<rect x="1026.2" y="473" width="54.6" height="38" fill="none" stroke="#00c896" stroke-width="1.2"/>
<rect x="1028.5" y="475.5" width="50" height="33" fill="none" stroke="#00c896" stroke-width="2.2"/>
<circle cx="1024.5" cy="472.5" r="2.2" fill="none" stroke="#00c896" stroke-width="1"/>
<circle cx="1030.5" cy="477.5" r="2.2" fill="none" stroke="#00c896" stroke-width="1"/>
<path d="M1024.5 472.5L1030.5 477.5" fill="none" stroke="#00c896" stroke-width="1.2" />
<circle cx="1082.5" cy="472.5" r="2.2" fill="none" stroke="#00c896" stroke-width="1"/>
<circle cx="1076.5" cy="477.5" r="2.2" fill="none" stroke="#00c896" stroke-width="1"/>
<path d="M1082.5 472.5L1076.5 477.5" fill="none" stroke="#00c896" stroke-width="1.2" />
<circle cx="1024.5" cy="511.5" r="2.2" fill="none" stroke="#00c896" stroke-width="1"/>
<circle cx="1030.5" cy="506.5" r="2.2" fill="none" stroke="#00c896" stroke-width="1"/>
<path d="M1024.5 511.5L1030.5 506.5" fill="none" stroke="#00c896" stroke-width="1.2" />
<circle cx="1082.5" cy="511.5" r="2.2" fill="none" stroke="#00c896" stroke-width="1"/>
<circle cx="1076.5" cy="506.5" r="2.2" fill="none" stroke="#00c896" stroke-width="1"/>
<path d="M1082.5 511.5L1076.5 506.5" fill="none" stroke="#00c896" stroke-width="1.2" />
<rect x="1046.5" y="491" width="14" height="2" fill="none" stroke="#00c896" stroke-width="1"/>
<g shape-rendering="crispEdges">
<rect x="772.5" y="489.5" width="343" height="125" fill="none" stroke="#cf8a6a" stroke-width="1"/>
<path d="M773 489.5H1115" stroke="#e8d8d0" stroke-width="1"/>
<path d="M777.5 490V614" stroke="#b8601a" stroke-width="1"/>
<path d="M1111.5 490V614" stroke="#b8601a" stroke-width="1"/>
<path d="M777 528.5H1111" stroke="#ffffff" stroke-width="1"/>
<path d="M777 530.5H1111" stroke="#ffffff" stroke-width="1"/>
<path d="M778 532.5H1111" stroke="#b8601a" stroke-width="1"/>
<path d="M778 535.5H1111" stroke="#b8601a" stroke-width="1"/>
<path d="M778 541.5H1111" stroke="#b8601a" stroke-width="1"/>
<path d="M885.5 531V612" stroke="#b8601a" stroke-width="1"/>
<path d="M889.5 531V612" stroke="#b8601a" stroke-width="1"/>
<path d="M998.5 531V612" stroke="#b8601a" stroke-width="1"/>
<path d="M1002.5 531V612" stroke="#b8601a" stroke-width="1"/>
<path d="M779.5 532V602" stroke="#ffffff" stroke-width="1"/>
<path d="M1109.5 532V602" stroke="#ffffff" stroke-width="1"/>
<path d="M884.5 532V600" stroke="#ffffff" stroke-width="1"/>
<path d="M779 597.5H1110" stroke="#ffffff" stroke-width="1"/>
<path d="M779 601.5H1110" stroke="#ffffff" stroke-width="1"/>
<path d="M777 607.5H1111" stroke="#b8601a" stroke-width="1"/>
<path d="M777 610.5H1111" stroke="#b8601a" stroke-width="1"/>
<path d="M777 613.5H1111" stroke="#0c8a10" stroke-width="1"/>
<path d="M779 533.5H1110" stroke="#0c8a10" stroke-width="1"/>
<rect x="916.5" y="538.5" width="56" height="55" fill="none" stroke="#ffffff" stroke-width="1"/>
<rect x="896.5" y="542.5" width="28" height="54" fill="none" stroke="#ffffff" stroke-width="1"/>
<path d="M896 597.5H925M905 550V596" fill="none" stroke="#ffffff" stroke-width="1" />
<rect x="925.5" y="542.5" width="38" height="47" fill="none" stroke="#ffffff" stroke-width="1.4"/>
<path d="M929.5 545V587" stroke="#ffffff" stroke-width="1"/>
<path d="M932.5 545V587" stroke="#ffffff" stroke-width="1"/>
<path d="M935.5 545V587" stroke="#ffffff" stroke-width="1"/>
<path d="M938.5 545V587" stroke="#ffffff" stroke-width="1"/>
<path d="M941.5 545V587" stroke="#ffffff" stroke-width="1"/>
<path d="M944.5 545V587" stroke="#ffffff" stroke-width="1"/>
<path d="M947.5 545V587" stroke="#ffffff" stroke-width="1"/>
<path d="M950.5 545V587" stroke="#ffffff" stroke-width="1"/>
<path d="M953.5 545V587" stroke="#ffffff" stroke-width="1"/>
<path d="M956.5 545V587" stroke="#ffffff" stroke-width="1"/>
<path d="M959.5 545V587" stroke="#ffffff" stroke-width="1"/>
<rect x="937" y="548" width="15" height="38" fill="#000" stroke="#000" stroke-width="0"/>
</g>
<path d="M939 550h11M939 553h11M939 556h11M939 560h11M939 564h11M939 568h11M939 572h11M939 576h11" fill="none" stroke="#ffffff" stroke-width="1" stroke-dasharray="1 1.5"/>
<rect x="940" y="580" width="10" height="7" fill="none" stroke="#ffffff" stroke-width="1.2"/>
<rect x="942.5" y="584" width="5" height="6" fill="none" stroke="#ffffff" stroke-width="1"/>
<circle cx="920.5" cy="566" r="3.5" fill="none" stroke="#ffffff" stroke-width="1.2"/>
<circle cx="967.5" cy="566" r="3.5" fill="none" stroke="#ffffff" stroke-width="1.2"/>
<path d="M905 569.5H918" stroke="#ffffff" stroke-width="1"/>
<circle cx="979.5" cy="586" r="12" fill="none" stroke="#ffffff" stroke-width="1"/>
<circle cx="989" cy="549" r="8.5" fill="none" stroke="#00c896" stroke-width="2.2"/>
<circle cx="989" cy="549" r="4" fill="none" stroke="#00c896" stroke-width="1"/>
<path d="M793.3 559.1L796.8 560.6L797.2 555.6L800.8 560.8L802.3 553.4L804.3 561L807.2 556.6L807.4 562.2L811.6 558.4L811.4 562.6L817.1 559.8L812.5 566.3L819.3 564.8L815.6 568.8L821.1 569.7L815.6 572.5L821.3 574.9L813.7 575.7L818.4 579.3L813.9 579.5L816.5 583.8L812.6 583.2L812.9 587.2L809.4 585.8L808.5 589.4L805 584.2L803.7 591.1L801.7 585.5L798.7 590.1L797.6 586L794.3 587.8L794.4 583.7L788.8 586.3L792.5 580.3L786.7 581.2L789.1 577.7L784.7 576.3L791.3 573.4L786.4 571.3L792 570.2L786.7 566.3L793.2 567.2L788.4 561.3L794.3 563.7Z" fill="#00c896" fill-opacity=".93" stroke="#00c896" stroke-width=".8"/>
<path d="M798.6 584.3l1.8 -0.8M808.4 580.9l-1.5 3M800 562.3l0.8 1.4M814.1 583.7l-1.1 -1.5M799.5 569.5l-2.2 -0.1M814.6 581.7l-0.5 -2.5M809.8 585l-2.6 1.1M816.4 581.7l1.9 0M796.7 577.7l2.4 1.5M812.9 572.6l-0.3 2.8M804.9 583.7l-0.9 -2.2M805.9 577.3l-3.4 -0.9M808.2 570.1l-2.5 -0M807.8 585.9l-3.1 0.1M798.8 588.6l1 -2.2M810.5 582.2l2 2.1M798.8 560.8l1.6 -0.2M799.7 558.3l1.6 1.4M815.2 577.3l-0.4 -2.2M799.5 563.2l-0.5 -2M814.2 571.5l1.7 0M800.7 557.6l-1.2 -1.4M812.9 562.7l1.7 1.5M801.6 570.4l2.1 0.6M814.8 561.2l-1.4 3M806.5 557.8l-2.9 -1.8M792.9 560.2l-1.7 -0.8M791.3 571.6l-1.2 1.9M790.1 572.1l0.4 2M791 572.8l-2.5 1.4M807.9 584.4l-0.5 3M798.7 558.8l-2 -0.2M813.8 567.5l-1.5 1.5M791.4 581.2l1 -2.2M802 564.9l-2.1 0.7M799.4 582.6l0.1 -3M805.2 581.2l0.6 -2.7M797 561l-0.7 -1.9M812.6 576.8l3.4 0.7M789.4 570.9l3 -0.6M804.3 582.9l2.4 1.9M802 561.2l-1.4 1.5M788.8 574.1l2.5 -2M810.6 564.7l-1.9 1M810.5 571.8l1.1 1.7M816.7 565.7l-1.6 2.8M811.6 565.9l1.1 2.8M798.5 577.5l1.9 -1.4M792.6 580.8l-0.1 1.5M794.9 579.7l2.2 0.2M803.7 563.1l-1.2 -2.5M804.4 576.4l-1.2 -2.4M800.9 580.6l2 -2.6M804.4 585.9l-1.9 -1M812.6 575.2l-1.7 -2.1M796.6 572.6l0.5 2.1M794.1 578.2l1.4 -1" stroke="#001a10" stroke-width=".8" fill="none" opacity=".6"/>
<path d="M811.9 582.8L809.7 572.3L799.5 578.8L805 570.3L796.1 565.7L805.7 564.4L806.2 559L811.1 564L817.1 555.3L817.6 563.1L824.8 564.9L817.2 569.7L820.4 575.2L813.8 573.2L811.9 581.9M813.4 574.2L810.9 568.5L805.1 574.1L807.5 568L801.5 566.1L806.5 563.7L802.9 555.6L810.6 562.7L813.7 555.3L814.4 562.2L819.9 561.8L817.1 565.9L820.6 570.3L814.8 570.1L813.7 575.6M804.2 588.1L797.5 584.6L795.5 590.3L793.4 585.4L787.9 586.6L790.3 581.8L786.4 578.2L793.3 578.5L791.5 570.6L796.1 576.8L800.2 572.8L800.2 577.6L807.6 578.7L800.1 581.9L802 586.1M792.6 569.7L798.1 576.4L802.6 571.2L803.2 576.7L809 578.2L803.1 581.9L808.7 588.9L800 584.3L798.4 592.3L796.3 585.1L788.7 588.8L793.5 582L787 578.6L793.3 577.1L792.3 569.1M797.7 578L803.1 573.8L800.3 569.8L805.2 570.4L806.3 563.6L808.9 570.7L814.5 567.1L810.5 573.2L819.1 575.2L811.4 576.4L813.8 583.2L808.2 577.5L804.9 583.2L805.9 576.3L799.3 577.4" fill="none" stroke="#00c896" stroke-width="0.9" />
<path d="M832.2 542.1L831.3 547.7L837 545.2L832.9 551.2L840.2 550L834.8 554.3L838.8 555.9L835.1 558L838.5 560.8L833.3 561.1L838 566.3L831.6 564L833.3 569.1L829.2 566.7L829 571.8L826.1 570L823.9 574.7L821.8 569.8L818.1 574L818.5 567.1L813.3 570.6L815.9 564.3L809.1 566.6L812.2 562.1L807.4 561.1L813.3 557.8L809 555.7L811.2 553.7L808.9 550.3L813.9 550.3L811.1 545L817.6 548.7L816 542L820.3 546L821.2 539.9L824.1 545.5L826.6 541.8L828.4 544.4Z" fill="#00c896" fill-opacity=".93" stroke="#00c896" stroke-width=".8"/>
<path d="M821.5 569.8l1 -1.7M820.7 547.9l0.3 1.9M833 554.3l-2.5 -0.2M837 559.2l-0.1 -3.3M819.5 562.7l-1.7 2.4M818.6 548.8l-1.8 -0.3M833.2 551.9l-3.1 -0.1M828.1 569.2l-1.9 2.5M830.8 561.6l-1.6 -1.9M815.7 565.1l0.5 2.3M837.5 557.2l-0.1 3.2M812.8 553.2l-1.2 -1.2M825.4 548.7l2 -2.3M818 544.7l-2.6 1.1M830.6 555l1.9 1.4M817.7 556.6l0.6 3.2M819.2 561.1l1.1 2.4M827.9 566.8l-2.3 -0.6M810.2 556.7l3.3 0.4M825.2 560.7l0.3 -2.6M816.8 555.3l0.4 -2.1M822.9 549.5l-2.5 -1.2M816.7 564.6l2.6 1.1M821.7 551.1l-2.8 -0.9M835.1 565.2l1.1 -1.2M824.1 562l-0 1.7M816.2 557.5l-0.8 2.3M814.7 566.7l-0.3 -1.7M824.5 559.8l-0.8 1.5M819.6 544.4l1.9 -0.1M836.8 560l-2.9 1.8M817.2 562.4l3 1.5M813.9 556.2l-2.8 1.2M829.1 547.8l1 2.1M831.6 550.8l-1.4 -2.2M812.8 559.8l0.1 2.6M827.2 553.3l-2.2 2.4M827 556.6l-1.9 -2M829.8 548.3l1.4 1.5M821 544.4l0.8 2.7M817.2 546.7l2.4 0.3M818.7 567.5l-0.9 1.5M820 549.7l0.5 -2M811 553.1l2.2 2M837.3 563.1l2.9 0.5M819.4 562l-2 1.5" stroke="#001a10" stroke-width=".8" fill="none" opacity=".6"/>
<path d="M818.8 563L820.1 554L814.3 554.3L817.2 550.7L813.3 545.6L819.8 546.8L821.1 539.8L823.6 548.4L828.3 545.3L827.3 549.5L831.5 552L826.7 553.6L827.8 558.9L823.1 554.3L819.6 560.6M823.2 560.1L829.3 561.5L827.8 553.4L831.2 560L836 555.5L833.1 561.8L837.7 562.6L833.8 564.3L835.2 568L831.5 565.7L829.4 571.4L829.7 564.6L824.3 566.8L828.8 563.2L824 560.4M815 556.8L819.6 551.8L815.4 547.9L820.9 547.7L820 537.5L825 546.5L832.2 539.7L826.7 550L837.4 550.4L829.9 553.6L831.7 559.4L825.6 555.6L822.5 563L821.8 555L814.8 556.9M822.9 552.1L822 557.7L827.6 556.6L824.1 559.5L826.6 562.9L822.5 562.1L821.4 565.9L818.9 564.2L814.1 565.8L816.9 560.5L811.9 558.4L817.9 557.6L815.5 551.4L820 555.1L823 551.8M817 571.1L816.3 564.8L810.3 567.7L815.1 563L811.2 560.8L814.8 560.2L814.2 554.5L817.6 560.8L822.3 554L820 560.8L825 561.3L821.8 563.8L824 568.4L818.8 565.6L817.1 570.7" fill="none" stroke="#00c896" stroke-width="0.9" />
<path d="M850.2 592.4L846.3 588.7L844.4 593.2L841.9 589.2L839 591.7L837.8 587.6L834.4 589L834.4 585.1L829.3 586.7L831 582.3L826 582L829.6 578.2L826.6 576.3L829.6 573.9L826.3 571L832.3 570.5L828.7 566.2L832.8 566.2L831 560.9L835.9 563.3L836.2 558.5L840.4 564.2L841.8 558.9L844 562.4L846.8 559.2L847.5 564.2L851.3 561.4L850.2 566.6L856.7 563.3L852.6 569.1L860.1 568L854.4 572.3L861.4 573.6L854.6 575.9L859 578.9L854 579.6L856.3 583.2L852.2 582.9L853.9 587.9L848.5 584Z" fill="#00c896" fill-opacity=".93" stroke="#00c896" stroke-width=".8"/>
<path d="M849.4 567.4l3.4 0M844.1 583.2l1.7 0.3M839.9 563.1l-2 -0.1M839.4 590.2l-2.4 2.5M847.7 571l0.9 -1.3M839.5 561.1l-0.9 -2.4M845.6 568.8l-2 -0.5M837.1 579.4l-0.7 -2.6M845.3 562.5l-2.7 -2M847.6 563.8l-1.5 3M839.1 579.1l-1.5 2.5M854.7 569.6l-1.8 -2.9M844.9 564.4l-2.9 0.7M840.6 580.3l-2.3 -2.1M843.1 588.2l1.4 -1.1M850.4 583.5l-1.7 2.9M853.8 574.8l0.7 -2.7M850.3 588.9l0.8 1.5M839.7 576l-2.3 0.3M853 572l1.8 -2.5M836.1 570.8l-0.8 2.3M832.8 582.9l-2.1 -0.1M830.6 565.1l0.6 2.1M848.5 575.4l2.2 0.8M849.9 563.6l3.1 -0.7M832.5 568.7l2.3 0.2M842.1 587.6l2.4 1M835 583l-1.4 1M841.3 560.8l-1.4 -1M830.9 566.3l3 -0.3M857.3 579.2l-1 -1.8M855.7 568l1.6 -1.2M834.1 570.3l-0.9 2.9M836 568.7l-3.2 -0.9M829.1 568.8l-3.2 -1.4M853.8 577l-2.8 -1M855.4 572.5l-2.7 0.4M829.9 572.2l1.4 -0.5M836.6 588.5l2.9 1.1M855.7 577.5l0.6 -1.9M837.2 580.4l-0.7 -2.5M835.6 569.3l-2.9 -1.8M845.8 559.7l0 2.5M835.8 581.3l0.6 -1.7M829.9 570l1.4 -0.6M841.5 586.2l1.7 -0.7M848.5 566.4l-3.2 -1M851.6 578.7l1 1.5M838.6 587.6l-1.5 -0.8M846.6 564.1l2 2.5M846.3 568l2.9 -1.2" stroke="#001a10" stroke-width=".8" fill="none" opacity=".6"/>
<path d="M843.5 557.4L844.7 562.3L852.2 564.2L847 569L847.8 574.7L842.1 574.6L838.3 578.9L835.4 573.1L826.5 576.1L833.4 567.9L827.4 564L834.9 563.8L832.3 553L838.8 560.4L845.1 554.2M847 557.5L847.5 566.1L857.6 561.2L851.7 568.1L855.8 572.2L848.2 571.2L850.8 582.7L845.5 571.9L838.5 580.8L842.6 570.9L835.8 570.1L841.5 567.4L835.3 558.6L844.2 564.3L846.8 559.1M837.2 557L841.7 565L846.9 562.7L844.3 568.9L851.7 570.8L845.4 573.2L847.6 579.8L841.6 575.8L837.5 583.9L837.3 574.7L826.9 577.4L833.3 570.8L828.7 565.2L836.6 566L837.9 559.9M843.2 585.1L837.6 582.3L833 586.2L831.1 580.8L825.6 579.2L832.7 574.7L824.7 568L832.3 568.7L835 563.8L838 570.4L844.9 566.2L842.3 572.9L851.3 576.3L842.6 578.6L844.9 587.6M844.9 573.8L842.2 580L850.5 583.1L842.2 584.9L844.5 593L837.7 586L833.6 592.7L834.4 584.7L824.8 586.4L832.4 581.4L825 574.5L835.2 578.8L835.7 570.8L839.1 576L846.8 571.8" fill="none" stroke="#00c896" stroke-width="0.9" />
<path d="M861.9 539.8L866.8 542.8L866.7 537.9L869.7 540.1L871.4 535.3L873.5 540.2L877.2 534.9L877 541.5L881.2 539.1L880 543.8L884.2 543.3L883.6 546.3L887.4 547.7L883.2 550.6L887.1 553.1L881.7 554.1L885.2 558L880.7 557.8L882.3 562.3L878.7 561.7L877.9 565.5L874.1 560.8L872.5 565.1L870.7 560.8L867.4 565.3L866.4 561.6L861.8 564.2L864.5 557.8L858.2 559.7L862 555.1L856.8 554.3L860.8 551.4L858.1 549.1L862.9 548.1L857.9 543.5L862.8 543.8Z" fill="#00c896" fill-opacity=".93" stroke="#00c896" stroke-width=".8"/>
<path d="M862 560.3l0.9 -1.9M881.8 555.4l-1.1 -1.6M881.7 553.7l2.9 0.6M866.5 545.5l-1.9 0.7M874.5 556.9l1 -2.2M870.1 542.6l0.9 -2.5M866.8 543.5l-1.7 -0.7M883.6 549.1l-2.7 -0.6M878.8 556l0.4 3.2M881.6 551.8l2.1 -2.3M870.4 543.1l0.3 2.9M868.3 562.6l-1.8 2.4M860.4 545.3l2.2 -0.2M874.8 550.8l1.1 -1.1M863.3 548.5l0.3 -2.1M875.3 563.2l-2.9 -0.9M868.4 551.2l0.3 -1.9M869.6 551.4l-0.2 2.8M873 539.6l-2.8 1M868.7 545.1l-2.6 -0.6M871.1 544.4l-0.8 2M879.1 555.9l-0.3 -2.6M877.7 561.8l2.2 2M875 555l-0 2.5M870.3 564.3l1.9 -0.8M872 539.1l-1.9 -0.8M885.2 546.7l2.2 0.2M869.1 557l-3 1.4M884.9 552.9l-0.6 1.4M878.2 546.5l0.4 1.7M868.4 555l0.9 1.8M863.5 546.4l-0.9 2.4M873.8 539l-1.8 2.8M874.8 540.6l-2.1 0.3M880.9 561l-1.3 -1.1M884 544.9l2.8 0.6M872.8 561.5l1.1 -1.9M860.3 551.1l1 2.6M859.4 557.4l1.1 2.7M879.5 553l1.3 1.2M865.8 549.9l0.5 -1.6" stroke="#001a10" stroke-width=".8" fill="none" opacity=".6"/>
<path d="M875.5 564.3L872.9 559.8L869.4 561.5L870.6 557.7L867 556.1L869.2 553.9L869.9 551.2L873 552.4L875.2 550.4L876.7 552.8L881.2 552.8L876.5 556.3L881.7 560.3L875.2 558.1L875.4 564.2M869.4 546.6L871.5 549.2L877.4 547.3L873.5 552.7L877.3 555.5L871.8 555.6L873.2 561.8L869.3 556.6L865.1 562.5L865.9 556.4L858.7 556.1L865.2 552.7L861.6 547.5L867.3 549.4L869.4 546.7M881.7 541.8L880.5 548L886.9 547.7L880.4 550.5L888.2 557.4L880.3 554L878.5 558.6L875.7 555.8L870.3 557L875.4 550.9L866.2 547.9L876.2 548.7L874.3 543L877.9 545.2L883 538.9M874.6 547.9L877.2 552L880.6 548.5L879.5 552.7L885 553.4L879.3 555.2L881.3 558.6L878 557.2L876.2 561.4L874.9 557.7L871.1 558.1L873.4 554.8L871.9 552.7L875.3 552.8L875 549" fill="none" stroke="#00c896" stroke-width="0.9" />
<path d="M878.1 578.3L878.6 575.5L874.9 574L877.9 571.3L874.2 568.5L879.1 567.2L875.7 563.1L882.2 564.4L879.2 558.6L885 562.2L884.1 556L887.8 559.4L889.2 553.8L891.7 560.5L894.6 555.5L895.9 559.1L900.2 556.3L899.9 560.9L902.8 561.5L900.3 565.7L905.2 565.8L903.3 568.7L908.2 570.7L903.1 572.8L907.5 576.3L901.4 576.4L904.3 580.9L900.1 580.5L900.5 584.9L896.1 582.1L895.4 587.1L892.2 582.6L889.9 588.2L888.3 582.7L885.2 585L884.9 580.7L880.3 583.1L882.1 578.2Z" fill="#00c896" fill-opacity=".93" stroke="#00c896" stroke-width=".8"/>
<path d="M882.4 567.5l-1.8 1.5M880.7 581.7l1.3 0.8M889.3 561.5l-2.5 0.8M885.8 576.7l3.2 0.3M898.7 567.9l-2.1 0.5M904.3 576.1l1 -1.7M890.6 583.7l0.7 -2.3M885.2 575.9l1 -3.1M894.5 566.6l-2.9 -1.9M888.7 560.9l1 1.3M890.5 566.4l1 -2.6M877 573.4l2.5 -1.1M900.5 577.8l-1.8 1M902.7 565.4l1.4 1.4M884.7 580.6l-1.1 2.1M893.6 564.7l-0.4 -2.1M904.8 566l-1.3 2.4M898.6 577.3l-2 -1.9M888.9 574.1l1.9 1.8M895.1 578.6l-2.4 -2.2M883.1 570.2l-1.8 -1.1M892.3 564.7l-0.2 2.4M896.5 567.4l0.6 1.6M893 579.7l-2.4 1.8M882.3 577l-2.4 1.8M899.2 565.3l1.8 -1M901.9 569.5l-0.9 -2.1M890.2 577l1.7 -1.5M887.7 561.1l-1.9 -0.3M895 579l-1.1 -2.4M903.8 571.2l-1.5 0.7M890.5 578.3l1.1 -2.3M887.4 577.9l-0.5 2M883.4 582.1l0.7 -2.8M900.2 562.9l1.2 1M895.1 577.8l-3.1 -0.6M882.4 565.8l0.2 3.5M891.2 562l3.3 1M890.5 584.9l2.1 1.9M882.2 582.2l-0.5 1.6M895.3 583.9l2.8 -0.4M887.6 563.5l-0.2 1.7M895 570.6l-1.7 -1.4M894.9 580.3l1.8 -0.8M897.2 581.4l-1.4 -2.1M897 583.8l1.4 1.2" stroke="#001a10" stroke-width=".8" fill="none" opacity=".6"/>
<path d="M876.6 567.6L883.1 567.3L884.4 563.8L887.5 567L891.9 563.5L889.7 569.5L898.2 569.9L889.5 572.1L895.2 579.4L888.4 575L885.8 582L884.4 575.5L879.9 575.7L882.7 571.7L879.2 568.5M879.9 574.8L882.7 570.4L877.1 568L884.2 568.3L881.4 561.3L885.6 564.4L889.2 561.4L888.7 566.9L893.6 567.3L887.8 569.8L891 573.2L887.7 573L886.2 576.9L884.8 572.1L879.4 575.1M891.3 585.1L890.2 580.1L884.2 578.5L891.7 574.8L884.1 566.9L892.9 570.3L895.2 564L897.4 571.4L906.2 566.6L901.9 573.9L908.9 578.2L900.1 579L902 588L895.7 580.8L891 585.8M903.5 579.5L899.2 579.1L898.4 585.7L895.7 579.4L890.7 582.2L893.6 576.9L889.7 575L893.3 573.5L892.8 569.5L896.3 571.1L900 565.9L900.5 571.8L903.5 573.1L898.9 575.8L905.6 580.7" fill="none" stroke="#00c896" stroke-width="0.9" />
<path d="M862.3 571L859.2 569.8L857.7 572L855.5 569.9L852.7 573.3L851.9 569.3L848.8 569.9L849.7 566.5L846.3 565.9L847.2 563.4L844.5 561.3L848.1 559.7L846.8 556.9L849.8 556.4L849.7 553.1L852.8 554.1L854.3 551.5L856.5 553.3L859.2 551.1L859.7 555.3L863.4 553.8L863 557.1L866.2 557.8L864.8 560.6L865.8 562.6L864.4 564.5L865.9 567.6L861.8 567.2Z" fill="#00c896" fill-opacity=".93" stroke="#00c896" stroke-width=".8"/>
<path d="M858.5 558.6l-1.5 2.5M858.8 556.4l2.8 -0.1M859.7 563.1l2.3 1.2M853.7 566.8l-1.6 0.5M863.7 557l-2.2 -0.9M853.2 569.3l-2 2.8M864.3 559.7l0.8 -1.5M860.3 566.2l1.6 1.7M865.2 561.2l1.9 -0.5M856.4 564.2l-0.2 1.6M850.4 561l-1.2 -2.3M851.4 558.7l-0.3 -2.9M854.4 555.2l-2 0.5M862.7 563.7l-1.4 -1.2M862 554.7l1.9 -2.5M851.5 562.3l-0.4 2.9M859.7 561.6l2.2 0.1M851.4 568.4l2.4 2.1M851 570.2l-1 1.9M860.4 570.8l-2.7 -1.7" stroke="#001a10" stroke-width=".8" fill="none" opacity=".6"/>
<path d="M860.7 561.5L853.5 563.1L858.2 569.2L852.8 566.3L850.7 569.2L850.2 564.5L845.7 566.1L848.3 562.8L844 559.7L847.8 558.6L848.6 553.9L851.9 559.5L854.7 557.4L854.6 560.5L858.3 561.7M853.1 557L855 561L857.3 559.2L856.9 561.6L859.4 562.7L856.4 563.6L858.8 567.7L855.3 565.4L853.4 569.6L852.7 565.5L850.2 565.2L851.7 563L848.9 560.4L852.6 560.4L853.2 557.6M859.3 562.2L858.9 564.5L861.2 565.6L859.3 566.9L859.5 569.3L857.1 567.8L855.4 570.7L855.9 566.4L851.1 568.2L855.2 565.6L851 562.8L854.4 562.8L855.6 561L857 564.1L860.2 561.1M855.2 563.8L853.4 560.2L850.8 560.6L852.1 557.8L849 556.3L852 555.3L851.6 551.9L854.4 554.8L856.6 552L856.6 555.2L860.3 555.3L857.5 557.5L859 560L856.1 559.6L855.2 564.7" fill="none" stroke="#00c896" stroke-width="0.9" />
<circle cx="1025.5" cy="544.5" r="10.3" fill="#00c896" stroke="#00c896" stroke-width="0"/>
<circle cx="1057.5" cy="548" r="10.9" fill="#00c896" stroke="#00c896" stroke-width="0"/>
<circle cx="1091" cy="547" r="10.3" fill="#00c896" stroke="#00c896" stroke-width="0"/>
<path d="M1033.5 565.9L1030.3 565.3L1030 567.9L1027.4 565.6L1026.1 569.3L1024.5 566.9L1022.2 568.2L1022 565.1L1018.7 566L1020 563L1017.3 562.1L1020.1 560.1L1017.2 558.1L1020 557.2L1018.2 554L1021.3 554.2L1021.9 551.8L1024.6 554L1025.9 551.4L1027.4 553.4L1030 551.4L1029.7 555.3L1033.3 554L1032.7 556.7L1034.7 557.9L1033.4 559.9L1034.8 561.9L1032.2 562.9Z" fill="#00c896" fill-opacity=".93" stroke="#00c896" stroke-width=".8"/>
<path d="M1028.7 557l-2 2.9M1030.4 561.9l-3 0.4M1020.5 554.1l-0.7 -1.3M1027.9 560.9l-1.4 0.6M1019.4 558.9l0.9 3.1M1019 564.2l-1.7 2.1M1021.7 558.8l0.3 -1.5M1026 564.9l1.8 -1.7M1030.6 561.1l-2.4 -2M1031.7 564.7l-2 1.6M1021 562.7l3.3 -0.2M1032.3 556.4l-0.5 -1.7M1033.5 561.7l-1.3 -2.4M1024.3 564.1l2.3 -1.2" stroke="#001a10" stroke-width=".8" fill="none" opacity=".6"/>
<path d="M1027.6 561.2L1024 561.2L1022.9 562.4L1021.6 560.3L1018.5 563.1L1019.2 560L1016.1 558.8L1020.8 558.2L1019.2 555.5L1021.1 555.5L1022.9 553.6L1023.1 557.1L1025.6 556.7L1023.3 558.6L1027.6 561.2M1018.1 558.4L1022.9 558.9L1023.9 554.3L1025.9 560.3L1029.2 558L1027.3 561.5L1033.4 562.8L1026.8 563.2L1028.5 566.8L1025.9 566.2L1023.2 569.3L1023.1 564.7L1019.6 564.7L1022.4 562.1L1018.9 558.8M1028.7 551.3L1030.3 555.8L1033.3 554.6L1031 557.8L1034.9 559.2L1031 559.5L1033.1 564.9L1029.5 561.1L1026.6 565.4L1026.5 561L1023.6 560.2L1026.4 558L1024.3 555L1028.1 556.3L1028.7 551.2M1025.9 557L1028.2 556.4L1026.9 553.3L1029.2 554.4L1031.1 552.3L1031.3 555.4L1033.9 555.5L1031.2 557.3L1034.5 559.8L1030.4 558.1L1030.4 561.3L1029.2 559L1027.2 560L1028.2 557.8L1025.4 557" fill="none" stroke="#00c896" stroke-width="0.9" />
<path d="M1051.7 568.8L1053.2 565.7L1049.7 565.5L1052 563.4L1049.3 561.6L1052.1 560.6L1050.7 558L1053.8 558.5L1053.9 555.8L1055.9 556.1L1057.3 553.5L1059 556.6L1061 555.4L1061.4 558.1L1065.2 556.4L1063.6 559.8L1066.2 560.5L1065.1 562.5L1067.7 564.5L1063.3 565.1L1065.5 568.2L1062.5 567.9L1062.2 570.3L1059.8 568.9L1058.6 572.3L1056.9 569.8L1054.5 571.7L1054.2 568.5Z" fill="#00c896" fill-opacity=".93" stroke="#00c896" stroke-width=".8"/>
<path d="M1056.1 564.8l3.2 0.3M1063.3 557l2.7 1.4M1060.4 567.5l1 3.1M1061.2 556.1l-2.5 2.3M1057.6 569.4l-0.9 -1.7M1055.8 565l0.5 -1.8M1061 566.4l-1.8 -2.1M1050.3 561.8l0 -1.9M1054.4 562.2l0.1 1.8M1062.5 565.4l2.1 -1.8M1061.5 565.2l-2.1 -1.4M1060.9 563.5l-2.5 -1.1M1064.5 566.6l0.2 2.7M1053.1 562.1l2.2 -0.8" stroke="#001a10" stroke-width=".8" fill="none" opacity=".6"/>
<path d="M1065 562.7L1060.4 564.5L1062.3 568.6L1058.8 568L1056.3 570.9L1056.1 565.2L1051.6 566.7L1054.8 563.5L1051.8 561.2L1055 560.9L1055.4 557.1L1057.9 559.7L1062 556.4L1061.3 561L1063.4 562.9M1053.1 565.1L1057.6 562.8L1053.3 559.1L1058.3 561.2L1058.7 555.9L1060 561.4L1064.4 558.1L1062 562.1L1066.6 563.8L1061.4 564.2L1062.4 567.7L1059.9 566.8L1057.3 569L1057.7 564.7L1051.9 565.6M1060.2 568L1058.3 566.9L1057.4 569.2L1056.7 567.4L1054.4 567.5L1055.5 565.7L1054.2 564L1056.6 564.1L1057.1 562.6L1058.3 563.2L1060.3 562.2L1059 564.9L1061.6 565.3L1059.5 566.2L1061.1 569M1058 567.2L1055.9 564.5L1053.1 565.4L1054.5 562.1L1051.3 560.8L1054.1 559.6L1052.4 554.8L1056.4 558.1L1059.1 553.2L1058.9 558.8L1063.2 558.4L1060.8 561.3L1062.3 564.1L1058.1 562.8L1057.8 566.5" fill="none" stroke="#00c896" stroke-width="0.9" />
<path d="M1095 569.4L1092.1 567.3L1090.9 570.7L1089.2 566.8L1086.8 569.5L1086.5 566.4L1083.9 566.8L1084.8 564.1L1080.6 564.1L1083.1 561.6L1081 559.8L1083.7 558.7L1081.9 555.6L1084.9 555.7L1085.2 553.1L1088.3 555.7L1089.1 551.3L1090.8 555.2L1093 552.9L1093.2 556.2L1096.6 554.7L1095.7 557.6L1098.6 558.2L1096.4 560.4L1098.4 562.1L1096.5 563.4L1097.7 566L1094.2 565.4Z" fill="#00c896" fill-opacity=".93" stroke="#00c896" stroke-width=".8"/>
<path d="M1094.1 554l3.1 -1.6M1094.8 563.2l-1.9 0.6M1089.7 553l1.6 1.9M1097.7 559.4l-1.6 0.5M1084.1 562.7l0.4 -1.8M1088.5 569.2l2.7 0.2M1096 565.1l-3 1.5M1091.3 568.7l0.2 1.6M1092.3 562.4l-2.6 2.2M1085.6 566.6l2.5 0.5M1087.1 560.3l-2.1 -1.2M1086.4 567.8l-0.6 -1.6M1091.9 562.5l-0.2 2.8M1098.1 559.4l1.2 -1.3" stroke="#001a10" stroke-width=".8" fill="none" opacity=".6"/>
<path d="M1098.3 563.1L1093.8 563.8L1095.5 566.7L1093.2 565.9L1091.3 569.6L1091.8 564.1L1086.5 566.3L1090.8 563.3L1086.6 560.6L1091.3 561.9L1090.8 556.9L1093 560.7L1095.1 559.8L1094.9 562L1098.7 563.1M1088 554.6L1090 556.5L1091.6 552.6L1091.4 556.3L1095.4 555.6L1092 557.8L1094.3 560L1091.5 559.7L1090.9 562.2L1089.4 560.2L1086.8 561.4L1088.7 558.3L1085.9 557.4L1088.3 556.7L1088.1 554.7M1092.6 554.1L1092 557.8L1095.2 558.2L1092.6 560L1094.2 562.6L1091.4 562.2L1090.1 565L1089.1 561.5L1084.6 563.9L1087.1 560.1L1085.4 558.4L1088.3 558.1L1087 553.2L1090 556.7L1092.5 554.2M1092.8 552.7L1092.8 556.6L1095.6 556.2L1092.9 558.1L1096.5 560.5L1093.3 560.3L1092.7 563.2L1090.9 560.9L1088.3 562.1L1090 558.9L1085.4 558.1L1090.1 557.4L1088.6 554.3L1091.2 556.4L1092.7 553.1" fill="none" stroke="#00c896" stroke-width="0.9" />
<path d="M1001.4 572.6L1006.1 569.8L1004.1 567.3L1009.2 566.6L1004.2 561.7L1009.4 562.5L1008 557.6L1012.7 560.3L1013.5 556.7L1016.3 559.2L1018.3 553.5L1020.2 558.8L1023.1 556.9L1023.1 561.6L1029 557.4L1026.7 563L1030.7 563L1029.1 566.2L1034.6 567.4L1030.3 570.2L1033.6 573.1L1029.3 574.4L1030.2 577.4L1026.2 577.2L1028.3 582.8L1023.1 579.2L1022.6 583.6L1019.9 582.1L1017.7 586.1L1016.2 579.2L1012.9 583.2L1012.2 579.6L1006.9 582.7L1009.1 577.2L1003.4 578L1008.8 573.1Z" fill="#00c896" fill-opacity=".93" stroke="#00c896" stroke-width=".8"/>
<path d="M1012.3 567l-0.9 1.6M1014.2 570.9l-1.5 -2.3M1028.3 562.9l2.9 1.5M1004.7 566.3l-1.7 0.1M1016.2 564l2.6 -0.3M1026.3 564.2l-1.3 2.5M1015.5 560.5l-0.4 2.3M1016.4 563.1l1.4 2.1M1015.6 566.4l-0.5 3.4M1016.7 582.5l-0.6 1.6M1004.8 571.1l0.3 -1.6M1014.7 559.2l-2.8 0.3M1011.6 569.1l-0.6 -1.7M1013.2 582.2l-2.3 -1M1015.5 560.2l-1.9 1.7M1026.6 571.2l3.4 0.9M1027.7 563.7l1.8 2.7M1015.4 582.5l-1.6 -2.2M1017.6 562.4l1.3 -2.2M1018.6 556.9l-0.1 2.3M1015.1 573.5l2 -2M1007.4 570.7l1.2 -1.1M1010.6 579.2l-2.4 -0.5M1017.6 577l-1 -1.9M1030.5 564.8l2 -0.4M1012.9 569.5l-1 1.3M1004.1 569.9l0.2 -2.2M1015.7 583.6l3 1M1020.7 566.5l2.7 -0.8M1010.8 576.1l-2 -1.6M1027.1 560l-0.7 1.3M1020.1 558.7l-0.9 -1.4M1030 576.2l-1.6 1.8M1024.5 568.9l-1.1 -1.2M1006.6 565.4l1.7 2.5M1030.7 567.5l0.9 -3.3M1015.8 559.6l1.4 -2.8M1009.9 561.5l0.9 2M1012 581.8l0.4 -2M1022.2 569.8l2 0.8M1030.3 576.5l-1.4 1.8" stroke="#001a10" stroke-width=".8" fill="none" opacity=".6"/>
<path d="M1013.7 574.2L1017.8 570.1L1014.1 565.3L1021.1 567.5L1021.8 561.9L1024.6 565.7L1029.9 563.1L1026.3 569.2L1031.7 571.1L1027.1 572.7L1029.4 579.6L1023.6 573.2L1020.3 580L1019.7 574.3L1013.9 574.2M1023.4 568.2L1019.1 570.7L1022.9 574.6L1018.2 573.1L1017.2 579.2L1015.2 573.8L1011.1 575.4L1013.7 571.2L1008.3 569L1014 568.5L1012.6 563.4L1016.3 566.6L1019.5 562.8L1019.6 567.6L1025 567.7M1020.7 568.9L1017.5 566.4L1015.3 570.5L1014.6 566.8L1011.1 566.6L1015.1 563.9L1009.9 560.4L1015.2 561.7L1015.3 555.8L1017.8 560.7L1021.9 558.1L1020.1 562.6L1022.9 564.1L1019.9 565.5L1021.1 569.4M1026.9 556.1L1023.9 562.3L1029.9 564.4L1022.7 565.4L1027.2 573.8L1021.1 569.7L1016.5 577.1L1015.1 569.7L1008.2 569.1L1017.6 563.9L1008 557.6L1016.2 558.7L1017.9 552.4L1021.2 559.8L1026.1 557" fill="none" stroke="#00c896" stroke-width="0.9" />
<path d="M1017.5 582.1L1022.4 581.9L1018.7 576.6L1023.7 578.3L1023.2 573L1027.4 577.2L1028.7 572.2L1030.9 577L1034.3 572.1L1034.2 578.2L1039 575.2L1037.7 579.8L1041.7 579.9L1038.1 583.6L1043.6 584.7L1039.8 587L1043.9 590.3L1037.8 590.2L1039.8 594.2L1035.8 593.1L1036.7 598.8L1032.5 594.6L1031.3 600L1029.1 594.3L1026.3 598L1025.1 595.1L1021.3 596.5L1023.3 591.4L1018 592.3L1019.4 589.2L1016.7 587.2L1020.1 585Z" fill="#00c896" fill-opacity=".93" stroke="#00c896" stroke-width=".8"/>
<path d="M1022.1 590.3l3.1 0.9M1023.3 582.4l-0.4 1.8M1040.6 581.3l-2 1.9M1024.4 584.1l2.9 0.6M1035 594.1l1.5 0.2M1035.2 594.8l-2.6 -2.3M1025.1 578.2l3.4 0.3M1018.4 586.8l3.1 0.8M1023.9 586.9l-1.4 0.9M1024.6 583l-0.6 -1.8M1026.3 576.8l-0.8 -3.3M1027.1 596l-2.6 2M1035 576.2l-1.6 -1.2M1040.3 579.2l2.1 -0.7M1034.5 576.6l1.7 -2.6M1022.3 588.3l0.8 -2.7M1018.6 583.1l1.5 0.3M1025.7 587l0.9 -1.4M1034.6 581.8l2 2.2M1026.4 578.6l-2.1 -1.5M1038.6 583.1l-2.3 -0.6M1021.1 591.5l2.2 1.9M1039.9 581.2l-2.1 -0.6M1033.5 588.5l-3.2 -0.8M1033.8 581.7l-0 -3.1M1018.4 587.5l0.8 2M1019.3 585l-2 0.7M1035.4 580l-1.7 0.9M1019.5 587.1l-1.8 2.2M1027.5 586.1l2 -0.5M1018.2 582.5l0.4 1.6M1031.5 591.1l1.5 -2" stroke="#001a10" stroke-width=".8" fill="none" opacity=".6"/>
<path d="M1027.7 589.9L1024.3 587.8L1021.1 589.9L1021.7 585.1L1015.8 585.2L1020.9 582.4L1017.2 577.8L1022.6 580.1L1023.9 574.1L1026.2 578.5L1029.7 578.4L1027 582.3L1033.6 585L1025.9 584.4L1027.6 589.9M1029.2 581L1030.9 587.8L1035.8 585.4L1033.1 589.8L1038.8 592.5L1032.1 592.6L1033 597.3L1029.7 594.4L1025.3 600.6L1026.6 593.4L1022.9 592.6L1025.3 590L1024.1 586.7L1027.8 587.4L1029.2 581M1030.2 585L1025.4 583.8L1024.8 588.8L1022.1 586.2L1019.2 585.9L1018.8 583L1015.8 580.5L1021.2 579.7L1019.7 575.3L1023.4 579L1026.1 573.5L1025.8 578.9L1031.1 578.3L1027 581.4L1031.4 585.7M1027.8 581.3L1030.5 584L1033.2 582.7L1032.5 586.2L1035.6 587.1L1033.3 588.8L1035.6 593.2L1031 590.1L1029.3 594.7L1028.6 590.2L1024.1 591.5L1027.6 588L1024.2 585.6L1028.7 586.3L1027.3 579.8" fill="none" stroke="#00c896" stroke-width="0.9" />
<path d="M1038.5 591.3L1040.3 586L1036.5 585.9L1038.9 582.2L1035.5 580.9L1036.7 578.4L1033.3 575.8L1040.2 575L1035.3 570.6L1040.6 571.1L1038.1 565.9L1043.7 569L1042.4 562L1046.6 566.3L1048.3 563.1L1050.7 565.2L1053.8 560.8L1054.1 567.8L1058.9 563.4L1058.5 568.2L1063.6 566.7L1058.8 572.9L1066.3 571.8L1060.6 575.9L1067.3 577.4L1062.3 579.6L1065.5 582.8L1061.8 583.9L1064 588.2L1059.4 587.6L1060.2 592.6L1055.2 588.8L1054.7 594.5L1051.4 590.2L1049.2 594L1047.5 589.4L1043.9 593.2L1044.4 587.1Z" fill="#00c896" fill-opacity=".93" stroke="#00c896" stroke-width=".8"/>
<path d="M1049 591.8l1.6 -2.4M1045.9 567.9l-2.5 -1.3M1060.2 578.5l1.9 -0.4M1045.2 579l-0.1 3.1M1063.2 580.8l1 -3.1M1049.3 592.5l-1.7 1.7M1060.7 574.6l-0.7 -1.6M1058 578.2l2.5 1.9M1050 592.7l-0.8 -1.7M1047.9 569.5l-1.6 -0.3M1056.7 566.4l-2.5 -1.4M1046.9 583l-1.4 2.7M1044.5 575.7l0.1 2.4M1054 578.4l-1.7 0.5M1054.5 574.2l-0 -3.1M1045.5 588.3l2.7 -0.1M1038.7 587.7l-0.2 3.4M1046.3 587.3l-1.1 2.6M1059.3 569.5l1.4 3.2M1048.1 567.3l1 -1.4M1039.1 570.3l0.5 -2.8M1059.8 582.1l-0.3 2.7M1041.8 584.2l-2.6 -0.6M1056.4 572.7l-0.3 1.8M1060.6 587l1.5 -0.8M1040.8 589l2.3 -2.6M1058.6 577.6l1.8 0.8M1046.9 578l-0.1 2.4M1047.3 572.2l1.5 1.5M1054.9 581.1l2.5 1.9M1052.9 575.3l1.1 -3M1045 571.1l0.7 -1.5M1064.1 582.2l0.6 3.3M1050.1 573.9l2.3 1.6M1057.5 587.8l-0.9 -1.7M1042.8 579.1l1.9 -2M1045.7 566.8l3 1.2M1052 567.2l-2.1 -1.3M1050.4 566.9l-0.4 2.5M1050.6 580.7l-3.2 -0.4M1048.6 570.9l-2.7 -0.1M1040.9 573l-2.9 -0.2M1058 570.6l0.6 -2.8M1055.8 583.4l-0.9 2M1041.6 578.5l3 -0M1041.3 587.2l1.6 -0.8" stroke="#001a10" stroke-width=".8" fill="none" opacity=".6"/>
<path d="M1059.6 577.6L1054.7 584.2L1062.6 586.4L1054.9 586.9L1056.8 592.9L1052.5 590.6L1048.2 595.5L1049 587.9L1043.7 587.9L1050 584.8L1044.7 580.4L1050.5 582.6L1051.2 577.3L1053.5 581L1057.9 579.3M1057.1 568.6L1055.9 573.4L1059.2 574.6L1055.7 576.3L1059.1 581.4L1054 578.6L1052.3 581L1051.6 577.4L1045.5 580.1L1050.6 575.6L1047.4 573.5L1049.5 572.1L1050.1 567.7L1053.2 572.2L1056.2 570M1045.3 584.7L1042.6 583.7L1039.6 584.7L1039.9 580.9L1036.7 579.8L1039.8 577.9L1038.4 574.7L1041.4 575.1L1043.4 570.3L1044 576.9L1047.9 575.3L1046.6 578.2L1051 581.2L1044.5 580.2L1045.4 584.8M1054.4 574.9L1056.2 578.3L1061.4 574.5L1059.4 579.5L1062.2 581.6L1057.4 582.2L1060.3 588.3L1055.8 583.4L1052.7 590.2L1053.4 583.4L1047.5 584.3L1050.5 580.8L1048.4 577.2L1053.1 577.7L1054.4 575" fill="none" stroke="#00c896" stroke-width="0.9" />
<path d="M1057.9 568.8L1063.8 568.8L1060.1 564.2L1066.1 566.1L1063.7 560.6L1067.6 562.2L1067 556.1L1071.5 561.7L1072.4 554.7L1075.1 562.5L1077.8 556L1079.1 560.6L1083.2 556.6L1081.9 563.5L1086.3 561.3L1086.3 564.4L1090.7 564.1L1087.4 568.5L1092 569.2L1086.4 572.5L1093.5 574.2L1087.5 575.9L1093.8 579.7L1087.4 579.8L1091 584.5L1085 582.8L1087.4 588.6L1081.1 583.8L1083.1 592.3L1078.6 586.8L1077.5 592.4L1074.9 585.8L1072.5 590.5L1071 587.2L1066.9 591.2L1067.5 585.4L1063.5 587L1065.1 582.4L1058.8 584.2L1062.6 579.5L1056.1 579.4L1063.7 575.5L1055.8 573.8L1064.1 572.3Z" fill="#00c896" fill-opacity=".93" stroke="#00c896" stroke-width=".8"/>
<path d="M1066.2 565.2l2.1 1M1067.3 560.4l2.2 1.2M1076.8 567.9l2.6 -2.1M1070.6 580.7l1.2 1.5M1062.6 580.9l2.4 -1M1085.7 570.8l-0.8 -1.3M1071.7 575.8l2.1 2.3M1082.1 580.2l-2.5 -0.4M1081.1 575.2l-1 -2.1M1084.8 580.4l-2.4 2.5M1082.2 576.2l2.3 1.2M1089.4 570.4l2 1.7M1064.6 586.9l-0.7 -2.6M1074.5 585.2l-2.2 -0.4M1069.8 571.8l-3.1 1.7M1065.3 581.1l0.1 -3.1M1074.1 563.5l-0.5 -1.8M1072.4 571.6l0.7 1.7M1066.4 585.6l3.2 0.4M1088.7 582.9l2.6 -0.9M1083.7 560.3l-3 1M1089.5 577.2l-1.8 -2.4M1078.3 578.5l-2.7 -0.4M1072.1 567l-3.1 -1.4M1074.7 589.2l2.8 -0.7M1064.7 578l-1.7 0.4M1083.2 578.1l1.5 2.9M1064.8 586l-3 -1.3M1086.3 565.4l-1.9 0.6M1066.1 570.2l0.7 -1.4M1068.5 566.4l-2.3 1.2M1091.6 572.2l-2.1 2.7M1086.8 570.6l-1.7 -0.7M1077.9 562.5l0.3 -3.3M1065 564.2l-1.7 -0.5M1070.2 575.3l1.5 3.1M1070.1 578.6l-1.5 0.6M1068.5 568.8l0.6 2.7M1078.1 572.5l-0.6 -2.6M1064 574.9l2.2 0.2M1065.1 572.5l2.2 -0.1M1083.5 561.5l0.7 -2.4M1059.6 574.1l1.4 1.3M1086.9 575l-3.3 1M1084.9 569.4l-1.7 0M1075.2 561.8l1.6 2.8M1082.5 576.1l-3.5 0.5M1080.8 580.9l0.6 -2.1M1078.3 572.4l0.2 2.1M1078.5 569.1l-1.5 -2.9M1089.9 571.6l2.3 0.8M1076.3 580.3l0.1 3M1069.1 571l-0.4 1.6M1088.1 567.5l-3.4 0.6M1082.9 572.9l-0.1 1.9M1066 564.6l-3 -0.4M1065.5 572.2l-1.7 -3" stroke="#001a10" stroke-width=".8" fill="none" opacity=".6"/>
<path d="M1067.1 565.3L1069.4 569.1L1075.5 567L1071.3 572.8L1077.7 575.9L1070.7 576.4L1070.5 580.1L1067.4 577.8L1063 583.3L1063.1 577.2L1057.1 576.3L1062.9 572.9L1060 568.2L1066.3 571.7L1067.1 564M1073.2 577.9L1070.6 573.4L1063.3 574.7L1068.2 568.4L1063.4 564L1071 564.6L1069.6 555.3L1074.7 561.7L1080.8 556.6L1076.6 566L1086.7 565.9L1079.5 569.3L1084.5 577.5L1076 572.6L1073 580.6M1069.3 572.9L1075.4 567.7L1068.3 561.2L1078.5 564.7L1078.1 553.2L1082.9 560.4L1089.6 557.7L1086.4 565.4L1092.5 568.3L1084.2 569.6L1089.4 579.3L1081.8 572.5L1078.1 578.3L1078 571.3L1065.7 574.5M1054.9 573.6L1062.7 572.6L1062.5 565.6L1067.7 571.4L1073.4 565.1L1071.5 573.7L1080.2 574L1074.9 578.4L1075.9 583.5L1070 581.7L1067.5 585.7L1065.3 581.2L1057.8 584.3L1063.4 577.6L1055.5 573.7" fill="none" stroke="#00c896" stroke-width="0.9" />
<path d="M1083 592.3L1083.8 588.7L1081 587.4L1083.5 584.6L1080.3 582.2L1083.3 580.6L1082.7 577.6L1086.6 578.2L1086.2 574L1089.4 575.5L1091.2 573L1093.5 574.4L1096.4 573L1097.1 576.5L1100.5 576.1L1098.3 580.4L1103.1 580.6L1100.6 583.4L1102.7 585.7L1101 587.6L1101.9 590.8L1097.7 590.1L1097.3 593.3L1094.3 591.5L1092.8 595.4L1090.7 592.7L1087.9 594.3L1087.2 590.9Z" fill="#00c896" fill-opacity=".93" stroke="#00c896" stroke-width=".8"/>
<path d="M1090.9 592.2l-1 -2.3M1092 575.3l2.4 1.4M1082.5 585l2 -0.8M1095.2 579.6l-0.9 -1.2M1095.4 577.4l-2.4 0.7M1088.2 587.9l-1 -2.6M1097.5 586l1.9 -0.9M1089.7 592l-2.4 2.4M1096.2 583.5l0.3 1.8M1086.4 586l-1.5 -2.9M1094.3 585.1l1.6 1.4M1096.9 589.4l-1.9 2.2M1102.5 581.8l-2.4 1.3M1097.8 590.3l2.4 -2.2M1095 587.7l2.4 -1.7M1092.3 580.7l-1.1 -1M1091.2 574.3l-0.7 1.4M1090.8 573.2l-1.6 -1.5M1087.3 592.6l2.2 -0.4M1094 594.7l-2.1 1M1088.5 592.6l2.4 -0.3M1096.3 578.4l-2.7 1.5M1101.3 582.3l-0.9 -3M1101.3 578.8l-2.2 -0.4" stroke="#001a10" stroke-width=".8" fill="none" opacity=".6"/>
<path d="M1094.7 584.3L1089.1 585.5L1089.7 588.3L1087.1 587.1L1084.9 591.3L1084.5 586.8L1081.7 586.6L1082.5 584.3L1080.6 581.4L1084.4 581.6L1085.1 577.8L1087.1 581.6L1091.1 578.5L1089.3 583L1094 584.3M1097.2 581.1L1093.9 585.3L1096.7 587.6L1092.8 587.8L1092.7 590.8L1090.5 589.5L1088.1 590.7L1087.5 588.3L1082.5 587.5L1087 585L1084.9 581L1089.7 583.9L1090.9 578.1L1092.6 582.3L1095.3 582.4M1085.4 584.6L1088.1 582.6L1086.5 578.1L1091.1 581.1L1093.2 576.7L1093.5 582L1098 580.8L1095.1 584L1098.7 586.9L1093.9 586.3L1093.9 590.6L1091.4 588L1088.6 589.1L1090.3 585.1L1085.2 584.6M1085.3 595L1089.9 588.7L1083.3 585.8L1091 585.7L1089.6 580.2L1093.5 584.5L1097.8 578L1095.9 585.7L1103.5 584.9L1097.9 588.4L1100.3 592.5L1096.2 592.5L1094 596.2L1092.3 590.8L1087.6 592.9" fill="none" stroke="#00c896" stroke-width="0.9" />
<path d="M1011.1 575.7L1010.3 579.4L1014.1 579.2L1011.2 582.3L1014 583.7L1011.7 585.3L1014.3 588.1L1010.2 587.8L1011.6 591.7L1008.1 590L1007.4 593.2L1005.3 591.7L1003.2 593.6L1001.9 591L998.7 592.4L999.8 588.5L997 588.2L997.4 586L994.9 584.4L997.8 582.6L995.5 579.8L999.2 579.7L998 575.8L1002.2 578.6L1002.2 573.4L1004.7 576.6L1006.9 574.3L1008.2 576.6Z" fill="#00c896" fill-opacity=".93" stroke="#00c896" stroke-width=".8"/>
<path d="M1010.7 579.6l2.7 0.2M999 587.7l0.9 -1.5M1008 579.6l-0 1.6M1008.9 587.1l-3.3 -0.6M1007.4 588.5l-1.9 2M1000.4 590l0.9 1.3M998.1 580.2l1.1 1.2M1003.6 581.6l2.6 -1.3M1008.2 589.1l1.6 0.6M999.8 590.9l2.5 -1.6M1000.4 578.6l-2.8 -0.2M999.1 584.1l1.1 -1.8M998.7 588.3l2.1 -0.5M999.6 586.4l0.5 2.1M1006 579.9l-2 0.3M997.8 580.2l1.8 1.6M1007.9 590.9l-0.9 -1.7" stroke="#001a10" stroke-width=".8" fill="none" opacity=".6"/>
<path d="M1007.5 578.1L1005.2 581.5L1007.8 583.3L1003.8 583.2L1005.4 588.2L1002.5 583.6L1000.4 586.4L1000.3 583.9L997.1 583.4L1000.9 581.8L998.1 578.7L1001.1 579.2L1002.4 576L1003.2 580.6L1007 578.5M994.2 588.4L998.9 587.3L995.6 582.1L1000.3 586.5L1002.1 580.6L1002.7 585.4L1006.7 584.9L1005.6 587.9L1006.7 590.7L1002.9 590.5L1002.6 594.7L1000 592.2L996 594.6L998.7 589.2L993.6 588.4M999.9 581.4L1001.7 578.9L998.9 575L1003.7 576.1L1004.9 570.7L1006.4 577.7L1010.2 575.1L1008.7 578.5L1011.5 580.1L1007.4 580.5L1009.7 585.8L1006.1 582.4L1003.9 584.8L1003.8 581.4L1000.1 581.4M1003.7 585.7L1001 582.7L998.3 587.1L999.6 581.9L994.1 582.8L999.1 580.5L995.5 577.1L999.4 578.2L1000.5 575.9L1002.1 577.5L1005.9 576L1003.8 579.8L1006.6 581.6L1003.3 582.4L1003.4 585.2" fill="none" stroke="#00c896" stroke-width="0.9" />
<path d="M1070.4 591.7L1067.3 592.4L1069.9 595.9L1065.9 594.7L1066 597.9L1063.9 597.2L1062.3 599.4L1060.8 596.2L1058.6 597.7L1058.3 595L1055.3 595.6L1055.4 593.4L1053.3 592.2L1054.6 590.2L1053.5 588.3L1056.9 587.7L1054.2 584.1L1058.4 585.7L1057.6 581.5L1060.3 583.5L1061.8 581.3L1063.4 583L1065.7 581.8L1066.5 584L1069 584.1L1068.6 586.6L1071.6 587.5L1068.3 589.8Z" fill="#00c896" fill-opacity=".93" stroke="#00c896" stroke-width=".8"/>
<path d="M1059.4 583.3l-0.9 -1.3M1059.2 583.2l0.6 1.6M1067.7 592.6l2.5 2M1054.8 594.2l-0.2 -2.3M1064.3 595.1l-2.5 -2M1065.8 586.9l2.8 0.4M1059.4 583.7l1 -3M1056.6 584.6l2.4 2.4M1060.5 587.5l1.4 2.4M1059.2 597.6l-0.4 2.4M1053.9 589.8l-1.1 3.1M1060.9 583.7l3.1 -1.1M1062 583.7l1.9 0.5M1060.2 587.4l-1.4 -1.7" stroke="#001a10" stroke-width=".8" fill="none" opacity=".6"/>
<path d="M1060.9 586.1L1062.6 589.5L1067.3 587.6L1063.5 592.2L1068.9 594.4L1062.2 593.7L1064.3 599.3L1061.1 595.2L1058 599.5L1059.1 594.3L1052.9 594.8L1057.1 591.9L1054.9 588L1059.6 589.9L1060.9 584.6M1062.3 581.8L1063.9 584.9L1066.1 582.9L1065.2 585.6L1069.4 586.1L1065.6 587.2L1066.5 589.6L1064.4 588.9L1063 590.8L1062.3 588.5L1058.9 589.1L1062.1 586.5L1058.1 584.2L1062.2 584.9L1062.3 581.9M1059.9 585.7L1064.3 585.6L1061.7 580.8L1065 584.1L1066.9 581L1066.1 585.3L1071.2 583.9L1067.7 586.4L1069.6 588.7L1066 587.3L1066 591.7L1064.4 588.9L1060.8 590.9L1062 587.4L1060.9 585.8M1061.6 589.4L1060.3 591.2L1062.9 592.5L1060.4 592.8L1060.3 594.8L1058.8 593L1056.6 595.7L1056.9 592.9L1055.2 592.2L1056.8 590.9L1056.1 589.1L1058.2 589.9L1059.1 586.1L1059.4 590.4L1062.3 588.9" fill="none" stroke="#00c896" stroke-width="0.9" />
<circle cx="789" cy="594" r="2.2" fill="#ffff00" stroke="#ffff00" stroke-width="0"/>
<circle cx="900" cy="594" r="2.2" fill="#ffff00" stroke="#ffff00" stroke-width="0"/>
<circle cx="1009.5" cy="594" r="2.2" fill="#ffff00" stroke="#ffff00" stroke-width="0"/>
<rect x="785" y="546" width="2" height="2" fill="#ffffff" stroke="#ffffff" stroke-width="0"/>
<rect x="1101" y="546" width="2" height="2" fill="#ffffff" stroke="#ffffff" stroke-width="0"/>
<rect x="785" y="599" width="2" height="2" fill="#ffffff" stroke="#ffffff" stroke-width="0"/>
<rect x="1101" y="599" width="2" height="2" fill="#ffffff" stroke="#ffffff" stroke-width="0"/>
<rect x="1007" y="546" width="2" height="2" fill="#ffffff" stroke="#ffffff" stroke-width="0"/>
<g shape-rendering="crispEdges">
<path d="M555 477.5H639" stroke="#cf8a6a" stroke-width="1"/>
<path d="M638.5 478V497" stroke="#cf8a6a" stroke-width="1"/>
<rect x="556.5" y="482.5" width="73" height="112" fill="none" stroke="#b8601a" stroke-width="1"/>
<rect x="556.5" y="596.5" width="73" height="108" fill="none" stroke="#b8601a" stroke-width="1"/>
<path d="M566.5 483V704" stroke="#b8601a" stroke-width="1"/>
<path d="M560.5 478V907" stroke="#0c8a10" stroke-width="1"/>
<path d="M638.5 497V800" stroke="#0c8a10" stroke-width="1"/>
<path d="M632.5 483V800" stroke="#ffffff" stroke-width="1"/>
<path d="M634.5 483V800" stroke="#ffffff" stroke-width="1"/>
<path d="M636.5 483V800" stroke="#ffffff" stroke-width="1"/>
<path d="M629 482.5H637" stroke="#ffffff" stroke-width="1"/>
<rect x="635.5" y="526.5" width="3" height="24" fill="#5a5a5a" stroke="#8c8c8c" stroke-width="1"/>
<rect x="635.5" y="637.5" width="3" height="24" fill="#5a5a5a" stroke="#8c8c8c" stroke-width="1"/>
<rect x="635.5" y="735.5" width="3" height="24" fill="#5a5a5a" stroke="#8c8c8c" stroke-width="1"/>
<path d="M561 705.5H637" stroke="#0c8a10" stroke-width="1"/>
<path d="M566.5 706V872" stroke="#0c8a10" stroke-width="1"/>
<path d="M556 795.5H633" stroke="#b8601a" stroke-width="1"/>
<rect x="561.5" y="795.5" width="74" height="77" fill="none" stroke="#b8601a" stroke-width="1"/>
<path d="M629.5 705V805" stroke="#b8601a" stroke-width="1"/>
<path d="M629.5 805H640" fill="none" stroke="#b8601a" stroke-width="1" />
</g>
<circle cx="586.5" cy="549" r="8.8" fill="#00c896" stroke="#00c896" stroke-width="0"/>
<circle cx="571.5" cy="568.5" r="10" fill="#00c896" stroke="#00c896" stroke-width="0"/>
<circle cx="579.5" cy="589" r="7.8" fill="#00c896" stroke="#00c896" stroke-width="0"/>
<path d="M566 566q5 5 10 0" fill="none" stroke="#009a74" stroke-width="1" />
<path d="M570 489.5l3 3M570 492.5l1.5 -1.5" fill="none" stroke="#ffffff" stroke-width="0.9" />
<path d="M622.5 489.5l3 3M622.5 492.5l1.5 -1.5" fill="none" stroke="#ffffff" stroke-width="0.9" />
<path d="M570 600.5l3 3M570 603.5l1.5 -1.5" fill="none" stroke="#ffffff" stroke-width="0.9" />
<path d="M622.5 600.5l3 3M622.5 603.5l1.5 -1.5" fill="none" stroke="#ffffff" stroke-width="0.9" />
<path d="M622.5 584l3 3M622.5 587l1.5 -1.5" fill="none" stroke="#ffffff" stroke-width="0.9" />
<path d="M570 695.5l3 3M570 698.5l1.5 -1.5" fill="none" stroke="#ffffff" stroke-width="0.9" />
<path d="M622.5 695.5l3 3M622.5 698.5l1.5 -1.5" fill="none" stroke="#ffffff" stroke-width="0.9" />
<path d="M568 711.5l3 3M568 714.5l1.5 -1.5" fill="none" stroke="#ffffff" stroke-width="0.9" />
<path d="M622.5 711.5l3 3M622.5 714.5l1.5 -1.5" fill="none" stroke="#ffffff" stroke-width="0.9" />
<path d="M568 861.5l3 3M568 864.5l1.5 -1.5" fill="none" stroke="#ffffff" stroke-width="0.9" />
<path d="M622.5 861.5l3 3M622.5 864.5l1.5 -1.5" fill="none" stroke="#ffffff" stroke-width="0.9" />
<circle cx="618" cy="583" r="2.2" fill="#ffff00" stroke="#ffff00" stroke-width="0"/>
<circle cx="618" cy="694" r="2.2" fill="#ffff00" stroke="#ffff00" stroke-width="0"/>
<circle cx="618" cy="861" r="2.2" fill="#ffff00" stroke="#ffff00" stroke-width="0"/>
<circle cx="596.5" cy="706.5" r="10" fill="#00c896" stroke="#00c896" stroke-width="0"/>
<circle cx="596.5" cy="706.5" r="5.5" fill="none" stroke="#000" stroke-width="0.8"/>
<circle cx="596.5" cy="706.5" r="2.3" fill="#0a6" stroke="#fff" stroke-width="0.8"/>
<circle cx="763.5" cy="706.5" r="10" fill="#00c896" stroke="#00c896" stroke-width="0"/>
<circle cx="763.5" cy="706.5" r="5.5" fill="none" stroke="#000" stroke-width="0.8"/>
<circle cx="763.5" cy="706.5" r="2.3" fill="#0a6" stroke="#fff" stroke-width="0.8"/>
<circle cx="930" cy="706.5" r="10" fill="#00c896" stroke="#00c896" stroke-width="0"/>
<circle cx="930" cy="706.5" r="5.5" fill="none" stroke="#000" stroke-width="0.8"/>
<circle cx="930" cy="706.5" r="2.3" fill="#0a6" stroke="#fff" stroke-width="0.8"/>
<circle cx="1097" cy="706.5" r="10" fill="#00c896" stroke="#00c896" stroke-width="0"/>
<circle cx="1097" cy="706.5" r="5.5" fill="none" stroke="#000" stroke-width="0.8"/>
<circle cx="1097" cy="706.5" r="2.3" fill="#0a6" stroke="#fff" stroke-width="0.8"/>
<g shape-rendering="crispEdges">
<path d="M634 798.5H1321" stroke="#ffffff" stroke-width="1"/>
<path d="M634 800.5H1321" stroke="#ffffff" stroke-width="1"/>
<path d="M640 796.5H1321" stroke="#0c8a10" stroke-width="1"/>
<path d="M640 804.5H1321" stroke="#b8601a" stroke-width="1"/>
<rect x="675.5" y="795.5" width="24" height="2" fill="#6a6a6a" stroke="#8c8c8c" stroke-width="1"/>
<rect x="758.5" y="795.5" width="24" height="2" fill="#6a6a6a" stroke="#8c8c8c" stroke-width="1"/>
<rect x="842.5" y="795.5" width="24" height="2" fill="#6a6a6a" stroke="#8c8c8c" stroke-width="1"/>
<rect x="925.5" y="795.5" width="24" height="2" fill="#6a6a6a" stroke="#8c8c8c" stroke-width="1"/>
<rect x="1009.5" y="795.5" width="24" height="2" fill="#6a6a6a" stroke="#8c8c8c" stroke-width="1"/>
<rect x="1092.5" y="795.5" width="24" height="2" fill="#6a6a6a" stroke="#8c8c8c" stroke-width="1"/>
<rect x="1176.5" y="795.5" width="24" height="2" fill="#6a6a6a" stroke="#8c8c8c" stroke-width="1"/>
<rect x="1259.5" y="795.5" width="24" height="2" fill="#6a6a6a" stroke="#8c8c8c" stroke-width="1"/>
<path d="M645.5 800V875" stroke="#0c8a10" stroke-width="1"/>
<path d="M728.5 800V878" stroke="#b8601a" stroke-width="1"/>
<path d="M812.5 800V878" stroke="#b8601a" stroke-width="1"/>
<path d="M895.5 800V878" stroke="#b8601a" stroke-width="1"/>
<path d="M979.5 800V878" stroke="#b8601a" stroke-width="1"/>
<path d="M1060.5 800V878" stroke="#b8601a" stroke-width="1"/>
<path d="M1062.5 800V878" stroke="#b8601a" stroke-width="1"/>
<path d="M1143.5 800V878" stroke="#b8601a" stroke-width="1"/>
<path d="M1146.5 800V878" stroke="#b8601a" stroke-width="1"/>
<path d="M1229.5 800V878" stroke="#b8601a" stroke-width="1"/>
<path d="M1230.5 800V878" stroke="#b8601a" stroke-width="1"/>
<path d="M1313.5 800V878" stroke="#b8601a" stroke-width="1"/>
<path d="M640 874.5H1321" stroke="#0c8a10" stroke-width="1"/>
<path d="M812 867.5H895" stroke="#b8601a" stroke-width="1"/>
<path d="M894.5 867V878" stroke="#b8601a" stroke-width="1"/>
<path d="M814.5 867V878" stroke="#b8601a" stroke-width="1"/>
<rect x="671.5" y="801.5" width="139" height="71" fill="none" stroke="#ffff00" stroke-width="1"/>
<rect x="673.5" y="803.5" width="135" height="67" fill="none" stroke="#ffffff" stroke-width="1"/>
<rect x="675.5" y="805.5" width="50" height="56" fill="none" stroke="#ffffff" stroke-width="1"/>
<rect x="753.5" y="806.5" width="53" height="53" fill="none" stroke="#ffffff" stroke-width="1"/>
<rect x="755.5" y="808.5" width="49" height="49" fill="none" stroke="#ffffff" stroke-width="1"/>
<rect x="727.5" y="806.5" width="22" height="54" fill="none" stroke="#ffffff" stroke-width="1"/>
<rect x="729.5" y="808.5" width="18" height="50" fill="none" stroke="#ffffff" stroke-width="1"/>
<rect x="731.5" y="820.5" width="13" height="35" fill="#2e2e2e" stroke="#3a3a3a" stroke-width="1"/>
<rect x="739.5" y="863.5" width="17" height="7" fill="#ffffff" stroke="#ffffff" stroke-width="1"/>
<rect x="751.5" y="832.5" width="3" height="34" fill="#ffffff" stroke="#ffffff" stroke-width="1"/>
<path d="M527 876.5H1321" stroke="#ffffff" stroke-width="1"/>
<path d="M555 879.5H1321" stroke="#ffffff" stroke-width="1"/>
<path d="M528 876.5H819" stroke="#86f21a" stroke-width="1"/>
<rect x="527.5" y="879.5" width="292" height="28" fill="none" stroke="#ffffff" stroke-width="1"/>
<path d="M555.5 879V907" stroke="#ffffff" stroke-width="1"/>
<path d="M545 895.5H815" stroke="#86f21a" stroke-width="1"/>
<path d="M545 897.5H815" stroke="#86f21a" stroke-width="1"/>
<path d="M545 899.5H815" stroke="#86f21a" stroke-width="1"/>
<path d="M545 901.5H815" stroke="#86f21a" stroke-width="1"/>
<path d="M545 903.5H815" stroke="#86f21a" stroke-width="1"/>
<path d="M545 905.5H815" stroke="#86f21a" stroke-width="1"/>
<rect x="542.5" y="893.5" width="275" height="13" fill="none" stroke="#86f21a" stroke-width="1"/>
<path d="M528 906.5H560" stroke="#86f21a" stroke-width="1"/>
<path d="M548.5 894V906" stroke="#86f21a" stroke-width="1"/>
<path d="M552.5 894V906" stroke="#86f21a" stroke-width="1"/>
<path d="M805.5 890V906" stroke="#86f21a" stroke-width="1"/>
<path d="M808.5 894V906" stroke="#86f21a" stroke-width="1"/>
<path d="M811.5 894V906" stroke="#86f21a" stroke-width="1"/>
<rect x="529.5" y="880.5" width="11" height="9" fill="none" stroke="#86f21a" stroke-width="1"/>
<path d="M528 906L541 893" fill="none" stroke="#ffffff" stroke-width="1" />
<rect x="1070.5" y="792.5" width="68" height="71" fill="none" stroke="#ffffff" stroke-width="1"/>
<rect x="1072.5" y="799.5" width="64" height="59" fill="none" stroke="#ffffff" stroke-width="1"/>
<rect x="1076.5" y="804.5" width="56" height="52" fill="none" stroke="#ffffff" stroke-width="1"/>
<path d="M1070 868.5H1139" stroke="#ffffff" stroke-width="1"/>
<rect x="1154.5" y="792.5" width="67" height="71" fill="none" stroke="#ffffff" stroke-width="1"/>
<rect x="1156.5" y="799.5" width="63" height="59" fill="none" stroke="#ffffff" stroke-width="1"/>
<rect x="1160.5" y="804.5" width="55" height="52" fill="none" stroke="#ffffff" stroke-width="1"/>
<path d="M1154 868.5H1222" stroke="#ffffff" stroke-width="1"/>
<path d="M1064.5 800V878" stroke="#ffffff" stroke-width="1"/>
<path d="M1148.5 800V878" stroke="#ffffff" stroke-width="1"/>
<path d="M1227.5 800V878" stroke="#ffffff" stroke-width="1"/>
<path d="M1000 799.5H1048V821.5H1000M1000 803.5H1044V817.5H1000" fill="none" stroke="#ffffff" stroke-width="1" />
<rect x="1016.5" y="805.5" width="10" height="3" fill="none" stroke="#ffffff" stroke-width="1"/>
<path d="M1021.5 808V815" stroke="#ffffff" stroke-width="2"/>
<path d="M1320.5 730V879" stroke="#ffffff" stroke-width="1"/>
<path d="M1313 879.5H1695" stroke="#ffffff" stroke-width="1"/>
<rect x="1312.5" y="737.5" width="8" height="8" fill="none" stroke="#ffffff" stroke-width="1"/>
<rect x="1312.5" y="754.5" width="8" height="8" fill="none" stroke="#ffffff" stroke-width="1"/>
<rect x="1312.5" y="771.5" width="8" height="8" fill="none" stroke="#ffffff" stroke-width="1"/>
<rect x="1312.5" y="787.5" width="8" height="8" fill="none" stroke="#ffffff" stroke-width="1"/>
<path d="M819 906.5H1724" stroke="#e09a6a" stroke-width="1"/>
<path d="M1723.5 130V907" stroke="#e09a6a" stroke-width="1"/>
<path d="M1695.5 130V170" stroke="#e09a6a" stroke-width="1"/>
<path d="M1833.5 130V957" stroke="#22c010" stroke-width="1"/>
<path d="M1284 130.5H1695" stroke="#ffffff" stroke-width="1"/>
<path d="M1322.5 130V175" stroke="#ffffff" stroke-width="1"/>
<path d="M1689.5 130V175" stroke="#ffffff" stroke-width="1"/>
<path d="M1813.5 130V170" stroke="#ffffff" stroke-width="1"/>
<path d="M1428 130.5H1560" stroke="#86f21a" stroke-width="1"/>
<path d="M1428 131.5H1560" stroke="#86f21a" stroke-width="1"/>
</g>
<circle cx="1631" cy="202" r="61" fill="none" stroke="#00c896" stroke-width="1"/>
<circle cx="738.5" cy="846" r="5" fill="none" stroke="#ffffff" stroke-width="1.2"/>
<circle cx="780" cy="844" r="8" fill="#ffffff" stroke="#ffffff" stroke-width="0"/>
<circle cx="780" cy="844" r="4.5" fill="none" stroke="#000" stroke-width="1.2"/>
<circle cx="780" cy="844" r="2" fill="#ffffff" stroke="#ffffff" stroke-width="0"/>
<path d="M780 851V866" stroke="#ffffff" stroke-width="2"/>
<circle cx="780" cy="867" r="3.5" fill="#ffffff" stroke="#ffffff" stroke-width="0"/>
<circle cx="781" cy="868" r="1.3" fill="#3cf" stroke="#3cf" stroke-width="0"/>
<circle cx="738.5" cy="832.5" r="2.6" fill="#ffff00" stroke="#ff50b0" stroke-width="1.2"/>
<circle cx="779.5" cy="832.5" r="2.6" fill="#ffff00" stroke="#ff50b0" stroke-width="1.2"/>
<circle cx="718" cy="816.5" r="2" fill="#ffff00" stroke="#ffff00" stroke-width="0"/>
<circle cx="801" cy="816.5" r="2" fill="#ffff00" stroke="#ffff00" stroke-width="0"/>
<circle cx="884.5" cy="816.5" r="2" fill="#ffff00" stroke="#ffff00" stroke-width="0"/>
<circle cx="968" cy="816.5" r="2" fill="#ffff00" stroke="#ffff00" stroke-width="0"/>
<circle cx="1052" cy="816.5" r="2" fill="#ffff00" stroke="#ffff00" stroke-width="0"/>
<circle cx="1134" cy="816.5" r="2" fill="#ffff00" stroke="#ffff00" stroke-width="0"/>
<circle cx="1218" cy="816.5" r="2" fill="#ffff00" stroke="#ffff00" stroke-width="0"/>
<circle cx="1302" cy="816.5" r="2" fill="#ffff00" stroke="#ffff00" stroke-width="0"/>
<path d="M652 808.5l3 3M652 811.5l1.5 -1.5" fill="none" stroke="#ffffff" stroke-width="0.9" />
<path d="M718.5 808.5l3 3M718.5 811.5l1.5 -1.5" fill="none" stroke="#ffffff" stroke-width="0.9" />
<path d="M652 861.5l3 3M652 864.5l1.5 -1.5" fill="none" stroke="#ffffff" stroke-width="0.9" />
<path d="M718.5 861.5l3 3M718.5 864.5l1.5 -1.5" fill="none" stroke="#ffffff" stroke-width="0.9" />
<path d="M819 808.5l3 3M819 811.5l1.5 -1.5" fill="none" stroke="#ffffff" stroke-width="0.9" />
<path d="M885.5 808.5l3 3M885.5 811.5l1.5 -1.5" fill="none" stroke="#ffffff" stroke-width="0.9" />
<path d="M819 861.5l3 3M819 864.5l1.5 -1.5" fill="none" stroke="#ffffff" stroke-width="0.9" />
<path d="M885.5 861.5l3 3M885.5 864.5l1.5 -1.5" fill="none" stroke="#ffffff" stroke-width="0.9" />
<path d="M979.5 808.5l3 3M979.5 811.5l1.5 -1.5" fill="none" stroke="#ffffff" stroke-width="0.9" />
<path d="M979.5 861.5l3 3M979.5 864.5l1.5 -1.5" fill="none" stroke="#ffffff" stroke-width="0.9" />
<path d="M968.5 808.5l3 3M968.5 811.5l1.5 -1.5" fill="none" stroke="#ffffff" stroke-width="0.9" />
<rect x="903" y="809" width="2" height="2" fill="#ffffff" stroke="#ffffff" stroke-width="0"/>
<rect x="903" y="872" width="2" height="2" fill="#ffffff" stroke="#ffffff" stroke-width="0"/>
<rect x="970" y="872" width="2" height="2" fill="#ffffff" stroke="#ffffff" stroke-width="0"/>
<rect x="1070" y="871" width="2" height="2" fill="#ffffff" stroke="#ffffff" stroke-width="0"/>
<rect x="1220" y="871" width="2" height="2" fill="#ffffff" stroke="#ffffff" stroke-width="0"/>
<rect x="1237" y="872" width="2" height="2" fill="#ffffff" stroke="#ffffff" stroke-width="0"/>
<rect x="1304" y="872" width="2" height="2" fill="#ffffff" stroke="#ffffff" stroke-width="0"/>
<circle cx="1364" cy="839" r="32" fill="none" stroke="#00c896" stroke-width="1.2"/>
<path d="M1364 839L1396 839M1364 839L1391.7 855M1364 839L1380 866.7M1364 839L1364 871M1364 839L1348 866.7M1364 839L1336.3 855M1364 839L1332 839M1364 839L1336.3 823M1364 839L1348 811.3M1364 839L1364 807M1364 839L1380 811.3M1364 839L1391.7 823" fill="none" stroke="#00c896" stroke-width="2.4" />
<circle cx="1364" cy="839" r="4.2" fill="#000" stroke="#00c896" stroke-width="1.4"/>
<g transform="rotate(42 1355.5 770)"><ellipse cx="1355.5" cy="770" rx="17" ry="6.5" stroke="#00c896" stroke-width="1.2"/><ellipse cx="1353.5" cy="770" rx="12" ry="4.0" stroke="#00c896"/><ellipse cx="1350.5" cy="770" rx="6" ry="2.5" stroke="#00c896"/><path d="M1357.5 764.5v11.0M1361.5 765.5v9.0" stroke="#00c896"/></g>
<g transform="rotate(45 1342 783)"><ellipse cx="1342" cy="783" rx="17" ry="6.5" stroke="#00c896" stroke-width="1.2"/><ellipse cx="1340" cy="783" rx="12" ry="4.0" stroke="#00c896"/><ellipse cx="1337" cy="783" rx="6" ry="2.5" stroke="#00c896"/><path d="M1344 777.5v11.0M1348 778.5v9.0" stroke="#00c896"/></g>
<g transform="rotate(-35 1343 806)"><ellipse cx="1343" cy="806" rx="11" ry="6" stroke="#00c896" stroke-width="1.2"/><ellipse cx="1341" cy="806" rx="6" ry="3.5" stroke="#00c896"/><ellipse cx="1338" cy="806" rx="3" ry="2" stroke="#00c896"/><path d="M1345 801v10M1349 802v8" stroke="#00c896"/></g>
<g transform="rotate(-30 1352 800)"><ellipse cx="1352" cy="800" rx="12" ry="5" stroke="#00c896" stroke-width="1.2"/><ellipse cx="1350" cy="800" rx="7" ry="2.5" stroke="#00c896"/><ellipse cx="1347" cy="800" rx="3" ry="1.5" stroke="#00c896"/><path d="M1354 796v8M1358 797v6" stroke="#00c896"/></g>
<path d="M1366 772Q1372 760 1381 763Q1385 770 1380 776Q1374 774 1370 782Q1366 778 1366 772Z M1372 790Q1378 784 1388 789Q1394 796 1390 803Q1384 800 1378 806Q1372 800 1372 790Z M1370 768Q1376 764 1381 768" fill="none" stroke="#00c896" stroke-width="1.1" />
<path d="M1347.7 794.4L1354.1 793.9L1350.3 789.5L1355.4 790.6L1353.8 785.2L1357.9 787.5L1359.2 783.9L1361.9 788.3L1364.6 782.9L1365.8 787.4L1369.5 785.4L1369.3 789.5L1374.2 788.5L1370.2 793.4L1375.8 794L1372.7 796.8L1374.8 799.3L1372.2 801L1373 804.1L1370 804.7L1369.9 808.4L1366.4 807.2L1365.1 811.4L1362.2 807.6L1359.6 810.1L1358.5 806L1354.5 808.7L1354.6 804.7L1351 804.6L1352 801.4L1349.4 799.7L1352.2 797.2Z" fill="#00c896" fill-opacity=".93" stroke="#00c896" stroke-width=".8"/>
<path d="M1365.4 801.4l-0.4 1.5M1353 792.8l-2.5 1.9M1352 794l1.9 1.1M1367.3 797.7l1 -1.4M1355.5 792.5l-1.5 -2.9M1367.9 786.2l2.2 -0.5M1373 796.2l-0.4 2.1M1350.6 795.3l2.7 1.9M1357.3 788.4l-1.9 1.2M1353.1 803l-2.7 1M1365 794l3.4 0.4M1366 807.6l-1.6 1.1M1370.3 797.6l-1.3 -0.9M1368.9 797.5l2.2 -2M1361.7 805.1l-2.5 1.5M1360.3 804.5l-2 -0M1352.2 801.7l-1.6 -0M1356.4 804.8l0.3 2.3M1354.8 794.2l1.3 3M1373 801.8l2.2 1.5M1354.1 794.7l-2.3 -2.3M1360.4 800.4l1 3.1M1353.1 790.6l-1.6 1.4M1358.5 788.1l1.6 -0.9M1356.2 805.8l2 -1.3M1363.1 792.5l-1.4 -1.7M1359.5 790.4l0.8 1.9M1360.2 786.5l2 -1.2M1372.4 801.5l-0.1 2.9M1353.5 797.6l1.9 0.4M1361.9 788.3l2.3 -2.1M1349.8 794.4l2.3 0" stroke="#001a10" stroke-width=".8" fill="none" opacity=".6"/>
<path d="M1368.8 800L1363 794.6L1359.7 801.1L1360.4 793.6L1352.2 795.7L1358.5 791.1L1351.3 785.3L1360.9 789.2L1360.7 782.1L1363.5 787.5L1370.5 782L1365.2 790.1L1373.4 791.7L1365.3 792.8L1368.4 799.4M1374 803.8L1369.7 803.9L1368.8 808.2L1366.3 803.6L1361.5 807.6L1364 802.1L1359 800.7L1363.3 798.8L1361.6 794L1366.2 797.5L1368.6 792.8L1369.2 797.6L1375.1 796.5L1371.6 800.5L1374.4 804M1357.5 795.8L1360.3 798.7L1364.3 793.4L1363.1 799.5L1368.1 800L1363.1 802.4L1367.5 807.5L1362.2 805.7L1360.2 809.7L1359 804.4L1353.3 807.2L1356.4 802.6L1353.4 800.1L1357.1 799.2L1357.2 795.3M1373.7 791.9L1372 798.2L1379.3 799.3L1372.5 802L1374.9 807.1L1369.3 803.3L1367.1 811.2L1366.1 804.1L1359.3 806.2L1366 800.7L1360.5 797.8L1365.5 797.6L1365.1 791.2L1368.9 795.5L1372.4 794" fill="none" stroke="#00c896" stroke-width="0.9" />
<path d="M1371.7 815.6L1368.9 816.6L1370.2 818.6L1367.2 818L1367.7 820.6L1365.6 819.1L1365.1 822.8L1363.6 819.5L1361.9 821.7L1361.4 819.4L1358.9 820.4L1360.1 817.7L1357 817.7L1358.6 815.8L1356 814.3L1359.7 813.6L1358 811.5L1360.7 811.9L1360.1 809.2L1362.3 810.6L1363.1 808.5L1364.5 809.3L1366.1 808.4L1366.8 810.2L1369.3 809.4L1368.7 811.8L1370.2 812.6L1369.3 814.2Z" fill="#00c896" fill-opacity=".93" stroke="#00c896" stroke-width=".8"/>
<path d="M1367.2 810.7l-1.9 -1.4M1366.2 810.6l-1.5 2M1361 815.5l-1.5 -2.8M1363.3 813.9l-2.5 1.7M1367.3 818.5l-1 -2.3M1363.3 816.2l-0.5 -1.8M1360.1 812.1l-0.3 -1.7M1369.7 814l1.3 -1.3M1363.2 810.9l-0.9 -2.8" stroke="#001a10" stroke-width=".8" fill="none" opacity=".6"/>
<path d="M1358.7 819L1361.9 817.7L1360.3 815.5L1362.5 816.2L1363.4 814.5L1364.2 816.5L1366.7 815.5L1364.9 817.7L1368 819.2L1364.7 819.2L1364.8 821.2L1363.4 819.6L1361.2 822.3L1361.6 819.5L1358.5 819.1M1364.2 820.7L1363.5 819.1L1360.7 819.2L1363.2 817.2L1360.3 814.8L1364.2 816.1L1364 811.9L1365.8 814.6L1368.6 813L1366.5 816.6L1369.6 817.4L1366.7 818.1L1368.1 821.3L1365.4 819.1L1364.1 821M1362 813.9L1362.9 815.9L1364.8 814.8L1364.8 816.3L1367 817.5L1363.3 817.7L1364.6 820.3L1362.8 819.2L1361.2 821.6L1360.9 819.1L1359.4 818.5L1361.4 817.2L1359.4 815.5L1361.5 815.8L1362 814.1M1367.9 820.7L1365 819.4L1364.2 822.4L1363.2 819.8L1360.7 820.4L1361.9 818.2L1359.9 816.6L1362.5 816.2L1362.4 813.6L1364.3 815.5L1366.8 812.7L1366.2 816.2L1369.2 816.7L1366.5 818.3L1367.4 820.3" fill="none" stroke="#00c896" stroke-width="0.9" />
<path d="M1355 810L1352 822M1360 812L1364 826M1370 810L1372 822" fill="none" stroke="#00c896" stroke-width="1.5" />
<rect x="1399" y="777.5" width="10.5" height="10.5" fill="#00c896" stroke="#00c896" stroke-width="0"/>
<defs><linearGradient id="gg" x1="0" y1="0" x2="0" y2="1"><stop offset="0" stop-color="#b8b8b8"/><stop offset=".12" stop-color="#d8d8d8"/><stop offset=".45" stop-color="#ffffff"/><stop offset=".8" stop-color="#e4e4e4"/><stop offset="1" stop-color="#c4c4c4"/></linearGradient></defs>
<g shape-rendering="crispEdges">
<rect x="1602" y="730" width="94.500" height="149.500" fill="url(#gg)"/>
<rect x="1606" y="732" width="1" height="143" fill="#000" stroke="none" stroke-width="0"/>
<rect x="1608" y="748" width="1" height="128" fill="#000" stroke="none" stroke-width="0"/>
<rect x="1616" y="730" width="10" height="16.5" fill="#000" stroke="none" stroke-width="0"/>
<rect x="1616" y="750.5" width="10" height="125" fill="#000" stroke="none" stroke-width="0"/>
<rect x="1616" y="748" width="78" height="1" fill="#000" stroke="none" stroke-width="0"/>
<rect x="1603" y="877.5" width="91" height="1.5" fill="#000" stroke="none" stroke-width="0"/>
<path d="M1633 730H1634.7V733.5H1633ZM1637 730H1641V733.5H1637ZM1642.2 730H1644V733.5H1642.2ZM1649 730H1651.7V733.5H1649ZM1653 730H1657.8V733.5H1653ZM1659.3 730H1662.9V733.5H1659.3ZM1664.4 730H1669V733.5H1664.4ZM1670.3 730H1673.7V733.5H1670.3ZM1676 730H1680V733.5H1676ZM1681 730H1684.9V733.5H1681ZM1686.9 730H1690.8V733.5H1686.9ZM1633 736H1634.7V740.8H1633ZM1637 736H1641V740.8H1637ZM1642.2 736H1644V740.8H1642.2ZM1649 736H1651.7V740.8H1649ZM1653 736H1657.8V740.8H1653ZM1659.3 736H1662.9V740.8H1659.3ZM1664.4 736H1669V740.8H1664.4ZM1670.3 736H1673.7V740.8H1670.3ZM1676 736H1680V740.8H1676ZM1681 736H1684.9V740.8H1681ZM1686.9 736H1690.8V740.8H1686.9ZM1633 756.8H1634.7V762H1633ZM1637 756.8H1641V762H1637ZM1642.2 756.8H1644V762H1642.2ZM1649 756.8H1651.7V762H1649ZM1653 756.8H1657.8V762H1653ZM1659.3 756.8H1662.9V762H1659.3ZM1664.4 756.8H1669V762H1664.4ZM1670.3 756.8H1673.7V762H1670.3ZM1676 756.8H1680V762H1676ZM1681 756.8H1684.9V762H1681ZM1686.9 756.8H1690.8V762H1686.9ZM1633 763.8H1634.7V768H1633ZM1637 763.8H1641V768H1637ZM1642.2 763.8H1644V768H1642.2ZM1649 763.8H1651.7V768H1649ZM1653 763.8H1657.8V768H1653ZM1659.3 763.8H1662.9V768H1659.3ZM1664.4 763.8H1669V768H1664.4ZM1670.3 763.8H1673.7V768H1670.3ZM1676 763.8H1680V768H1676ZM1681 763.8H1684.9V768H1681ZM1686.9 763.8H1690.8V768H1686.9ZM1633 772H1634.7V779H1633ZM1637 772H1641V779H1637ZM1642.2 772H1644V779H1642.2ZM1649 772H1651.7V779H1649ZM1653 772H1657.8V779H1653ZM1659.3 772H1662.9V779H1659.3ZM1664.4 772H1669V779H1664.4ZM1670.3 772H1673.7V779H1670.3ZM1676 772H1680V779H1676ZM1681 772H1684.9V779H1681ZM1686.9 772H1690.8V779H1686.9ZM1633 780H1634.7V781H1633ZM1637 780H1641V781H1637ZM1642.2 780H1644V781H1642.2ZM1649 780H1651.7V781H1649ZM1653 780H1657.8V781H1653ZM1659.3 780H1662.9V781H1659.3ZM1664.4 780H1669V781H1664.4ZM1670.3 780H1673.7V781H1670.3ZM1676 780H1680V781H1676ZM1681 780H1684.9V781H1681ZM1686.9 780H1690.8V781H1686.9ZM1633 782.7H1634.7V787H1633ZM1637 782.7H1641V787H1637ZM1642.2 782.7H1644V787H1642.2ZM1649 782.7H1651.7V787H1649ZM1653 782.7H1657.8V787H1653ZM1659.3 782.7H1662.9V787H1659.3ZM1664.4 782.7H1669V787H1664.4ZM1670.3 782.7H1673.7V787H1670.3ZM1676 782.7H1680V787H1676ZM1681 782.7H1684.9V787H1681ZM1686.9 782.7H1690.8V787H1686.9ZM1633 788.9H1634.7V794.3H1633ZM1637 788.9H1641V794.3H1637ZM1642.2 788.9H1644V794.3H1642.2ZM1649 788.9H1651.7V794.3H1649ZM1653 788.9H1657.8V794.3H1653ZM1659.3 788.9H1662.9V794.3H1659.3ZM1664.4 788.9H1669V794.3H1664.4ZM1670.3 788.9H1673.7V794.3H1670.3ZM1676 788.9H1680V794.3H1676ZM1681 788.9H1684.9V794.3H1681ZM1686.9 788.9H1690.8V794.3H1686.9ZM1633 795H1634.7V796H1633ZM1637 795H1641V796H1637ZM1642.2 795H1644V796H1642.2ZM1649 795H1651.7V796H1649ZM1653 795H1657.8V796H1653ZM1659.3 795H1662.9V796H1659.3ZM1664.4 795H1669V796H1664.4ZM1670.3 795H1673.7V796H1670.3ZM1676 795H1680V796H1676ZM1681 795H1684.9V796H1681ZM1686.9 795H1690.8V796H1686.9ZM1633 796.8H1634.7V803.8H1633ZM1637 796.8H1641V803.8H1637ZM1642.2 796.8H1644V803.8H1642.2ZM1649 796.8H1651.7V803.8H1649ZM1653 796.8H1657.8V803.8H1653ZM1659.3 796.8H1662.9V803.8H1659.3ZM1664.4 796.8H1669V803.8H1664.4ZM1670.3 796.8H1673.7V803.8H1670.3ZM1676 796.8H1680V803.8H1676ZM1681 796.8H1684.9V803.8H1681ZM1686.9 796.8H1690.8V803.8H1686.9ZM1633 808H1634.7V813H1633ZM1637 808H1641V813H1637ZM1642.2 808H1644V813H1642.2ZM1649 808H1651.7V813H1649ZM1653 808H1657.8V813H1653ZM1659.3 808H1662.9V813H1659.3ZM1664.4 808H1669V813H1664.4ZM1670.3 808H1673.7V813H1670.3ZM1676 808H1680V813H1676ZM1681 808H1684.9V813H1681ZM1686.9 808H1690.8V813H1686.9ZM1633 814H1634.7V818.8H1633ZM1637 814H1641V818.8H1637ZM1642.2 814H1644V818.8H1642.2ZM1649 814H1651.7V818.8H1649ZM1653 814H1657.8V818.8H1653ZM1659.3 814H1662.9V818.8H1659.3ZM1664.4 814H1669V818.8H1664.4ZM1670.3 814H1673.7V818.8H1670.3ZM1676 814H1680V818.8H1676ZM1681 814H1684.9V818.8H1681ZM1686.9 814H1690.8V818.8H1686.9ZM1633 823H1634.7V830.4H1633ZM1637 823H1641V830.4H1637ZM1642.2 823H1644V830.4H1642.2ZM1649 823H1651.7V830.4H1649ZM1653 823H1657.8V830.4H1653ZM1659.3 823H1662.9V830.4H1659.3ZM1664.4 823H1669V830.4H1664.4ZM1670.3 823H1673.7V830.4H1670.3ZM1676 823H1680V830.4H1676ZM1681 823H1684.9V830.4H1681ZM1686.9 823H1690.8V830.4H1686.9ZM1633 831.2H1634.7V832.2H1633ZM1637 831.2H1641V832.2H1637ZM1642.2 831.2H1644V832.2H1642.2ZM1649 831.2H1651.7V832.2H1649ZM1653 831.2H1657.8V832.2H1653ZM1659.3 831.2H1662.9V832.2H1659.3ZM1664.4 831.2H1669V832.2H1664.4ZM1670.3 831.2H1673.7V832.2H1670.3ZM1676 831.2H1680V832.2H1676ZM1681 831.2H1684.9V832.2H1681ZM1686.9 831.2H1690.8V832.2H1686.9ZM1633 833H1634.7V837.7H1633ZM1637 833H1641V837.7H1637ZM1642.2 833H1644V837.7H1642.2ZM1649 833H1651.7V837.7H1649ZM1653 833H1657.8V837.7H1653ZM1659.3 833H1662.9V837.7H1659.3ZM1664.4 833H1669V837.7H1664.4ZM1670.3 833H1673.7V837.7H1670.3ZM1676 833H1680V837.7H1676ZM1681 833H1684.9V837.7H1681ZM1686.9 833H1690.8V837.7H1686.9ZM1633 839.7H1634.7V844H1633ZM1637 839.7H1641V844H1637ZM1642.2 839.7H1644V844H1642.2ZM1649 839.7H1651.7V844H1649ZM1653 839.7H1657.8V844H1653ZM1659.3 839.7H1662.9V844H1659.3ZM1664.4 839.7H1669V844H1664.4ZM1670.3 839.7H1673.7V844H1670.3ZM1676 839.7H1680V844H1676ZM1681 839.7H1684.9V844H1681ZM1686.9 839.7H1690.8V844H1686.9ZM1633 848H1634.7V855H1633ZM1637 848H1641V855H1637ZM1642.2 848H1644V855H1642.2ZM1649 848H1651.7V855H1649ZM1653 848H1657.8V855H1653ZM1659.3 848H1662.9V855H1659.3ZM1664.4 848H1669V855H1664.4ZM1670.3 848H1673.7V855H1670.3ZM1676 848H1680V855H1676ZM1681 848H1684.9V855H1681ZM1686.9 848H1690.8V855H1686.9ZM1633 856H1634.7V857H1633ZM1637 856H1641V857H1637ZM1642.2 856H1644V857H1642.2ZM1649 856H1651.7V857H1649ZM1653 856H1657.8V857H1653ZM1659.3 856H1662.9V857H1659.3ZM1664.4 856H1669V857H1664.4ZM1670.3 856H1673.7V857H1670.3ZM1676 856H1680V857H1676ZM1681 856H1684.9V857H1681ZM1686.9 856H1690.8V857H1686.9ZM1633 858.6H1634.7V863H1633ZM1637 858.6H1641V863H1637ZM1642.2 858.6H1644V863H1642.2ZM1649 858.6H1651.7V863H1649ZM1653 858.6H1657.8V863H1653ZM1659.3 858.6H1662.9V863H1659.3ZM1664.4 858.6H1669V863H1664.4ZM1670.3 858.6H1673.7V863H1670.3ZM1676 858.6H1680V863H1676ZM1681 858.6H1684.9V863H1681ZM1686.9 858.6H1690.8V863H1686.9ZM1633 865H1634.7V870H1633ZM1637 865H1641V870H1637ZM1642.2 865H1644V870H1642.2ZM1649 865H1651.7V870H1649ZM1653 865H1657.8V870H1653ZM1659.3 865H1662.9V870H1659.3ZM1664.4 865H1669V870H1664.4ZM1670.3 865H1673.7V870H1670.3ZM1676 865H1680V870H1676ZM1681 865H1684.9V870H1681ZM1686.9 865H1690.8V870H1686.9Z" fill="#000" stroke="none"/>
</g>
<g shape-rendering="crispEdges">
<path d="M1421 877.5H1568" stroke="#86f21a" stroke-width="1"/>
<path d="M1421 879.5H1568" stroke="#86f21a" stroke-width="1"/>
<rect x="1429.5" y="880.5" width="130" height="27" fill="none" stroke="#86f21a" stroke-width="1"/>
<rect x="1432.5" y="880.5" width="124" height="25" fill="none" stroke="#86f21a" stroke-width="1"/>
<path d="M1421 906.5H1568" stroke="#86f21a" stroke-width="2"/>
<path d="M1429 909.5H1560" stroke="#86f21a" stroke-width="1"/>
<path d="M1534 899.5H1554M1534 915.5H1554V899" fill="none" stroke="#86f21a" stroke-width="1" />
<path d="M1550.5 900V916" stroke="#86f21a" stroke-width="2"/>
<path d="M1546 907.5H1566" stroke="#86f21a" stroke-width="2"/>
</g>
<g shape-rendering="crispEdges">
<rect x="253.5" y="914.5" width="15" height="15" fill="none" stroke="#ffffff" stroke-width="1"/>
<path d="M261.5 853V914" stroke="#00d000" stroke-width="1"/>
<path d="M269 921.5H331" stroke="#ff0000" stroke-width="1"/>
</g>
<path d="M261.5 830L254 853H269Z" fill="none" stroke="#00d000" stroke-width="1" />
<path d="M355 921.5L331 913V930Z" fill="none" stroke="#ff0000" stroke-width="1" />
<path d="M254 798L261.5 807L269 798M261.5 807V817" fill="none" stroke="#ffffff" stroke-width="1.1" />
<path d="M371 914L385 929M385 914L371 929" fill="none" stroke="#ffffff" stroke-width="1.1" />
</g>
<rect x="1861" y="137" width="56" height="14" fill="#3c3c3c"/><path d="M1866 146.5h6M1883.5 142.5h6v5h-6zM1885.5 142v-2h6v5h-2M1902 140l8 8M1910 140l-8 8" stroke="#111" stroke-width="1.6" fill="none"/>
</svg>
<div class="abs" style="left:1116px;top:160px;width:763px;height:572px;background:#f9f9f9;border:1px solid #8f8f8f;border-radius:8px;box-shadow:0 2px 5px rgba(0,0,0,.5)"></div>
<div class="abs" style="left:1117px;top:161px;width:761px;height:30px;background:#f9efef;border-radius:7px 7px 0 0"></div>
<svg style="left:1123px;top:167px" width="17" height="17" viewBox="0 0 17 17"><rect x="0.5" y="1" width="16" height="15" fill="#1d3c8c"/><path d="M3 13L6 3L13 5L15 12L9 15Z" fill="#f2b21c"/><path d="M6 3L13 5L10 9Z" fill="#fbe08a"/><path d="M3 13L9 15L10 9Z" fill="#c47a10"/><path d="M1 6L6 8L4 12Z" fill="#3a9ad8"/></svg>
<span class="abs" style="left:1146px;top:168px;font-size:12px;white-space:pre;display:inline-block;transform-origin:0 50%;font-size:12px;color:#111;transform:scaleX(0.97);">Wstawianie szafek [1798]</span>
<svg style="left:1755px;top:166px" width="112" height="18" viewBox="0 0 112 18"><path d="M5 9.5H15" stroke="#c8bcbc" stroke-width="1"/><rect x="50.5" y="4.5" width="9" height="9" rx="1" fill="none" stroke="#222" stroke-width="1.1"/><path d="M96 4L106 14M106 4L96 14" stroke="#222" stroke-width="1.1"/></svg>
<div class="abs" style="left:1117px;top:191px;width:761px;height:21px;background:#f0f0f0"></div>
<div class="abs" style="left:1117px;top:191px;width:227px;height:22px;background:#f9f9f9"></div>
<div class="abs" style="left:1345px;top:194px;width:99px;height:18px;border:1px solid #e2e2e2;border-bottom:none;background:#f3f3f3"></div>
<span class="abs" style="left:1124px;top:194px;font-size:12px;white-space:pre;display:inline-block;transform-origin:0 50%;font-size:12px;color:#111;transform:scaleX(0.952);">Uniwersalna baza mebli kuchennych 2023</span>
<span class="abs" style="left:1350px;top:196px;font-size:12px;white-space:pre;display:inline-block;transform-origin:0 50%;font-size:12px;color:#111;transform:scaleX(0.945);">Baza użytkownika</span>
<div class="abs" style="left:1124px;top:219px;width:526px;height:21px;background:#fff;border:1px solid #d4d4d4;border-bottom-color:#9a9a9a;border-radius:3px"></div>
<span class="abs" style="left:1129px;top:223px;font-size:12px;white-space:pre;display:inline-block;transform-origin:0 50%;font-size:12px;color:#111;transform:scaleX(0.95);">*</span>
<svg style="left:1635px;top:227px" width="10" height="6" viewBox="0 0 10 6"><path d="M0.5 0.5L5 5L9.5 0.5" fill="none" stroke="#444" stroke-width="1.1"/></svg>
<svg style="left:1658px;top:219px" width="20" height="20" viewBox="0 0 20 20"><path d="M3 17L9 10.5" stroke="#222" stroke-width="2.6" stroke-linecap="round"/><circle cx="12" cy="7.5" r="5" fill="#dcdcdc" stroke="#2a2a2a" stroke-width="1.6"/><path d="M9.5 6Q11 4 13.5 4.5" stroke="#fff" stroke-width="1.2" fill="none"/></svg>
<span class="abs" style="left:1126px;top:250px;font-size:12px;white-space:pre;display:inline-block;transform-origin:0 50%;font-size:12px;color:#111;transform:scaleX(0.9);">X</span>
<div class="abs" style="left:1138px;top:246px;width:50px;height:21px;background:#fff;border:1px solid #d4d4d4;border-bottom-color:#9a9a9a;border-radius:3px"></div>
<span class="abs" style="left:1143px;top:250px;font-size:12px;white-space:pre;display:inline-block;transform-origin:0 50%;font-size:12px;color:#111;transform:scaleX(0.95);">*</span>
<svg style="left:1173px;top:254px" width="10" height="6" viewBox="0 0 10 6"><path d="M0.5 0.5L5 5L9.5 0.5" fill="none" stroke="#444" stroke-width="1.1"/></svg>
<span class="abs" style="left:1195px;top:250px;font-size:12px;white-space:pre;display:inline-block;transform-origin:0 50%;font-size:12px;color:#111;transform:scaleX(0.9);">Y</span>
<div class="abs" style="left:1210px;top:246px;width:50px;height:21px;background:#fff;border:1px solid #d4d4d4;border-bottom-color:#9a9a9a;border-radius:3px"></div>
<span class="abs" style="left:1215px;top:250px;font-size:12px;white-space:pre;display:inline-block;transform-origin:0 50%;font-size:12px;color:#111;transform:scaleX(0.95);">*</span>
<svg style="left:1245px;top:254px" width="10" height="6" viewBox="0 0 10 6"><path d="M0.5 0.5L5 5L9.5 0.5" fill="none" stroke="#444" stroke-width="1.1"/></svg>
<span class="abs" style="left:1270px;top:250px;font-size:12px;white-space:pre;display:inline-block;transform-origin:0 50%;font-size:12px;color:#111;transform:scaleX(0.9);">Z</span>
<div class="abs" style="left:1288px;top:246px;width:50px;height:21px;background:#fff;border:1px solid #d4d4d4;border-bottom-color:#9a9a9a;border-radius:3px"></div>
<span class="abs" style="left:1293px;top:250px;font-size:12px;white-space:pre;display:inline-block;transform-origin:0 50%;font-size:12px;color:#111;transform:scaleX(0.95);">*</span>
<svg style="left:1323px;top:254px" width="10" height="6" viewBox="0 0 10 6"><path d="M0.5 0.5L5 5L9.5 0.5" fill="none" stroke="#444" stroke-width="1.1"/></svg>
<i class="abs" style="left:1343px;top:248px;width:1px;height:18px;background:#b4b4b4"></i><i class="abs" style="left:1431px;top:248px;width:1px;height:18px;background:#b4b4b4"></i>
<svg style="left:1350px;top:245px" width="23" height="23" viewBox="0 0 23 23"><path d="M0.5 22V0.5H22" fill="none" stroke="#c8c8c8"/><path d="M0 22.5H23" stroke="#222" stroke-width="1.2"/><path d="M2.5 21.5V11.5H13.5V21.5M8 11.5V21.5M2.5 15H13.5M13.5 21.5V6.5H20.5V21.5M17 2V6.5M13.5 12H20.5" fill="none" stroke="#333" stroke-width="1.1"/></svg>
<svg style="left:1376px;top:245px" width="23" height="23" viewBox="0 0 23 23"><path d="M0.5 22V0.5H22.5V12" fill="none" stroke="#c8c8c8"/><path d="M0 22.5H23" stroke="#222" stroke-width="1.2"/><path d="M3.500 4.500H7.500V12.500H3.500ZM9.500 4.500H20.500V8.500H9.500ZM9.500 8.500H14.500V12.500H9.500Z" fill="none" stroke="#333" stroke-width="1.1"/></svg>
<svg style="left:1403px;top:245px" width="23" height="23" viewBox="0 0 23 23"><path d="M22.5 0.5V22" fill="none" stroke="#c8c8c8"/><path d="M0 22.5H23" stroke="#222" stroke-width="1.2"/><path d="M2.500 2.500H6.500V7.500H2.500ZM9.500 2.500H20.500V5.500H9.500ZM2.500 20.500V13.500H12.500V20.500ZM7.500 13.500V20.500M2.500 17H12.500M12.500 20.500V8.500H20.500V20.500M12.500 13H20.500" fill="none" stroke="#333" stroke-width="1.1"/></svg>
<svg style="left:1441px;top:247px" width="21" height="21" viewBox="0 0 21 21"><g fill="none" stroke="#333" stroke-width="1"><rect x="1.5" y="1.5" width="3" height="3"/><rect x="1.5" y="6.5" width="3" height="3"/><rect x="1.5" y="11.5" width="3" height="3"/><rect x="1.5" y="16.5" width="3" height="3"/><rect x="6.5" y="1.5" width="3" height="3"/><rect x="6.5" y="6.5" width="3" height="3"/><rect x="6.5" y="11.5" width="3" height="3"/><rect x="6.5" y="16.5" width="3" height="3"/><rect x="11.5" y="1.5" width="3" height="3"/><rect x="11.5" y="6.5" width="3" height="3"/><rect x="11.5" y="11.5" width="3" height="3"/><rect x="11.5" y="16.5" width="3" height="3"/><rect x="16.5" y="1.5" width="3" height="3"/><rect x="16.5" y="6.5" width="3" height="3"/><rect x="16.5" y="11.5" width="3" height="3"/><rect x="16.5" y="16.5" width="3" height="3"/></g></svg>
<svg style="left:1471px;top:247px" width="21" height="21" viewBox="0 0 21 21"><g fill="none" stroke="#333" stroke-width="1"><rect x="1.5" y="1.5" width="3" height="3"/><rect x="6.500" y="7.500" width="3" height="3"/><rect x="6.500" y="12.500" width="3" height="3"/><rect x="1.5" y="16.5" width="3" height="3"/><path d="M3 5V16M3 9H6M3 14H6"/><path d="M11 9H20M11 14H20M6 18H15" stroke-dasharray="2.5 1.5"/></g></svg>
<i class="abs" style="left:1120px;top:274px;width:583px;height:1px;background:#7a7a7a"></i>
<div class="abs" style="left:1120px;top:276px;width:583px;height:356px;background:#f0f0f0;overflow:hidden">
<div class="abs" style="left:0;top:0;width:564px;height:356px;background:#fff"></div>
<div class="abs" style="left:0;top:1px;width:564px;height:99px;background:#f59b50"><div class="abs" style="left:2px;top:0;width:80px;height:99px;background:#fff;overflow:hidden"><svg style="left:-2px;top:0" width="82" height="99" viewBox="0 0 82 99"><path d="M8 86L27 16L33 18L14 88Z" fill="#f0f0f0"/><path d="M0 89.500L82 77.500V99H0Z" fill="#b8b8b8"/><rect x="47.500" y="84" width="7" height="8" fill="#e6e6e6" stroke="#aaa" stroke-width=".6"/><rect x="50.500" y="19" width="4.500" height="65" fill="#d8d8d8" stroke="#888" stroke-width=".5"/><rect x="48" y="19" width="2.600" height="65" fill="#2e2e2e"/><path d="M28 10L56 17.500V21.500L28 14Z" fill="#555"/><path d="M28 9.500L31 7.500L58 15L56 17.500Z" fill="#e0e0e0" stroke="#777" stroke-width=".5"/></svg></div><span class="abs" style="left:92px;top:43px;font-size:12px;white-space:pre;display:inline-block;transform-origin:0 50%;font-size:11px;transform:scaleX(.97);color:#111">BD-10  [100 x 580 x 720]</span></div>
<div class="abs" style="left:0;top:101px;width:564px;height:99px;background:#efefef"><div class="abs" style="left:0px;top:0;width:82px;height:99px;background:#fff;overflow:hidden"><svg style="left:0px;top:0" width="82" height="99" viewBox="0 0 82 99"><path d="M8 40L12 38V99H8Z" fill="#f0f0f0"/><path d="M0 88L82 72V99H0Z" fill="#b4b4b4"/><path d="M42.500 12Q44.500 9 46.500 12V92Q44.500 94 42.500 92Z" fill="#dadada" stroke="#555" stroke-width=".9"/><path d="M43.500 12V92" stroke="#444" stroke-width="1"/></svg></div><span class="abs" style="left:92px;top:43px;font-size:12px;white-space:pre;display:inline-block;transform-origin:0 50%;font-size:11px;transform:scaleX(.97);color:#111">BH-10  [100 x 580 x 2010]</span></div>
<div class="abs" style="left:0;top:201px;width:564px;height:99px;background:#cfcfcf"><div class="abs" style="left:0px;top:0;width:82px;height:99px;background:#fff;overflow:hidden"><svg style="left:0px;top:0" width="82" height="99" viewBox="0 0 82 99"><path d="M8 30L12 28V99H8Z" fill="#f0f0f0"/><path d="M0 96L82 80V99H0Z" fill="#b4b4b4"/><path d="M42.500 10Q44.500 7 46.500 10V96Q44.500 98 42.500 96Z" fill="#dadada" stroke="#555" stroke-width=".9"/><path d="M43.500 10V96" stroke="#444" stroke-width="1"/></svg></div><span class="abs" style="left:92px;top:43px;font-size:12px;white-space:pre;display:inline-block;transform-origin:0 50%;font-size:11px;transform:scaleX(.97);color:#111">BHH-10  [100 x 580 x 2215]</span></div>
<div class="abs" style="left:0;top:301px;width:564px;height:99px;background:#efefef"><div class="abs" style="left:0px;top:0;width:82px;height:99px;background:#fff;overflow:hidden"><svg style="left:0px;top:0" width="82" height="99" viewBox="0 0 82 99"><path d="M20 56L32 14L36 16L24 56Z" fill="#ededed"/><path d="M32 11L52 17V21L33 15Z" fill="#5a5a5a"/><path d="M32 9.500L53 15.500L52 17L32 11Z" fill="#d8d8d8" stroke="#666" stroke-width=".5"/><path d="M49 18L53 17V60H49Z" fill="#d4d4d4" stroke="#777" stroke-width=".5"/><path d="M47 19H50V60H47Z" fill="#2e2e2e"/></svg></div><span class="abs" style="left:92px;top:43px;font-size:12px;white-space:pre;display:inline-block;transform-origin:0 50%;font-size:11px;transform:scaleX(.97);color:#111">BJ-10  [100 x 320 x 720]</span></div>
<i class="abs" style="left:572px;top:17px;width:2px;height:17px;background:#8a8a8a"></i><i class="abs" style="left:564px;top:0;width:2px;height:356px;background:#fff"></i>
</div>
<i class="abs" style="left:1704px;top:215px;width:1px;height:418px;background:#a0a0a0"></i><i class="abs" style="left:1705px;top:215px;width:1px;height:418px;background:#fff"></i>
<div class="abs" style="left:1707px;top:221px;width:168px;height:74px;border:1px solid #dcdcdc;border-radius:2px"></div>
<div class="abs" style="left:1712px;top:215px;width:40px;height:14px;background:#f9f9f9"></div>
<span class="abs" style="left:1714px;top:215px;font-size:12px;white-space:pre;display:inline-block;transform-origin:0 50%;font-size:12px;color:#111;transform:scaleX(0.95);">Zestaw</span>
<div class="abs" style="left:1712px;top:239px;width:128px;height:21px;background:#fff;border:1px solid #d4d4d4;border-bottom-color:#9a9a9a;border-radius:3px"></div>
<span class="abs" style="left:1717px;top:243px;font-size:12px;white-space:pre;display:inline-block;transform-origin:0 50%;font-size:12px;color:#111;transform:scaleX(0.88);">ANKONA</span>
<svg style="left:1825px;top:247px" width="10" height="6" viewBox="0 0 10 6"><path d="M0.5 0.5L5 5L9.5 0.5" fill="none" stroke="#444" stroke-width="1.1"/></svg>
<svg style="left:1845px;top:236px" width="22" height="24" viewBox="0 0 22 24"><path d="M4.500 1.500H15.500L20.500 6.500V22.500H4.500Z" fill="#a9c8f0" stroke="#5a8ad0" stroke-width="1"/><path d="M15.500 1.500V6.500H20.500" fill="#dbe8fa" stroke="#5a8ad0" stroke-width="1"/><circle cx="12" cy="12" r="5.2" fill="#eaf2fc" stroke="#2a5aa8" stroke-width="1.5"/><path d="M8 16L1.500 22.500" stroke="#e08a1c" stroke-width="2.4" stroke-linecap="round"/></svg>
<div class="abs" style="left:1712px;top:267px;width:157px;height:22px;background:#fdfdfd;border:1px solid #d0d0d0;border-bottom-color:#bdbdbd;border-radius:4px;text-align:center;line-height:21px"><span style="font-size:12px;white-space:pre;display:inline-block;transform-origin:0 50%;transform-origin:50% 50%;transform:scaleX(0.96);color:#111">Określ kolorystykę</span></div>
<div class="abs" style="left:1707px;top:303px;width:168px;height:143px;border:1px solid #dcdcdc;border-radius:2px"></div>
<div class="abs" style="left:1712px;top:297px;width:46px;height:14px;background:#f9f9f9"></div>
<span class="abs" style="left:1714px;top:297px;font-size:12px;white-space:pre;display:inline-block;transform-origin:0 50%;font-size:12px;color:#111;transform:scaleX(0.95);">Uchwyty</span>
<div class="abs" style="left:1716px;top:315px;width:149px;height:21px;background:#f7f7f7;border:1px solid #e4e4e4;border-bottom-color:#dcdcdc;border-radius:3px"></div>
<span class="abs" style="left:1721px;top:319px;font-size:12px;white-space:pre;display:inline-block;transform-origin:0 50%;font-size:12px;color:#8a8a8a;transform:scaleX(0.97);">Bez uchwytów</span>
<svg style="left:1850px;top:323px" width="10" height="6" viewBox="0 0 10 6"><path d="M0.5 0.5L5 5L9.5 0.5" fill="none" stroke="#9a9a9a" stroke-width="1.1"/></svg>
<div class="abs" style="left:1716px;top:345px;width:64px;height:74px;background:#000"></div>
<span class="abs" style="left:1784px;top:344px;font-size:12px;white-space:pre;display:inline-block;transform-origin:0 50%;font-size:12px;color:#111;transform:scaleX(0.95);">Zawiasy</span>
<i class="abs" style="left:1784px;top:366px;width:12px;height:12px;border:1px solid #b4b4b4;border-radius:50%;background:#fbfbfb"></i>
<span class="abs" style="left:1800px;top:365px;font-size:12px;white-space:pre;display:inline-block;transform-origin:0 50%;font-size:12px;color:#777;transform:scaleX(0.95);">Lewe</span>
<i class="abs" style="left:1784px;top:387px;width:12px;height:12px;border:1px solid #b4b4b4;border-radius:50%;background:#fbfbfb"></i>
<span class="abs" style="left:1800px;top:386px;font-size:12px;white-space:pre;display:inline-block;transform-origin:0 50%;font-size:12px;color:#777;transform:scaleX(0.95);">Prawe</span>
<div class="abs" style="left:1707px;top:455px;width:168px;height:62px;border:1px solid #dcdcdc;border-radius:2px"></div>
<div class="abs" style="left:1714px;top:467px;width:73px;height:20px;background:#fdfdfd;border:1px solid #d0d0d0;border-bottom-color:#bdbdbd;border-radius:4px;text-align:center;line-height:19px"><span style="font-size:12px;white-space:pre;display:inline-block;transform-origin:0 50%;transform-origin:50% 50%;transform:scaleX(0.96);color:#111">Fronty</span></div>
<div class="abs" style="left:1796px;top:467px;width:73px;height:20px;background:#fdfdfd;border:1px solid #d0d0d0;border-bottom-color:#bdbdbd;border-radius:4px;text-align:center;line-height:19px"><span style="font-size:12px;white-space:pre;display:inline-block;transform-origin:0 50%;transform-origin:50% 50%;transform:scaleX(0.96);color:#111">Cokoły</span></div>
<div class="abs" style="left:1712px;top:492px;width:157px;height:20px;background:#f7f7f7;border:1px solid #e4e4e4;border-bottom-color:#dcdcdc;border-radius:3px"></div>
<svg style="left:1854px;top:500px" width="10" height="6" viewBox="0 0 10 6"><path d="M0.5 0.5L5 5L9.5 0.5" fill="none" stroke="#9a9a9a" stroke-width="1.1"/></svg>
<div class="abs" style="left:1707px;top:525px;width:168px;height:82px;border:1px solid #dcdcdc;border-radius:2px"></div>
<div class="abs" style="left:1712px;top:519px;width:98px;height:14px;background:#f9f9f9"></div>
<span class="abs" style="left:1714px;top:519px;font-size:12px;white-space:pre;display:inline-block;transform-origin:0 50%;font-size:12px;color:#111;transform:scaleX(0.95);">Odsunięcia szafek</span>
<div class="abs" style="left:1794px;top:543px;width:73px;height:21px;background:#fff;border:1px solid #d4d4d4;border-bottom-color:#9a9a9a;border-radius:3px"></div>
<span class="abs" style="left:1799px;top:547px;font-size:12px;white-space:pre;display:inline-block;transform-origin:0 50%;font-size:12px;color:#111;transform:scaleX(0.95);">0</span>
<svg style="left:1852px;top:551px" width="10" height="6" viewBox="0 0 10 6"><path d="M0.5 0.5L5 5L9.5 0.5" fill="none" stroke="#444" stroke-width="1.1"/></svg>
<div class="abs" style="left:1794px;top:575px;width:73px;height:21px;background:#fff;border:1px solid #d4d4d4;border-bottom-color:#9a9a9a;border-radius:3px"></div>
<span class="abs" style="left:1799px;top:579px;font-size:12px;white-space:pre;display:inline-block;transform-origin:0 50%;font-size:12px;color:#111;transform:scaleX(0.95);">0</span>
<svg style="left:1852px;top:583px" width="10" height="6" viewBox="0 0 10 6"><path d="M0.5 0.5L5 5L9.5 0.5" fill="none" stroke="#444" stroke-width="1.1"/></svg>
<svg style="left:1716px;top:544px" width="38" height="18" viewBox="0 0 38 18"><rect x="1.5" y="1.500" width="13" height="14" fill="#e0814a" stroke="#a85a2a" stroke-width="1"/><rect x="27" y="1" width="8" height="15" fill="#9a9a9a"/><path d="M35.500 1V16" stroke="#222" stroke-width="1.3"/><path d="M13 11.500H32M13 9L17 14M13 14L17 9M28 9L32 14M28 14L32 9" stroke="#111" stroke-width="1"/></svg>
<svg style="left:1716px;top:576px" width="38" height="18" viewBox="0 0 38 18"><rect x="1.5" y="1.500" width="13" height="14" fill="#e0814a" stroke="#a85a2a" stroke-width="1"/><rect x="22.500" y="1.500" width="13" height="14" fill="#e0814a" stroke="#a85a2a" stroke-width="1"/><path d="M1.500 5H14.500M22.500 5H35.500" stroke="#a85a2a"/><path d="M12 11.500H25M12 9L16 14M12 14L16 9M21 9L25 14M21 14L25 9" stroke="#111" stroke-width="1"/></svg>
<div class="abs" style="left:1117px;top:632px;width:761px;height:99px;background:#f9f9f9;border-radius:0 0 7px 7px"></div>
<div class="abs" style="left:1121px;top:640px;width:754px;height:36px;border:1px solid #dcdcdc;border-radius:2px"></div>
<div class="abs" style="left:1126px;top:633px;width:130px;height:15px;background:#f9f9f9"></div>
<span class="abs" style="left:1129px;top:634px;font-size:12px;white-space:pre;display:inline-block;transform-origin:0 50%;font-size:12px;color:#111;transform:scaleX(0.925);">Wymiary robocze: BD-10</span>
<span class="abs" style="left:1131px;top:656px;font-size:12px;white-space:pre;display:inline-block;transform-origin:0 50%;font-size:12px;color:#111;transform:scaleX(0.9);">X</span>
<div class="abs" style="left:1144px;top:649px;width:43px;height:21px;background:#fff;border:1px solid #dcdcdc;border-bottom-color:#8a8a8a;border-radius:3px"></div>
<span class="abs" style="left:1148px;top:651px;font-size:12px;white-space:pre;display:inline-block;transform-origin:0 50%;font-size:12px;color:#111;transform:scaleX(0.95);">100</span>
<span class="abs" style="left:1191px;top:656px;font-size:12px;white-space:pre;display:inline-block;transform-origin:0 50%;font-size:12px;color:#111;transform:scaleX(0.9);">Y</span>
<div class="abs" style="left:1203px;top:649px;width:44px;height:21px;background:#fff;border:1px solid #dcdcdc;border-bottom-color:#8a8a8a;border-radius:3px"></div>
<span class="abs" style="left:1207px;top:651px;font-size:12px;white-space:pre;display:inline-block;transform-origin:0 50%;font-size:12px;color:#111;transform:scaleX(0.95);">580</span>
<span class="abs" style="left:1252px;top:656px;font-size:12px;white-space:pre;display:inline-block;transform-origin:0 50%;font-size:12px;color:#111;transform:scaleX(0.9);">Z</span>
<div class="abs" style="left:1263px;top:649px;width:44px;height:21px;background:#fff;border:1px solid #dcdcdc;border-bottom-color:#8a8a8a;border-radius:3px"></div>
<span class="abs" style="left:1267px;top:651px;font-size:12px;white-space:pre;display:inline-block;transform-origin:0 50%;font-size:12px;color:#111;transform:scaleX(0.95);">720</span>
<i class="abs" style="left:1316px;top:650px;width:1px;height:18px;background:#8a8a8a"></i><i class="abs" style="left:1473px;top:650px;width:1px;height:18px;background:#8a8a8a"></i>
<div class="abs" style="left:1327px;top:649px;width:56px;height:21px;background:#fff;border:1px solid #8a8a8a;border-radius:3px"></div>
<span class="abs" style="left:1331px;top:651px;font-size:12px;white-space:pre;display:inline-block;transform-origin:0 50%;font-size:12px;color:#111;transform:scaleX(0.95);">100</span>
<svg style="left:1369px;top:657px" width="10" height="6" viewBox="0 0 10 6"><path d="M0.5 0.5L5 5L9.5 0.5" fill="none" stroke="#444" stroke-width="1.1"/></svg>
<span class="abs" style="left:1388px;top:655px;font-size:12px;white-space:pre;display:inline-block;transform-origin:0 50%;font-size:12px;color:#111;transform:scaleX(0.915);">Poziom [mm]</span>
<div class="abs" style="left:1121px;top:683px;width:153px;height:19px;border:1px solid #dcdcdc;border-bottom:none"></div><div class="abs" style="left:1274px;top:683px;width:210px;height:43px;border:1px solid #dcdcdc;border-top-color:#dcdcdc"></div>
<div class="abs" style="left:1126px;top:676px;width:46px;height:15px;background:#f9f9f9"></div><div class="abs" style="left:1280px;top:676px;width:40px;height:15px;background:#f9f9f9"></div>
<span class="abs" style="left:1129px;top:677px;font-size:12px;white-space:pre;display:inline-block;transform-origin:0 50%;font-size:12px;color:#111;transform:scaleX(0.95);">Dostaw</span>
<span class="abs" style="left:1283px;top:677px;font-size:12px;white-space:pre;display:inline-block;transform-origin:0 50%;font-size:12px;color:#111;transform:scaleX(0.95);">Wstaw</span>
<div class="abs" style="left:1129px;top:692px;width:41px;height:24px;background:#f4f4f4;border:1px solid #e8e8e8;border-right:2px solid #8a8a8a;border-bottom:2px solid #7a7a7a"><svg style="left:7px;top:3px" width="28" height="18" viewBox="0 0 28 18"><rect x="1.500" y="8.500" width="7" height="7" fill="#fbb642" stroke="#7a4a10" stroke-width="1"/><rect x="8.500" y="8.500" width="7" height="7" fill="#fbb642" stroke="#7a4a10" stroke-width="1"/><rect x="15.500" y="5.500" width="8" height="10" fill="#fff" stroke="#555" stroke-width="1" stroke-dasharray="1 1"/><rect x="20" y="1" width="7" height="4" fill="#f5a21c"/><path d="M14 6Q15 2 20 3" fill="none" stroke="#333" stroke-width="1"/></svg></div>
<div class="abs" style="left:1177px;top:694px;width:37px;height:21px;background:#fdfdfd;border:1px solid #d0d0d0;border-bottom-color:#bdbdbd;border-radius:4px"><svg style="left:11px;top:3px" width="15" height="12" viewBox="0 0 15 12"><path d="M3 5.500L8 1V4H12V7.500H8V10.500Z" fill="#fff" stroke="#111" stroke-width="1.1" stroke-linejoin="round"/></svg></div>
<div class="abs" style="left:1224px;top:694px;width:37px;height:21px;background:#fdfdfd;border:1px solid #d0d0d0;border-bottom-color:#bdbdbd;border-radius:4px"><svg style="left:11px;top:3px" width="15" height="12" viewBox="0 0 15 12"><path d="M12 5.500L7 1V4H3V7.500H7V10.500Z" fill="#fff" stroke="#111" stroke-width="1.1" stroke-linejoin="round"/></svg></div>
<div class="abs" style="left:1281px;top:694px;width:93px;height:22px;background:#fdfdfd;border:1px solid #d0d0d0;border-bottom-color:#bdbdbd;border-radius:4px;text-align:center;line-height:21px"><span style="font-size:12px;white-space:pre;display:inline-block;transform-origin:0 50%;transform-origin:50% 50%;transform:scaleX(0.975);color:#111">Wskaż punkt</span></div>
<div class="abs" style="left:1382px;top:694px;width:93px;height:22px;background:#fdfdfd;border:1px solid #d0d0d0;border-bottom-color:#bdbdbd;border-radius:4px;text-align:center;line-height:21px"><span style="font-size:12px;white-space:pre;display:inline-block;transform-origin:0 50%;transform-origin:50% 50%;transform:scaleX(0.975);color:#111">Do narożnika</span></div>
<div class="abs" style="left:1795px;top:693px;width:73px;height:22px;background:#fdfdfd;border:1px solid #d0d0d0;border-bottom-color:#bdbdbd;border-radius:4px;text-align:center;line-height:21px"><span style="font-size:12px;white-space:pre;display:inline-block;transform-origin:0 50%;transform-origin:50% 50%;transform:scaleX(0.96);color:#111">Anuluj</span></div>
<i class="abs" style="left:1874px;top:633px;width:1px;height:95px;background:#a3a3a3"></i><i class="abs" style="left:1119px;top:727px;width:756px;height:1px;background:#a3a3a3"></i>
<div class="abs" style="left:0;top:973px;width:225px;height:5px;background:linear-gradient(#6e6e6e 0 1px,#a6a6a6 1px 3px,#cfd3dc 3px)"></div>
<div class="abs" style="left:225px;top:957px;width:1694px;height:19px;background:#f0f0f0"></div>
<div class="abs" style="left:226px;top:958px;width:16px;height:17px;background:#fafafa;border:1px solid #cfcfcf"><svg style="left:-1px;top:-1px" width="16" height="16" viewBox="0 0 16 16"><path d="M5 4V12.500M11 4.500L6.500 8.250L11 12Z" stroke="#111" stroke-width="1.2" fill="#111"/></svg></div>
<div class="abs" style="left:243px;top:958px;width:16px;height:17px;background:#fafafa;border:1px solid #cfcfcf"><svg style="left:-1px;top:-1px" width="16" height="16" viewBox="0 0 16 16"><path d="M10.500 4.500L6 8.250L10.500 12Z" stroke="#111" stroke-width="1.2" fill="#111"/></svg></div>
<div class="abs" style="left:260px;top:958px;width:16px;height:17px;background:#fafafa;border:1px solid #cfcfcf"><svg style="left:-1px;top:-1px" width="16" height="16" viewBox="0 0 16 16"><path d="M6 4.500L10.500 8.250L6 12Z" stroke="#111" stroke-width="1.2" fill="#111"/></svg></div>
<div class="abs" style="left:277px;top:958px;width:16px;height:17px;background:#fafafa;border:1px solid #cfcfcf"><svg style="left:-1px;top:-1px" width="16" height="16" viewBox="0 0 16 16"><path d="M11.500 4V12.500M5.500 4.500L10 8.250L5.500 12Z" stroke="#111" stroke-width="1.2" fill="#111"/></svg></div>
<div class="abs" style="left:294px;top:958px;width:16px;height:17px;background:#fafafa;border:1px solid #cfcfcf"><svg style="left:-1px;top:-1px" width="16" height="16" viewBox="0 0 16 16"><path d="M8.500 3.500V13M3.500 8.250H13.500" stroke="#111" stroke-width="2" fill="none"/></svg></div>
<svg style="left:312px;top:957px" width="125" height="19" viewBox="0 0 125 19"><path d="M3.500 1L11 17" stroke="#333" stroke-width="1"/><path d="M64 11L61 17" stroke="#333" stroke-width="1" /><path d="M113 17L119 1" stroke="#333" stroke-width="1"/><path d="M63 1L71 17H111L118 1Z" fill="#fff"/><path d="M63.500 1L71 17M112 17L118.500 1" stroke="#111" stroke-width="1"/></svg>
<span class="abs" style="left:329px;top:960px;font-size:12px;color:#222;white-space:pre;transform-origin:0 50%;transform:scaleX(.867)">Layout1</span>
<span class="abs" style="left:385px;top:960px;font:bold 12px 'Liberation Sans',sans-serif;color:#000;white-space:pre;transform-origin:0 50%;transform:scaleX(.93)">Model</span>
<div class="abs" style="left:0;top:976px;width:1919px;height:5px;background:linear-gradient(#c6cad4,#aeb2bc)"></div>
<div class="abs" style="left:0;top:978px;width:20px;height:26px;background:#cfd3dc"></div>
<svg style="left:4px;top:984px" width="12" height="12" viewBox="0 0 12 12"><path d="M1.500 1.500L10 10M10 1.500L1.500 10" stroke="#111" stroke-width="1.7"/></svg>
<div class="abs" style="left:20px;top:980px;width:1899px;height:22px;background:#fff;border-top:1px solid #6a6a6a;border-left:1px solid #8a8a8a"></div>
<div class="abs" style="left:1902px;top:981px;width:17px;height:21px;background:#eaeaea"></div>
<span class="abs" style="left:25px;top:983px;font:bold 12px 'Liberation Sans',sans-serif;color:#111">:</span>
<div class="abs" style="left:0;top:1002px;width:1919px;height:30px;background:linear-gradient(#f4f4f6 0,#e0e2e8 2px,#c9ccd5 4px,#b3b7c1 10px,#bfc3cd 20px,#cdd0d9 30px)"></div>
<i class="abs" style="left:1123px;top:1006px;width:1px;height:26px;background:#8e929c"></i><i class="abs" style="left:1124px;top:1006px;width:1px;height:26px;background:#e4e6ec"></i>
<i class="abs" style="left:1133px;top:1006px;width:1px;height:26px;background:#8e929c"></i><i class="abs" style="left:1134px;top:1006px;width:1px;height:26px;background:#e4e6ec"></i>
<i class="abs" style="left:1275px;top:1006px;width:1px;height:26px;background:#8e929c"></i><i class="abs" style="left:1276px;top:1006px;width:1px;height:26px;background:#e4e6ec"></i>
<i class="abs" style="left:1305px;top:1006px;width:1px;height:26px;background:#8e929c"></i><i class="abs" style="left:1306px;top:1006px;width:1px;height:26px;background:#e4e6ec"></i>
<i class="abs" style="left:1335px;top:1006px;width:1px;height:26px;background:#8e929c"></i><i class="abs" style="left:1336px;top:1006px;width:1px;height:26px;background:#e4e6ec"></i>
<i class="abs" style="left:1384px;top:1006px;width:1px;height:26px;background:#8e929c"></i><i class="abs" style="left:1385px;top:1006px;width:1px;height:26px;background:#e4e6ec"></i>
<i class="abs" style="left:1414px;top:1006px;width:1px;height:26px;background:#8e929c"></i><i class="abs" style="left:1415px;top:1006px;width:1px;height:26px;background:#e4e6ec"></i>
<i class="abs" style="left:1444px;top:1006px;width:1px;height:26px;background:#8e929c"></i><i class="abs" style="left:1445px;top:1006px;width:1px;height:26px;background:#e4e6ec"></i>
<i class="abs" style="left:1474px;top:1006px;width:1px;height:26px;background:#8e929c"></i><i class="abs" style="left:1475px;top:1006px;width:1px;height:26px;background:#e4e6ec"></i>
<i class="abs" style="left:1503px;top:1006px;width:1px;height:26px;background:#8e929c"></i><i class="abs" style="left:1504px;top:1006px;width:1px;height:26px;background:#e4e6ec"></i>
<i class="abs" style="left:1534px;top:1006px;width:1px;height:26px;background:#8e929c"></i><i class="abs" style="left:1535px;top:1006px;width:1px;height:26px;background:#e4e6ec"></i>
<i class="abs" style="left:1564px;top:1006px;width:1px;height:26px;background:#8e929c"></i><i class="abs" style="left:1565px;top:1006px;width:1px;height:26px;background:#e4e6ec"></i>
<i class="abs" style="left:1593px;top:1006px;width:1px;height:26px;background:#8e929c"></i><i class="abs" style="left:1594px;top:1006px;width:1px;height:26px;background:#e4e6ec"></i>
<i class="abs" style="left:1623px;top:1006px;width:1px;height:26px;background:#8e929c"></i><i class="abs" style="left:1624px;top:1006px;width:1px;height:26px;background:#e4e6ec"></i>
<i class="abs" style="left:1653px;top:1006px;width:1px;height:26px;background:#8e929c"></i><i class="abs" style="left:1654px;top:1006px;width:1px;height:26px;background:#e4e6ec"></i>
<i class="abs" style="left:1683px;top:1006px;width:1px;height:26px;background:#8e929c"></i><i class="abs" style="left:1684px;top:1006px;width:1px;height:26px;background:#e4e6ec"></i>
<i class="abs" style="left:1728px;top:1006px;width:1px;height:26px;background:#8e929c"></i><i class="abs" style="left:1729px;top:1006px;width:1px;height:26px;background:#e4e6ec"></i>
<i class="abs" style="left:1770px;top:1006px;width:1px;height:26px;background:#8e929c"></i><i class="abs" style="left:1771px;top:1006px;width:1px;height:26px;background:#e4e6ec"></i>
<i class="abs" style="left:1800px;top:1006px;width:1px;height:26px;background:#8e929c"></i><i class="abs" style="left:1801px;top:1006px;width:1px;height:26px;background:#e4e6ec"></i>
<i class="abs" style="left:1830px;top:1006px;width:1px;height:26px;background:#8e929c"></i><i class="abs" style="left:1831px;top:1006px;width:1px;height:26px;background:#e4e6ec"></i>
<i class="abs" style="left:1860px;top:1006px;width:1px;height:26px;background:#8e929c"></i><i class="abs" style="left:1861px;top:1006px;width:1px;height:26px;background:#e4e6ec"></i>
<i class="abs" style="left:1890px;top:1006px;width:1px;height:26px;background:#8e929c"></i><i class="abs" style="left:1891px;top:1006px;width:1px;height:26px;background:#e4e6ec"></i>
<svg style="left:1138px;top:1012px" width="16" height="16" viewBox="0 0 16 16"><path d="M8 1V15M1 8H15" stroke="#f00" stroke-width="2.2"/></svg>
<span class="abs" style="left:1167px;top:1011px;font-size:12px;color:#3a3d44;white-space:pre;transform-origin:0 50%;transform:scaleX(.897)">-2509,-3589,0</span>
<div class="abs" style="left:1280px;top:1007px;width:22px;height:22px;background:#cfe3f9;border:1px solid #3f7fd0"></div>
<svg style="left:1281px;top:1008px" width="20" height="20" viewBox="0 0 20 20"><path d="M0 20L20 0V20Z" fill="#fff"/><path d="M10 0V10" stroke="#00b050" stroke-width="1.4"/><path d="M10 10V20" stroke="#e0207a" stroke-width="1.4"/><path d="M0 10H10" stroke="#f00" stroke-width="1.4"/><path d="M10 10H20" stroke="#00d0e0" stroke-width="1.4"/><rect x="8" y="8" width="4" height="4" fill="#cfe3f9" stroke="#2090d0" stroke-width="1"/></svg>
<svg style="left:1311px;top:1009px" width="18" height="18" viewBox="0 0 18 18"><path d="M9 0V17" stroke="#1a9a3a" stroke-width="1.2"/><path d="M0 11H18" stroke="#e01a1a" stroke-width="1.2"/><rect x="7" y="9" width="4" height="4" fill="#fff" stroke="#e01a1a" stroke-width="1"/></svg>
<svg style="left:1341px;top:1009px" width="18" height="18" viewBox="0 0 18 18"><path d="M9 1.500Q10 6 10.500 8.500Q14 11 17 14.500Q12.500 13.500 9 11Q5.500 13.500 1 14.500Q4 11 7.500 8.500Q8 6 9 1.500Z" fill="#e8e8ea" stroke="#5a5d66" stroke-width="1.1" stroke-linejoin="round"/></svg>
<span class="abs" style="left:1367px;top:1011px;font-size:12px;color:#3a3d44;white-space:pre;transform-origin:0 50%;transform:scaleX(.8)">1:1</span>
<div class="abs" style="left:1389px;top:1007px;width:22px;height:22px;background:#cfe3f9;border:1px solid #3f7fd0"></div>
<svg style="left:1390px;top:1009px" width="18" height="18" viewBox="0 0 18 18"><path d="M9 1.500Q10 6 10.500 8.500Q14 11 17 14.500Q12.500 13.500 9 11Q5.500 13.500 1 14.500Q4 11 7.500 8.500Q8 6 9 1.500Z" fill="#e8e8ea" stroke="#5a5d66" stroke-width="1.1" stroke-linejoin="round"/><path d="M14 6.500Q17.500 6.500 17.500 10Q17.500 12 16 13.500V16H12.500V13.500Q11 12 11 10Q11 6.500 14 6.500Z" fill="#f5ee8a" stroke="#7a7a4a" stroke-width=".8"/></svg>
<svg style="left:1420px;top:1009px" width="18" height="18" viewBox="0 0 18 18"><path d="M9 1.500Q10 6 10.500 8.500Q14 11 17 14.500Q12.500 13.500 9 11Q5.500 13.500 1 14.500Q4 11 7.500 8.500Q8 6 9 1.500Z" fill="#d8dae0" stroke="#5a5d66" stroke-width="1.1" stroke-linejoin="round"/><path d="M14 0L10.500 5H13L11 9L16.500 3.500H13.500Z" fill="#c8862a"/></svg>
<div class="abs" style="left:1449px;top:1007px;width:22px;height:22px;background:#cfe3f9;border:1px solid #3f7fd0"></div>
<svg style="left:1451px;top:1009px" width="18" height="18" viewBox="0 0 18 18"><path d="M3 3h.1M7 3h.1M11 3h.1M15 3h.1M3 7h.1M7 7h.1M11 7h.1M15 7h.1M7 11h.1M11 11h.1M15 11h.1M7 15h.1M11 15h.1M15 15h.1" stroke="#222" stroke-width="1.600" stroke-linecap="square"/><rect x="1.500" y="12.500" width="3.500" height="3.500" fill="#e01a1a"/></svg>
<div class="abs" style="left:1479px;top:1007px;width:22px;height:22px;background:#cfe3f9;border:1px solid #3f7fd0"></div>
<svg style="left:1481px;top:1009px" width="18" height="18" viewBox="0 0 18 18"><path d="M4.500 0V18M9 0V18M13.500 0V18M0 4.500H18M0 9H18M0 13.500H18" stroke="#222" stroke-width="1.3"/></svg>
<div class="abs" style="left:1509px;top:1007px;width:22px;height:22px;background:#cfe3f9;border:1px solid #3f7fd0"></div>
<svg style="left:1511px;top:1009px" width="18" height="18" viewBox="0 0 18 18"><path d="M5 1.500V8.500M1.500 5H8.500" stroke="#222" stroke-width="1.3"/><rect x="6" y="11" width="10" height="4" fill="#111"/><rect x="6.500" y="11.500" width="2.500" height="3" fill="#fff" stroke="#111" stroke-width=".6"/></svg>
<div class="abs" style="left:1539px;top:1007px;width:22px;height:22px;background:#cfe3f9;border:1px solid #3f7fd0"></div>
<svg style="left:1541px;top:1009px" width="18" height="18" viewBox="0 0 18 18"><path d="M3.500 0V16" stroke="#1a9a3a" stroke-width="1.3"/><path d="M3 15.500H18" stroke="#e01a1a" stroke-width="1.3"/><path d="M3.500 9H9.500V15" fill="none" stroke="#2a4aa0" stroke-width="1.2"/></svg>
<svg style="left:1571px;top:1009px" width="18" height="18" viewBox="0 0 18 18"><circle cx="9" cy="10" r="7" fill="none" stroke="#333" stroke-width="1.7"/><path d="M9 10L15 2.500V10Z" fill="none" stroke="#e01a1a" stroke-width="1.2"/></svg>
<div class="abs" style="left:1599px;top:1007px;width:22px;height:22px;background:#cfe3f9;border:1px solid #3f7fd0"></div>
<svg style="left:1601px;top:1009px" width="18" height="18" viewBox="0 0 18 18"><rect x="3.500" y="3.500" width="13" height="13" fill="none" stroke="#222" stroke-width="1.3"/><rect x="1" y="1" width="4.500" height="4.500" fill="#fff" stroke="#e01a1a" stroke-width="1.2"/></svg>
<div class="abs" style="left:1629px;top:1007px;width:22px;height:22px;background:#cfe3f9;border:1px solid #3f7fd0"></div>
<svg style="left:1631px;top:1009px" width="18" height="18" viewBox="0 0 18 18"><path d="M16 2L3 15.500H16" fill="none" stroke="#222" stroke-width="1.5"/><path d="M8 8L12 12" stroke="#222" stroke-width="1"/></svg>
<div class="abs" style="left:1659px;top:1007px;width:22px;height:22px;background:#cfe3f9;border:1px solid #3f7fd0"></div>
<svg style="left:1661px;top:1009px" width="18" height="18" viewBox="0 0 18 18"><path d="M1 2.500H17M1 9H17M1 15.500H17" stroke="#222" stroke-width="1"/><path d="M1 2.500H11" stroke="#111" stroke-width="3"/><path d="M1 9H7" stroke="#111" stroke-width="3"/><path d="M1 15.500H9" stroke="#111" stroke-width="3.500"/></svg>
<span class="abs" style="left:1688px;top:1011px;font-size:12px;color:#2f3340;white-space:pre;transform-origin:0 50%;transform:scaleX(.89)">MODEL</span>
<span class="abs" style="left:1732px;top:1011px;font-size:12px;color:#9a9ea8;white-space:pre;transform-origin:0 50%;transform:scaleX(.765)">TABLET</span>
<svg style="left:1775px;top:1007px" width="22" height="22" viewBox="-11 -11 22 22"><g fill="#1b62c4"><rect x="-2" y="-10" width="4" height="5" transform="rotate(0)"/><rect x="-2" y="-10" width="4" height="5" transform="rotate(45)"/><rect x="-2" y="-10" width="4" height="5" transform="rotate(90)"/><rect x="-2" y="-10" width="4" height="5" transform="rotate(135)"/><rect x="-2" y="-10" width="4" height="5" transform="rotate(180)"/><rect x="-2" y="-10" width="4" height="5" transform="rotate(225)"/><rect x="-2" y="-10" width="4" height="5" transform="rotate(270)"/><rect x="-2" y="-10" width="4" height="5" transform="rotate(315)"/><circle r="7.500"/></g><circle r="3" fill="#c4c8d2"/></svg>
<svg style="left:1807px;top:1009px" width="18" height="18" viewBox="0 0 18 18"><circle cx="9" cy="5.500" r="4.500" fill="#4a4d55"/><circle cx="9" cy="5.500" r="1.800" fill="#b8bcc6"/><path d="M5 9L3 17L9 13.500L15 17L13 9Z" fill="#4a4d55"/></svg>
<svg style="left:1837px;top:1009px" width="18" height="18" viewBox="0 0 18 18"><rect x="1" y="1.500" width="16" height="11" fill="#1b62c4"/><path d="M6 16.500H12M9 12V16" stroke="#1b62c4" stroke-width="1.600"/><path d="M4 9.500L7.500 6M4 9.500V7M4 9.500H6.500M14 4L10.500 7.500M14 4V6.500M14 4H11.500" stroke="#fff" stroke-width="1.100" fill="none"/></svg>
<svg style="left:1865px;top:1008px" width="22" height="22" viewBox="0 0 22 22"><rect x="1.500" y="1.500" width="12" height="10" fill="#fff" stroke="#222" stroke-width="1"/><rect x="1" y="1" width="13" height="3" fill="#1b62c4"/><rect x="8.500" y="9.500" width="12" height="10" fill="#fff" stroke="#222" stroke-width="1"/><rect x="8" y="9" width="13" height="3" fill="#1b62c4"/></svg>
<svg style="left:1897px;top:1009px" width="18" height="18" viewBox="0 0 18 18"><circle cx="9" cy="9" r="7.500" fill="#fff" stroke="#222" stroke-width="1.600"/><path d="M9 3.500V14.500" stroke="#2a8ae0" stroke-width="2"/></svg>
</body></html>
